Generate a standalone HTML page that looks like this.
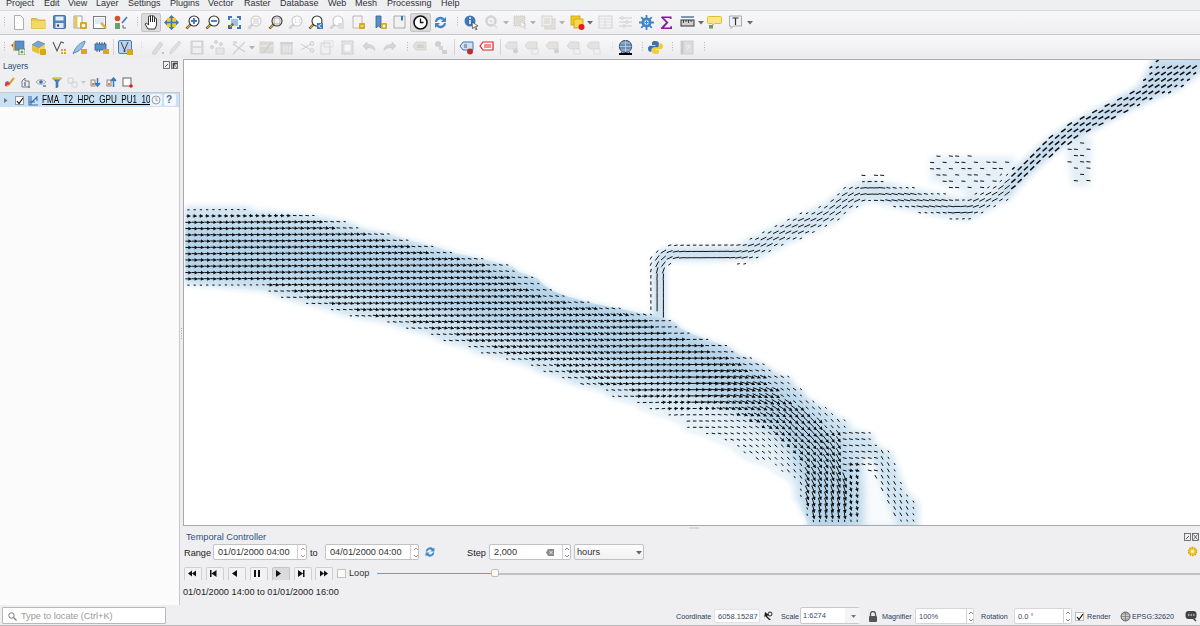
<!DOCTYPE html>
<html><head><meta charset="utf-8">
<style>
*{margin:0;padding:0;box-sizing:border-box}
html,body{width:1200px;height:626px;overflow:hidden;background:#efeff1;font-family:"Liberation Sans",sans-serif;font-size:9px;color:#222;position:relative}
.a{position:absolute}
.t{position:absolute;white-space:nowrap;line-height:1}
#menubar{left:0;top:0;width:1200px;height:11px;background:#eeeff1;border-bottom:1px solid #d9d9db;overflow:hidden}
#menubar span{position:absolute;top:-1.5px;font-size:9px;color:#303036;line-height:1}
#tb1{left:0;top:11px;width:1200px;height:24px;background:linear-gradient(#f8f8fa,#eeeef0);border-bottom:1px solid #c6c6c9}
#tb2{left:0;top:35px;width:1200px;height:23px;background:linear-gradient(#f8f8fa,#ececee)}
#tree{left:0;top:92px;width:180px;height:513px;background:#fbfbfb;border-top:1px solid #c8c8ca;border-right:1px solid #c8c8ca}
#canvas{left:183px;top:59px;width:1017px;height:467px;background:#fff;border-left:1px solid #a9a9ab;border-top:1px solid #a9a9ab;border-bottom:1px solid #a9a9ab;overflow:hidden}
.inp{position:absolute;background:#fff;border:1px solid #c2c2c4;border-radius:2px}
.spin{position:absolute;top:0;bottom:0;border-left:1px solid #d0d0d2}
.btn{position:absolute;top:567px;width:18px;height:13px;border:1px solid #cfcfd1;border-bottom:none;border-radius:2px 2px 0 0;background:#f2f2f4}
</style></head><body>
<div id="menubar" class="a">
<span style="left:6px">Project</span><span style="left:44px">Edit</span><span style="left:68px">View</span><span style="left:96px">Layer</span><span style="left:128px">Settings</span><span style="left:170px">Plugins</span><span style="left:208px">Vector</span><span style="left:244px">Raster</span><span style="left:280px">Database</span><span style="left:328px">Web</span><span style="left:355px">Mesh</span><span style="left:387px">Processing</span><span style="left:441px">Help</span>
</div>
<div id="tb1" class="a"></div>
<div id="tb2" class="a"></div>
<svg class="a" style="left:4px;top:17px" width="2" height="10.0" viewBox="0 0 2 10.0"><rect x="0" y="0.0" width="1" height="1" fill="#b8b8bc"/><rect x="0" y="2.5" width="1" height="1" fill="#b8b8bc"/><rect x="0" y="5.0" width="1" height="1" fill="#b8b8bc"/><rect x="0" y="7.5" width="1" height="1" fill="#b8b8bc"/></svg>
<svg class="a" style="left:13px;top:15px" width="15" height="15" viewBox="0 0 15 15"><path d="M1.5 .5h6l3 3v11h-9z" fill="#fff" stroke="#9a9a9a" stroke-width=".8"/></svg>
<svg class="a" style="left:31px;top:15px" width="15" height="15" viewBox="0 0 15 15"><path d="M.5 3.5h5l1.5 1.5h7v8.5h-13.5z" fill="#e9c74a" stroke="#c9a62a" stroke-width=".8"/><path d="M.5 6h14v7.5h-14z" fill="#f3d866"/></svg>
<svg class="a" style="left:53px;top:15px" width="15" height="15" viewBox="0 0 15 15"><rect x=".5" y=".5" width="12" height="13" rx="1" fill="#4f86c0" stroke="#2f5f95" stroke-width=".8"/><rect x="2.5" y="1.5" width="8" height="4" fill="#e8eef5"/><rect x="2.5" y="8" width="8" height="5" fill="#dfe7f0"/><rect x="4" y="9.5" width="2" height="2" fill="#244"/></svg>
<svg class="a" style="left:73px;top:15px" width="15" height="15" viewBox="0 0 15 15"><path d="M1 1h8v12h-8z" fill="#fff" stroke="#8a8a8a" stroke-width=".8"/><path d="M1.5 1.5h3v11h-3z" fill="#e9c64a"/><rect x="7" y="7" width="7" height="7" rx="1" fill="#d7a81c"/><circle cx="10.5" cy="10.5" r="1.8" fill="#fff"/></svg>
<svg class="a" style="left:93px;top:15px" width="15" height="15" viewBox="0 0 15 15"><rect x=".5" y="1.5" width="12" height="12" fill="#fff" stroke="#707070" stroke-width=".9"/><rect x="2" y="3" width="9" height="6" fill="#dfe9f3"/><path d="M8 8l5 5" stroke="#e0b040" stroke-width="2.5"/></svg>
<svg class="a" style="left:114px;top:15px" width="15" height="15" viewBox="0 0 15 15"><circle cx="3.5" cy="3.5" r="2.8" fill="#d2542c"/><rect x="1" y="8" width="5" height="6" fill="#6c9f6a"/><path d="M8 8l5-6" stroke="#4a7cc0" stroke-width="1.8"/><path d="M9 10v3h3" fill="none" stroke="#555" stroke-width=".9"/></svg>
<svg class="a" style="left:137px;top:17px" width="2" height="10.0" viewBox="0 0 2 10.0"><rect x="0" y="0.0" width="1" height="1" fill="#b8b8bc"/><rect x="0" y="2.5" width="1" height="1" fill="#b8b8bc"/><rect x="0" y="5.0" width="1" height="1" fill="#b8b8bc"/><rect x="0" y="7.5" width="1" height="1" fill="#b8b8bc"/></svg>
<div class="a" style="left:141px;top:13px;width:20px;height:19px;background:#dcdcde;border:1px solid #c4c4c6;border-radius:2px"></div>
<svg class="a" style="left:144px;top:15px" width="15" height="15" viewBox="0 0 15 15"><path d="M4 14l-3-5 1.5-1 2 2v-8a1 1 0 012 0v5-6a1 1 0 012 0v6-5a1 1 0 012 0v5-3a1 1 0 012 0v6l-1.5 4z" fill="#fff" stroke="#222" stroke-width=".9"/></svg>
<svg class="a" style="left:164px;top:15px" width="15" height="15" viewBox="0 0 15 15"><rect x="3" y="3" width="9" height="9" fill="#eec83a"/><path d="M7.5 0l3 3h-6zM7.5 15l3-3h-6zM0 7.5l3-3v6zM15 7.5l-3-3v6z" fill="#3f78b8"/><path d="M7.5 3v9M3 7.5h9" stroke="#3f78b8" stroke-width="1.5"/></svg>
<svg class="a" style="left:185px;top:15px" width="15" height="15" viewBox="0 0 15 15"><circle cx="9" cy="6" r="5" fill="#fff" stroke="#333" stroke-width="1.1"/><path d="M6 6h6M9 3v6" stroke="#3f78b8" stroke-width="1.8"/><path d="M5.5 9.5l-4 4" stroke="#333" stroke-width="2.4"/><path d="M5 10l-3 3" stroke="#e0b020" stroke-width="1.4"/></svg>
<svg class="a" style="left:205px;top:15px" width="15" height="15" viewBox="0 0 15 15"><circle cx="9" cy="6" r="5" fill="#fff" stroke="#333" stroke-width="1.1"/><path d="M6 6h6" stroke="#3f78b8" stroke-width="1.8"/><path d="M5.5 9.5l-4 4" stroke="#333" stroke-width="2.4"/><path d="M5 10l-3 3" stroke="#e0b020" stroke-width="1.4"/></svg>
<svg class="a" style="left:227px;top:15px" width="15" height="15" viewBox="0 0 15 15"><path d="M1 1h4v2h-2v2h-2zM14 1h-4v2h2v2h2zM1 14h4v-2h-2v-2h-2zM14 14h-4v-2h2v-2h2z" fill="#3f78b8"/><rect x="4" y="4" width="7" height="7" fill="#9fc0e0"/><path d="M6 9l-4 4" stroke="#222" stroke-width="2"/><path d="M5.5 9.5l-3 3" stroke="#e0b020" stroke-width="1.2"/></svg>
<svg class="a" style="left:247px;top:15px" width="15" height="15" viewBox="0 0 15 15"><circle cx="9" cy="6" r="5" fill="#fff" stroke="#c8c8c8" stroke-width="1.1"/><rect x="6" y="3" width="6" height="6" fill="#e4e4e4"/><path d="M5.5 9.5l-4 4" stroke="#c8c8c8" stroke-width="2.4"/><path d="M5 10l-3 3" stroke="#d8d8d8" stroke-width="1.4"/></svg>
<svg class="a" style="left:268px;top:15px" width="15" height="15" viewBox="0 0 15 15"><circle cx="9" cy="6" r="5" fill="#fff" stroke="#333" stroke-width="1.1"/><rect x="6" y="3" width="6" height="6" fill="#f0f0f0" stroke="#777" stroke-width=".6"/><path d="M5.5 9.5l-4 4" stroke="#333" stroke-width="2.4"/><path d="M5 10l-3 3" stroke="#e0b020" stroke-width="1.4"/></svg>
<svg class="a" style="left:288px;top:15px" width="15" height="15" viewBox="0 0 15 15"><circle cx="9" cy="6" r="5" fill="#fff" stroke="#c8c8c8" stroke-width="1.1"/><text x="6" y="8" font-size="5" fill="#ccc">1:1</text><path d="M5.5 9.5l-4 4" stroke="#c8c8c8" stroke-width="2.4"/><path d="M5 10l-3 3" stroke="#d8d8d8" stroke-width="1.4"/></svg>
<svg class="a" style="left:308px;top:15px" width="15" height="15" viewBox="0 0 15 15"><circle cx="9" cy="6" r="5" fill="#fff" stroke="#333" stroke-width="1.1"/><rect x="9" y="8" width="6" height="6" fill="#3f78b8"/><path d="M13.5 9l-3 2 3 2" stroke="#fff" fill="none" stroke-width=".9"/><path d="M5.5 9.5l-4 4" stroke="#333" stroke-width="2.4"/><path d="M5 10l-3 3" stroke="#e0b020" stroke-width="1.4"/></svg>
<svg class="a" style="left:329px;top:15px" width="15" height="15" viewBox="0 0 15 15"><circle cx="9" cy="6" r="5" fill="#fff" stroke="#c8c8c8" stroke-width="1.1"/><rect x="9" y="8" width="6" height="6" fill="#ddd"/><path d="M5.5 9.5l-4 4" stroke="#c8c8c8" stroke-width="2.4"/><path d="M5 10l-3 3" stroke="#d8d8d8" stroke-width="1.4"/></svg>
<svg class="a" style="left:352px;top:15px" width="15" height="15" viewBox="0 0 15 15"><path d="M1 1h9v12h-9z" fill="#f4f4f4" stroke="#aaa" stroke-width=".8"/><rect x="7" y="8" width="6" height="6" rx="1" fill="#d7a81c"/><path d="M8.5 11h3" stroke="#fff"/></svg>
<svg class="a" style="left:374px;top:15px" width="15" height="15" viewBox="0 0 15 15"><path d="M2 1h5v12l-2.5-2-2.5 2z" fill="#5b8fc8" stroke="#2f5f95" stroke-width=".8"/><rect x="7" y="8" width="6" height="6" rx="1" fill="#d7a81c"/><circle cx="10" cy="11" r="1.5" fill="#fff"/></svg>
<svg class="a" style="left:393px;top:15px" width="15" height="15" viewBox="0 0 15 15"><path d="M1 1h11v12h-11z" fill="#f1f1f1" stroke="#999" stroke-width=".8"/><path d="M8 1v5l1-1 1 1v-5" fill="#3f78b8"/></svg>
<div class="a" style="left:410px;top:13px;width:21px;height:19px;background:#dcdcde;border:1px solid #c4c4c6;border-radius:2px"></div>
<svg class="a" style="left:413px;top:15px" width="15" height="15" viewBox="0 0 15 15"><circle cx="7.5" cy="7.5" r="6.5" fill="#fff" stroke="#111" stroke-width="1.6"/><path d="M7.5 3.5v4h3" fill="none" stroke="#111" stroke-width="1.3"/></svg>
<svg class="a" style="left:433px;top:15px" width="15" height="15" viewBox="0 0 15 15"><path d="M2 7a5.5 5.5 0 019.5-3.5l1.5-1.5v5h-5l1.8-1.8a3.5 3.5 0 00-5.8 1.8z M13 8a5.5 5.5 0 01-9.5 3.5l-1.5 1.5v-5h5l-1.8 1.8a3.5 3.5 0 005.8-1.8z" fill="#3f86c8"/></svg>
<svg class="a" style="left:457px;top:17px" width="2" height="10.0" viewBox="0 0 2 10.0"><rect x="0" y="0.0" width="1" height="1" fill="#b8b8bc"/><rect x="0" y="2.5" width="1" height="1" fill="#b8b8bc"/><rect x="0" y="5.0" width="1" height="1" fill="#b8b8bc"/><rect x="0" y="7.5" width="1" height="1" fill="#b8b8bc"/></svg>
<svg class="a" style="left:464px;top:15px" width="15" height="15" viewBox="0 0 15 15"><circle cx="6" cy="6" r="5.5" fill="#3f78b8"/><path d="M6 5v4" stroke="#fff" stroke-width="1.5"/><circle cx="6" cy="3" r=".9" fill="#fff"/><path d="M8 7l6 4-2.5.5 1.5 3-1 .5-1.5-3-2 1.5z" fill="#fff" stroke="#333" stroke-width=".7"/></svg>
<svg class="a" style="left:484px;top:15px" width="15" height="15" viewBox="0 0 15 15"><circle cx="7" cy="6" r="4.5" fill="none" stroke="#d3d3d3" stroke-width="2.5"/><circle cx="7" cy="6" r="1.5" fill="#ddd"/><path d="M9 9l4 4" stroke="#ddd" stroke-width="1.5"/></svg>
<svg class="a" style="left:503px;top:21px" width="6" height="4" viewBox="0 0 6 4"><path d="M0 0h6l-3 3.5z" fill="#b4b4b8"/></svg>
<svg class="a" style="left:513px;top:15px" width="15" height="15" viewBox="0 0 15 15"><rect x="1" y="1" width="11" height="10" fill="#e0ddd6" stroke="#c8c8c8" stroke-dasharray="1 1"/><path d="M7 6l6 4-2 .5 1.5 3-1 .5-1.5-3-2 1.5z" fill="#f4f4f4" stroke="#ccc" stroke-width=".7"/></svg>
<svg class="a" style="left:530px;top:21px" width="6" height="4" viewBox="0 0 6 4"><path d="M0 0h6l-3 3.5z" fill="#b4b4b8"/></svg>
<svg class="a" style="left:541px;top:15px" width="15" height="15" viewBox="0 0 15 15"><rect x="4" y="4" width="10" height="10" fill="#e4e1da" stroke="#ccc" stroke-width=".8"/><rect x="1" y="1" width="10" height="10" fill="#f0eee9" stroke="#ccc" stroke-width=".8"/><path d="M3 4h6M3 6h6M3 8h6" stroke="#ccc" stroke-width=".8"/></svg>
<svg class="a" style="left:559px;top:21px" width="6" height="4" viewBox="0 0 6 4"><path d="M0 0h6l-3 3.5z" fill="#b4b4b8"/></svg>
<svg class="a" style="left:570px;top:15px" width="15" height="15" viewBox="0 0 15 15"><rect x="1" y="1" width="9" height="9" fill="#f2cc2c" stroke="#c9a010" stroke-width=".8"/><rect x="4" y="4" width="9" height="9" fill="#f7d84a" stroke="#c9a010" stroke-width=".8"/><circle cx="11.5" cy="12" r="3" fill="#e02020"/></svg>
<svg class="a" style="left:587px;top:21px" width="6" height="4" viewBox="0 0 6 4"><path d="M0 0h6l-3 3.5z" fill="#6a6a6e"/></svg>
<svg class="a" style="left:598px;top:15px" width="15" height="15" viewBox="0 0 15 15"><rect x="1" y="1" width="13" height="12" fill="#f3f3f3" stroke="#d0d0d0" stroke-width=".9"/><path d="M1 4h13M1 7h13M1 10h13M7 4v9" stroke="#d6d6d6" stroke-width=".8"/></svg>
<svg class="a" style="left:618px;top:15px" width="15" height="15" viewBox="0 0 15 15"><path d="M1 3h13M1 7h13M1 11h13" stroke="#cfcfcf" stroke-width="1"/><circle cx="4" cy="3" r="1.3" fill="#fff" stroke="#bbb" stroke-width=".7"/><circle cx="9" cy="7" r="1.3" fill="#fff" stroke="#bbb" stroke-width=".7"/><circle cx="6" cy="11" r="1.3" fill="#fff" stroke="#bbb" stroke-width=".7"/></svg>
<svg class="a" style="left:639px;top:15px" width="15" height="15" viewBox="0 0 15 15"><circle cx="7.5" cy="7.5" r="3.8" fill="#fff" stroke="#3f86c8" stroke-width="2.4"/><path d="M7.5 0v15M0 7.5h15M2.2 2.2l10.6 10.6M12.8 2.2l-10.6 10.6" stroke="#3f86c8" stroke-width="1.8"/><circle cx="7.5" cy="7.5" r="2.2" fill="#fff"/><path d="M5.5 7.5h4M7.5 5.5v4" stroke="#3f86c8" stroke-width="1"/></svg>
<svg class="a" style="left:660px;top:15px" width="15" height="15" viewBox="0 0 15 15"><path d="M1.5 1.5h10v2.5h-1.5l-.5-1h-5.5l4.5 4.5-4.5 5h6l.5-1.2h1.5v2.7h-11v-1.3l5-5.2-5-5z" fill="#8a1a9c"/></svg>
<svg class="a" style="left:680px;top:15px" width="15" height="15" viewBox="0 0 15 15"><path d="M1 2h13" stroke="#2a5a8a" stroke-width="1.2"/><rect x="1" y="5" width="13" height="6" fill="#d0d0d0" stroke="#333" stroke-width="1"/><path d="M3.5 5v3M6 5v2M8.5 5v3M11 5v2" stroke="#333" stroke-width=".9"/></svg>
<svg class="a" style="left:698px;top:21px" width="6" height="4" viewBox="0 0 6 4"><path d="M0 0h6l-3 3.5z" fill="#6a6a6e"/></svg>
<svg class="a" style="left:707px;top:15px" width="15" height="15" viewBox="0 0 15 15"><path d="M1.5 1.5h12a1 1 0 011 1v5a1 1 0 01-1 1h-6l-2 2v-2h-4a1 1 0 01-1-1v-5a1 1 0 011-1z" fill="#f8e78a" stroke="#e0c030" stroke-width="1"/><rect x="2" y="10" width="4" height="3.5" fill="#6c9a6a"/></svg>
<svg class="a" style="left:728px;top:15px" width="15" height="15" viewBox="0 0 15 15"><path d="M1.5 1h12v10h-8l-2.5 2.5v-2.5h-1.5z" fill="#eef2f8" stroke="#999" stroke-width=".8"/><path d="M4.5 3h6M7.5 3v7" stroke="#333" stroke-width="1.2"/></svg>
<svg class="a" style="left:747px;top:21px" width="6" height="4" viewBox="0 0 6 4"><path d="M0 0h6l-3 3.5z" fill="#6a6a6e"/></svg>
<svg class="a" style="left:4px;top:42px" width="2" height="10.0" viewBox="0 0 2 10.0"><rect x="0" y="0.0" width="1" height="1" fill="#b8b8bc"/><rect x="0" y="2.5" width="1" height="1" fill="#b8b8bc"/><rect x="0" y="5.0" width="1" height="1" fill="#b8b8bc"/><rect x="0" y="7.5" width="1" height="1" fill="#b8b8bc"/></svg>
<svg class="a" style="left:10px;top:40px" width="15" height="15" viewBox="0 0 15 15"><path d="M1 5l5-3 4 4-5 4z" fill="#d54a2a"/><rect x="3" y="2" width="8" height="9" fill="#e9c04a"/><rect x="5" y="1" width="9" height="9" fill="#5b8fc8" stroke="#3a6aa0" stroke-width=".6"/><rect x="9" y="9" width="6" height="6" fill="#fff" stroke="#4a8a4a" stroke-width=".9"/><path d="M12 10.5v3M10.5 12h3" stroke="#4a8a4a" stroke-width="1.2"/></svg>
<svg class="a" style="left:31px;top:40px" width="15" height="15" viewBox="0 0 15 15"><path d="M1 5l6-4 7 3-6 4z" fill="#7aa5d8" stroke="#3a6aa0" stroke-width=".6"/><path d="M1 5l7 3v6l-7-3z" fill="#e6c23a"/><path d="M8 8l6-4v6l-6 4z" fill="#f3d65a"/><rect x="9" y="9" width="6" height="6" rx="1" fill="#d7a81c"/></svg>
<svg class="a" style="left:52px;top:40px" width="15" height="15" viewBox="0 0 15 15"><path d="M1 2l4 9 4-9 3 1" fill="none" stroke="#555" stroke-width="1.1"/><rect x="9" y="9" width="2" height="2" fill="#d7a81c"/><rect x="12" y="9" width="2" height="2" fill="#d7a81c"/><rect x="9" y="12" width="2" height="2" fill="#d7a81c"/><rect x="12" y="12" width="2" height="2" fill="#d7a81c"/></svg>
<svg class="a" style="left:72px;top:40px" width="15" height="15" viewBox="0 0 15 15"><path d="M1 14c2-6 6-11 12-13-1 6-5 10-11 12z" fill="#9cc0e0" stroke="#4a7ab0" stroke-width=".8"/><rect x="9" y="9" width="6" height="5" fill="#d7a81c"/></svg>
<svg class="a" style="left:94px;top:40px" width="15" height="15" viewBox="0 0 15 15"><rect x="1" y="4" width="11" height="6" fill="#5b8fc8" stroke="#2f5f95" stroke-width=".8"/><path d="M3 2v2M5.5 2v2M8 2v2M10.5 2v2M3 10v2M5.5 10v2" stroke="#2f5f95" stroke-width=".9"/><rect x="9" y="9" width="6" height="5" fill="#d7a81c"/></svg>
<div class="a" style="left:113px;top:39px;width:1px;height:16px;background:#d4d4d8"></div>
<svg class="a" style="left:118px;top:40px" width="15" height="15" viewBox="0 0 15 15"><rect x=".5" y=".5" width="13" height="13" rx="1.5" fill="#b8d4ec" stroke="#4a7ab0" stroke-width="1"/><path d="M3 2l3.5 8 3.5-8" fill="none" stroke="#333" stroke-width=".9"/><circle cx="6.5" cy="11" r="1" fill="#333"/><rect x="9" y="9" width="6" height="6" fill="#d7a81c"/></svg>
<svg class="a" style="left:141px;top:42px" width="2" height="10.0" viewBox="0 0 2 10.0"><rect x="0" y="0.0" width="1" height="1" fill="#dadade"/><rect x="0" y="2.5" width="1" height="1" fill="#dadade"/><rect x="0" y="5.0" width="1" height="1" fill="#dadade"/><rect x="0" y="7.5" width="1" height="1" fill="#dadade"/></svg>
<svg class="a" style="left:150px;top:40px" width="15" height="15" viewBox="0 0 15 15"><path d="M2 13l8-11 3 2-8 11z" fill="#dcdcdc" stroke="#c8c8c8" stroke-width=".7"/><path d="M12 13h2" stroke="#999" stroke-width="1"/></svg>
<svg class="a" style="left:168px;top:40px" width="15" height="15" viewBox="0 0 15 15"><path d="M2 14l1-4 8-9 2 2-8 9z" fill="#e0e0e0" stroke="#cacaca" stroke-width=".7"/></svg>
<svg class="a" style="left:190px;top:40px" width="15" height="15" viewBox="0 0 15 15"><rect x="1" y="1" width="12" height="13" fill="#dadada" stroke="#c8c8c8" stroke-width=".8"/><rect x="3" y="2" width="8" height="4" fill="#f2f2f2"/><rect x="3" y="8" width="8" height="5" fill="#eee"/></svg>
<svg class="a" style="left:210px;top:40px" width="15" height="15" viewBox="0 0 15 15"><circle cx="2" cy="7" r="1.5" fill="#ddd" stroke="#c0c0c0" stroke-width=".6"/><circle cx="6" cy="2" r="1.5" fill="#ddd" stroke="#c0c0c0" stroke-width=".6"/><circle cx="11" cy="4" r="1.5" fill="#ddd" stroke="#c0c0c0" stroke-width=".6"/><rect x="6" y="8" width="8" height="6" fill="#e6e6e6" stroke="#c8c8c8" stroke-width=".7"/></svg>
<svg class="a" style="left:232px;top:40px" width="15" height="15" viewBox="0 0 15 15"><path d="M1 14l12-12M1 4l12 8" stroke="#cfcfcf" stroke-width="1.2"/><rect x="1" y="1" width="4" height="3" fill="#ddd"/></svg>
<svg class="a" style="left:249px;top:46px" width="6" height="4" viewBox="0 0 6 4"><path d="M0 0h6l-3 3.5z" fill="#b4b4b8"/></svg>
<svg class="a" style="left:259px;top:40px" width="15" height="15" viewBox="0 0 15 15"><rect x="1" y="2" width="13" height="11" fill="#dcdad4" stroke="#cfcfcf" stroke-width=".8"/><path d="M1 6h13" stroke="#eee" stroke-width="1"/><path d="M4 13l8-10" stroke="#cfcfcf" stroke-width="1.5"/></svg>
<svg class="a" style="left:279px;top:40px" width="15" height="15" viewBox="0 0 15 15"><rect x="2" y="3" width="11" height="11" fill="#dcdcdc" stroke="#cacaca" stroke-width=".8"/><path d="M1 3h13" stroke="#ccc" stroke-width="1.5"/><path d="M5 6v6M8 6v6M11 6v6" stroke="#eee"/></svg>
<svg class="a" style="left:300px;top:40px" width="15" height="15" viewBox="0 0 15 15"><path d="M1 4l10 6M1 10l10-6" stroke="#cfcfcf" stroke-width="1"/><circle cx="12" cy="3.5" r="1.8" fill="none" stroke="#c8c8c8"/><circle cx="12" cy="10.5" r="1.8" fill="none" stroke="#c8c8c8"/></svg>
<svg class="a" style="left:320px;top:40px" width="15" height="15" viewBox="0 0 15 15"><rect x="1" y="3" width="9" height="11" fill="#f0f0f0" stroke="#cacaca" stroke-width=".8"/><rect x="4" y="1" width="9" height="6" fill="none" stroke="#d6d6d6" stroke-width=".8"/></svg>
<svg class="a" style="left:341px;top:40px" width="15" height="15" viewBox="0 0 15 15"><rect x="1" y="1" width="11" height="13" fill="#e6e6e6" stroke="#c6c6c6" stroke-width=".8"/><rect x="3" y="4" width="7" height="8" fill="#f6f6f6" stroke="#ccc" stroke-width=".6"/></svg>
<svg class="a" style="left:362px;top:40px" width="15" height="15" viewBox="0 0 15 15"><path d="M1 6l4-4v2.5c5 0 8 2 8 6-1.5-2-4-3-8-3v2.5z" fill="#d6d6d6" stroke="#c6c6c6" stroke-width=".6"/></svg>
<svg class="a" style="left:382px;top:40px" width="15" height="15" viewBox="0 0 15 15"><path d="M14 6l-4-4v2.5c-5 0-8 2-8 6 1.5-2 4-3 8-3v2.5z" fill="#d6d6d6" stroke="#c6c6c6" stroke-width=".6"/></svg>
<svg class="a" style="left:407px;top:42px" width="2" height="10.0" viewBox="0 0 2 10.0"><rect x="0" y="0.0" width="1" height="1" fill="#b8b8bc"/><rect x="0" y="2.5" width="1" height="1" fill="#b8b8bc"/><rect x="0" y="5.0" width="1" height="1" fill="#b8b8bc"/><rect x="0" y="7.5" width="1" height="1" fill="#b8b8bc"/></svg>
<svg class="a" style="left:412px;top:40px" width="15" height="15" viewBox="0 0 15 15"><path d="M1 6l3-4h10v8h-10z" fill="#e2e0da" stroke="#cfcfcf" stroke-width=".7"/><text x="5" y="8" font-size="4.5" fill="#bbb" font-family="Liberation Sans">abc</text></svg>
<svg class="a" style="left:434px;top:40px" width="15" height="15" viewBox="0 0 15 15"><circle cx="4" cy="4" r="3" fill="#cfcfcf"/><rect x="5" y="6" width="4" height="4" fill="#d5d5d5"/><rect x="8" y="10" width="5" height="4" fill="#d0d0d0"/></svg>
<div class="a" style="left:454px;top:39px;width:1px;height:16px;background:#d4d4d8"></div>
<svg class="a" style="left:459px;top:40px" width="15" height="15" viewBox="0 0 15 15"><path d="M1 6l3-4h10v8h-10z" fill="#cfe0f2" stroke="#3f78b8" stroke-width="1"/><path d="M5 5h3M5 7h3" stroke="#345" stroke-width=".8"/><circle cx="11" cy="11.5" r="3" fill="#b83030"/></svg>
<svg class="a" style="left:479px;top:40px" width="15" height="15" viewBox="0 0 15 15"><path d="M1 6l3-4h10v8h-10z" fill="#fff" stroke="#e02020" stroke-width="1.2"/><path d="M5 5h7M5 7h7" stroke="#e02020" stroke-width="1"/></svg>
<div class="a" style="left:500px;top:39px;width:1px;height:16px;background:#d4d4d8"></div>
<svg class="a" style="left:504px;top:40px" width="15" height="15" viewBox="0 0 15 15"><path d="M1 6l3-4h9v7h-9z" fill="#e4e2dc" stroke="#d0d0d0" stroke-width=".7"/><circle cx="11.5" cy="11" r="2.5" fill="#d0d0d0"/></svg>
<svg class="a" style="left:524px;top:40px" width="15" height="15" viewBox="0 0 15 15"><path d="M1 6l3-4h9v7h-9z" fill="#e4e2dc" stroke="#d0d0d0" stroke-width=".7"/><rect x="8" y="9" width="6" height="5" fill="#f0f0f0" stroke="#d0d0d0" stroke-width=".6"/></svg>
<svg class="a" style="left:545px;top:40px" width="15" height="15" viewBox="0 0 15 15"><path d="M1 6l3-4h9v7h-9z" fill="#e4e2dc" stroke="#d0d0d0" stroke-width=".7"/><circle cx="11.5" cy="11" r="2.5" fill="#d0d0d0"/></svg>
<svg class="a" style="left:566px;top:40px" width="15" height="15" viewBox="0 0 15 15"><path d="M1 6l3-4h9v7h-9z" fill="#e4e2dc" stroke="#d0d0d0" stroke-width=".7"/><rect x="8" y="9" width="6" height="5" fill="#f0f0f0" stroke="#d0d0d0" stroke-width=".6"/></svg>
<svg class="a" style="left:586px;top:40px" width="15" height="15" viewBox="0 0 15 15"><path d="M1 6l3-4h9v7h-9z" fill="#e4e2dc" stroke="#d0d0d0" stroke-width=".7"/><rect x="8" y="9" width="6" height="5" fill="#f0f0f0" stroke="#d0d0d0" stroke-width=".6"/></svg>
<svg class="a" style="left:612px;top:42px" width="2" height="10.0" viewBox="0 0 2 10.0"><rect x="0" y="0.0" width="1" height="1" fill="#dadade"/><rect x="0" y="2.5" width="1" height="1" fill="#dadade"/><rect x="0" y="5.0" width="1" height="1" fill="#dadade"/><rect x="0" y="7.5" width="1" height="1" fill="#dadade"/></svg>
<svg class="a" style="left:618px;top:40px" width="15" height="15" viewBox="0 0 15 15"><circle cx="7.5" cy="6.5" r="6.2" fill="#6b8fb8" stroke="#2a3a55" stroke-width=".8"/><path d="M1.5 6.5h12M7.5 0.5v12M3 3h9M3 10h9" stroke="#dde6f0" stroke-width=".6"/><path d="M1 15l2.5-3 2.5 3zM5.5 15l2-3 2 3zM9 15l2.5-3 2.5 3z" fill="#000"/><rect x="1" y="13" width="13" height="2" fill="#000"/></svg>
<svg class="a" style="left:642px;top:42px" width="2" height="10.0" viewBox="0 0 2 10.0"><rect x="0" y="0.0" width="1" height="1" fill="#b8b8bc"/><rect x="0" y="2.5" width="1" height="1" fill="#b8b8bc"/><rect x="0" y="5.0" width="1" height="1" fill="#b8b8bc"/><rect x="0" y="7.5" width="1" height="1" fill="#b8b8bc"/></svg>
<svg class="a" style="left:648px;top:40px" width="15" height="15" viewBox="0 0 15 15"><path d="M7 1c-3 0-3 1.5-3 2.5v1.5h3.5v.8h-5c-1.5 0-2.5 1-2.5 3s1 3 2.5 3h1v-1.8c0-1.2 1-2.2 2.2-2.2h3.3c1 0 1.8-.8 1.8-1.8v-3c0-1.2-1.3-2-3.8-2z" fill="#3a72b0"/><path d="M8 14c3 0 3-1.5 3-2.5v-1.5h-3.5v-.8h5c1.5 0 2.5-1 2.5-3s-1-3-2.5-3h-1v1.8c0 1.2-1 2.2-2.2 2.2h-3.3c-1 0-1.8.8-1.8 1.8v3c0 1.2 1.3 2 3.8 2z" fill="#f2cc30"/></svg>
<svg class="a" style="left:672px;top:42px" width="2" height="10.0" viewBox="0 0 2 10.0"><rect x="0" y="0.0" width="1" height="1" fill="#b8b8bc"/><rect x="0" y="2.5" width="1" height="1" fill="#b8b8bc"/><rect x="0" y="5.0" width="1" height="1" fill="#b8b8bc"/><rect x="0" y="7.5" width="1" height="1" fill="#b8b8bc"/></svg>
<svg class="a" style="left:680px;top:40px" width="15" height="15" viewBox="0 0 15 15"><rect x="1" y="1" width="12" height="13" fill="#dcdcdc" stroke="#c8c8c8" stroke-width=".8"/><rect x="1" y="1" width="2.5" height="13" fill="#c8c8c8"/><text x="5.5" y="10" font-size="8" fill="#fff" font-family="Liberation Sans">?</text></svg>
<svg class="a" style="left:704px;top:42px" width="2" height="10.0" viewBox="0 0 2 10.0"><rect x="0" y="0.0" width="1" height="1" fill="#b8b8bc"/><rect x="0" y="2.5" width="1" height="1" fill="#b8b8bc"/><rect x="0" y="5.0" width="1" height="1" fill="#b8b8bc"/><rect x="0" y="7.5" width="1" height="1" fill="#b8b8bc"/></svg>
<!-- left dock -->
<div class="t" style="left:3px;top:62px;font-size:8.4px;color:#2c4a78">Layers</div>
<svg class="a" style="left:163px;top:61px" width="16" height="9" viewBox="0 0 16 9"><rect x=".5" y=".5" width="6" height="7" fill="none" stroke="#555" stroke-width=".8"/><path d="M2 6l3-3" stroke="#555"/><rect x="8.5" y=".5" width="6" height="7" fill="none" stroke="#555" stroke-width=".8"/><path d="M10 2h4v1h-3v4h-1zM11 3l3 4" stroke="#444" stroke-width=".7" fill="#444"/></svg>
<svg class="a" style="left:4px;top:77px" width="11" height="11" viewBox="0 0 11 11"><path d="M5 7l5-6" stroke="#e0a030" stroke-width="2"/><path d="M1 6c1-2 3-2 4-1l1 2c-1 2-3 3-5 2z" fill="#e04040"/><path d="M2 6l3 1" stroke="#3a70c0" stroke-width="1.2"/><path d="M3 9l2-1" stroke="#f0c030" stroke-width="1.2"/></svg>
<svg class="a" style="left:20px;top:77px" width="11" height="11" viewBox="0 0 11 11"><path d="M2 10V4l3-3v3h4v6z" fill="none" stroke="#777" stroke-width="1"/><path d="M5 5v4" stroke="#2a6ab0" stroke-width="1.2"/><circle cx="9" cy="10" r="1" fill="#4a9a4a"/></svg>
<svg class="a" style="left:35px;top:77px" width="12" height="11" viewBox="0 0 12 11"><path d="M1 5c2-3 8-3 10 0-2 3-8 3-10 0z" fill="#e8ecf0" stroke="#999" stroke-width=".8"/><circle cx="6" cy="5" r="1.8" fill="#3a70b0"/><path d="M8 9h3" stroke="#333" stroke-width="1"/></svg>
<svg class="a" style="left:52px;top:77px" width="10" height="11" viewBox="0 0 10 11"><path d="M.5 1h9l-3.5 4v5l-2 1v-6z" fill="#4a80bc" stroke="#3a6aa0" stroke-width=".6"/><rect x=".5" y="1" width="9" height="1.5" fill="#e0c050"/></svg>
<svg class="a" style="left:67px;top:77px" width="11" height="11" viewBox="0 0 11 11"><rect x="1" y="1" width="5" height="5" rx="1" fill="none" stroke="#d0d0d0"/><rect x="5" y="5" width="5" height="5" rx="1" fill="none" stroke="#d0d0d0"/></svg>
<svg class="a" style="left:81px;top:81px" width="6" height="4" viewBox="0 0 6 4"><path d="M0 0h5l-2.5 3z" fill="#c6c6c6"/></svg>
<svg class="a" style="left:90px;top:77px" width="11" height="11" viewBox="0 0 11 11"><rect x="1" y="3" width="4" height="6" fill="none" stroke="#777" stroke-width=".8"/><rect x="2" y="6" width="2" height="2" fill="#f08020"/><path d="M7.5 1v7M5 6l2.5 3 2.5-3" fill="#3a78c0" stroke="#3a78c0" stroke-width="1.5"/></svg>
<svg class="a" style="left:106px;top:77px" width="11" height="11" viewBox="0 0 11 11"><rect x="1" y="3" width="4" height="6" fill="none" stroke="#777" stroke-width=".8"/><rect x="2" y="6" width="2" height="2" fill="#f08020"/><path d="M7.5 10V3M5 4l2.5-3 2.5 3" fill="#3a78c0" stroke="#3a78c0" stroke-width="1.5"/></svg>
<svg class="a" style="left:122px;top:77px" width="11" height="11" viewBox="0 0 11 11"><rect x="1" y="1" width="8" height="8" fill="#fff" stroke="#666" stroke-width="1"/><circle cx="9" cy="9" r="1.8" fill="#e02020"/></svg>
<div id="tree" class="a">
<div class="a" style="left:0;top:0;width:179px;height:14px;background:#c9e1f5"></div>
<svg class="a" style="left:4px;top:5px" width="4" height="5"><path d="M0 0l3.5 2.5-3.5 2.5z" fill="#777"/></svg>
<div class="a" style="left:15px;top:3px;width:9px;height:9px;background:#fff;border:1px solid #9a9a9c"></div>
<svg class="a" style="left:16px;top:4px" width="8" height="8"><path d="M1 4l2 2.5 4-5.5" fill="none" stroke="#111" stroke-width="1.2"/></svg>
<svg class="a" style="left:28px;top:2px" width="11" height="11"><path d="M1 1v9h9M3 1v9M1 7h6M3 8l6-6M9 1v5" fill="none" stroke="#3f6fa8" stroke-width="1.1"/></svg>
<div class="a" style="left:42px;top:0;width:108px;height:14px;overflow:hidden"><div class="t" style="left:0;top:2px;font-size:10.4px;transform:scaleX(.78);transform-origin:0 0;color:#000;text-decoration:underline">FMA_T2_HPC_GPU_PU1_10</div></div>
<div class="a" style="left:150px;top:1px;width:12px;height:12px;background:#eef4fa;border-radius:2px"></div>
<svg class="a" style="left:151px;top:2px" width="10" height="10"><circle cx="5" cy="5" r="4" fill="none" stroke="#888" stroke-width=".8"/><path d="M5 2.5v3h1.5" fill="none" stroke="#888" stroke-width=".7"/></svg>
<div class="a" style="left:164px;top:1px;width:12px;height:12px;background:#f4f7fb;border-radius:2px"></div>
<div class="t" style="left:166px;top:2px;font-size:10px;font-weight:bold;color:#4a6e94">?</div>
</div>
<div class="a" style="left:180px;top:60px;width:3px;height:546px;background:#efeff1"></div>
<svg class="a" style="left:180px;top:327px" width="3" height="13"><path d="M1.5 1v1M1.5 3.5v1M1.5 6v1M1.5 8.5v1M1.5 11v1" stroke="#a8a8aa" stroke-width="1"/></svg>
<div id="canvas" class="a"><svg width="1016" height="465" viewBox="0 0 1016 465" style="position:absolute;left:0;top:0">
<defs><filter id="bl" x="-10%" y="-10%" width="120%" height="120%"><feGaussianBlur stdDeviation="3"/></filter>
<filter id="bl2" x="-10%" y="-10%" width="120%" height="120%"><feGaussianBlur stdDeviation="8"/></filter></defs>
<g filter="url(#bl)">
<polygon points="-0.6,146.6 66,146.6 66,149.6 133,155.8 165,162.1 178,168.3 208,174.6 227,180.8 253,187.1 272,193.3 301,199.6 328,205.9 335,212.1 354,218.4 359,224.6 369,230.9 385,237.1 409,243.4 440,249.6 469,255.9 491,262.1 497,268.4 510,274.6 527,280.9 546,287.1 554,293.4 569,299.6 584,305.9 591,312.1 609,318.4 610,324.6 620,330.9 623,337.1 633,343.4 646,349.6 653,355.9 666,362.1 666,368.4 690,374.6 690,380.9 696,387.1 709,393.4 710,399.6 713,405.9 716,412.1 716,418.4 721,424.6 722,430.9 728,437.1 735,443.4 735,449.6 735,455.9 735,462.1 735,470 623,470 623,462.1 621,455.9 617,449.6 615,443.4 610,437.1 610,430.9 609,424.6 604,418.4 592,412.1 586,405.9 566,399.6 555,393.4 549,387.1 535,380.9 521,374.6 500,368.4 497,362.1 481,355.9 460,349.6 450,343.4 426,337.1 419,330.9 390,324.6 376,318.4 355,312.1 344,305.9 320,299.6 295,293.4 281,287.1 257,280.9 244,274.6 218,268.4 201,262.1 162,255.9 145,249.6 119,243.4 95,237.1 81,230.9 1.4,224.6 1.4,218.4 1.4,212.1 1.4,205.9 1.4,199.6 1.4,193.3 1.4,187.1 1.4,180.8 1.4,174.6 1.4,168.3 1.4,162.1 1.4,155.8 1.4,149.6" fill="#d2e5f2"/>
<path d="M475 274 L475 202 L480 196 L488 194 L561 193 L601 173 L646 153 L666 137 L686 130 L716 137 L756 145 L781 150 L801 140 L825 127 L839 113 L856 97 L875 81 L894 67 L926 50 L966 28 L1001 6 L1026 -10" fill="none" stroke="#cfe2f1" stroke-width="14" stroke-linejoin="round"/>
<path d="M561 193 L601 173 L646 153 L666 137 L686 130 L716 137 L756 145 L781 150 L801 140 L825 127" fill="none" stroke="#d6e7f3" stroke-width="22" stroke-linejoin="round"/>
<polygon points="816,113 836,104 857,84 884,64 911,50 936,36 954,27 966,5 970,-3 1021,-3 1021,10 997,28 975,37 943,52 914,68 884,84 861,100 839,120 821,140" fill="#c6dcee"/>
<polygon points="746,96 831,96 831,116 801,140 746,120" fill="#e6f0f8"/><polygon points="881,78 908,78 906,126 888,126" fill="#e3eef7"/>
</g>
<polygon points="680,398 688,398 712,466 680,466" fill="#fff" opacity=".85" filter="url(#bl)"/>
<clipPath id="cp"><polygon points="-0.6,146.6 66,146.6 66,149.6 133,155.8 165,162.1 178,168.3 208,174.6 227,180.8 253,187.1 272,193.3 301,199.6 328,205.9 335,212.1 354,218.4 359,224.6 369,230.9 385,237.1 409,243.4 440,249.6 469,255.9 491,262.1 497,268.4 510,274.6 527,280.9 546,287.1 554,293.4 569,299.6 584,305.9 591,312.1 609,318.4 610,324.6 620,330.9 623,337.1 633,343.4 646,349.6 653,355.9 666,362.1 666,368.4 690,374.6 690,380.9 696,387.1 709,393.4 710,399.6 713,405.9 716,412.1 716,418.4 721,424.6 722,430.9 728,437.1 735,443.4 735,449.6 735,455.9 735,462.1 735,470 623,470 623,462.1 621,455.9 617,449.6 615,443.4 610,437.1 610,430.9 609,424.6 604,418.4 592,412.1 586,405.9 566,399.6 555,393.4 549,387.1 535,380.9 521,374.6 500,368.4 497,362.1 481,355.9 460,349.6 450,343.4 426,337.1 419,330.9 390,324.6 376,318.4 355,312.1 344,305.9 320,299.6 295,293.4 281,287.1 257,280.9 244,274.6 218,268.4 201,262.1 162,255.9 145,249.6 119,243.4 95,237.1 81,230.9 1.4,224.6 1.4,218.4 1.4,212.1 1.4,205.9 1.4,199.6 1.4,193.3 1.4,187.1 1.4,180.8 1.4,174.6 1.4,168.3 1.4,162.1 1.4,155.8 1.4,149.6"/></clipPath>
<g clip-path="url(#cp)"><polygon points="-34,162 116,166 266,192 376,222 466,252 536,285 606,330 656,380 674,430 674,470 626,470 621,430 596,385 536,340 456,312 336,275 216,240 116,220 -34,215" fill="#abcde6" filter="url(#bl2)" opacity=".75"/>
<polygon points="436,338 516,345 576,360 608,390 616,430 611,445 586,420 556,400 516,382 466,360 416,340" fill="#fff" filter="url(#bl2)" opacity=".45"/></g>
<path d="M3.3 149.8l2.2 0.1M9.6 149.7l2.2 0.1M15.8 149.7l2.2 0.1M22.1 149.7l2.2 0.1M28.3 149.6l2.2 0.1M34.6 149.6l2.2 0.1M40.8 149.6l2.2 0.1M47.1 149.5l2.2 0.2M53.3 149.5l2.2 0.2M59.6 149.5l2.2 0.2M2.4 156l4 0.1M8.7 156l4 0.2M14.9 155.9l4 0.2M21.2 155.9l4 0.2M27.4 155.9l4 0.2M33.7 155.8l4 0.2M39.9 155.8l4 0.3M46.2 155.7l4 0.3M52.4 155.7l4 0.3M58.7 155.7l4 0.3M64.9 155.7l4 0.3M71.2 155.6l4 0.3M77.4 155.6l4 0.3M83.7 155.6l4 0.3M89.9 155.5l4 0.3M96.2 155.5l4 0.3M102.4 155.5l4 0.3M108.9 155.4l3.6 0.3M115.1 155.4l3.6 0.4M121.4 155.4l3.6 0.4M128.3 155.4l2.2 0.2M1.4 162.3l6 0.2M7.7 162.2l6 0.2M13.9 162.2l6 0.3M20.2 162.1l6 0.3M26.4 162.1l6 0.3M32.7 162l6 0.4M38.9 162l6 0.4M45.2 162l6 0.4M51.4 161.9l6 0.4M57.7 161.9l6 0.4M63.9 161.9l6 0.4M70.2 161.8l6 0.4M76.4 161.8l6 0.4M82.7 161.8l6 0.5M88.9 161.7l6 0.5M95.2 161.7l6 0.5M101.4 161.6l6 0.5M107.7 161.6l6 0.6M113.9 161.6l6 0.6M120.2 161.5l6 0.6M126.4 161.5l6 0.7M132.7 161.4l6 0.7M140.1 161.5l3.6 0.4M146.4 161.5l3.6 0.5M152.6 161.4l3.6 0.5M159.6 161.5l2.2 0.3M1.4 168.5l6 0.2M7.7 168.5l6 0.2M13.9 168.4l6 0.3M20.2 168.4l6 0.3M26.4 168.4l6 0.3M32.7 168.3l6 0.4M38.9 168.3l6 0.4M45.2 168.2l6 0.4M51.4 168.2l6 0.4M57.7 168.2l6 0.4M63.9 168.1l6 0.4M70.2 168.1l6 0.4M76.4 168.1l6 0.4M82.7 168l6 0.5M88.9 168l6 0.5M95.2 168l6 0.5M101.4 167.9l6 0.5M107.7 167.9l6 0.6M113.9 167.8l6 0.6M120.2 167.8l6 0.6M126.4 167.7l6 0.7M132.7 167.7l6 0.7M138.9 167.7l6 0.7M145.2 167.6l5.9 0.8M152.6 167.7l3.6 0.5M158.9 167.7l3.6 0.5M165.1 167.7l3.6 0.5M172.1 167.7l2.2 0.3M1.4 174.8l6 0.2M7.7 174.8l6 0.2M13.9 174.7l6 0.3M20.2 174.7l6 0.3M26.4 174.6l6 0.3M32.7 174.6l6 0.4M38.9 174.6l6 0.4M45.2 174.5l6 0.4M51.4 174.5l6 0.4M57.7 174.5l6 0.4M63.9 174.4l6 0.4M70.2 174.4l6 0.4M76.4 174.4l6 0.4M82.7 174.3l6 0.5M88.9 174.3l6 0.5M95.2 174.2l6 0.5M101.4 174.2l6 0.5M107.7 174.2l6 0.6M113.9 174.1l6 0.6M120.2 174.1l6 0.6M126.4 174l6 0.7M132.7 174l6 0.7M138.9 173.9l6 0.7M145.2 173.9l5.9 0.8M151.4 173.8l5.9 0.8M157.7 173.8l5.9 0.8M163.9 173.8l5.9 0.9M170.2 173.7l5.9 0.9M176.4 173.7l5.9 0.9M183.9 173.8l3.6 0.5M190.1 173.8l3.6 0.6M196.4 173.8l3.6 0.6M203.3 173.8l2.2 0.3M1.4 181.1l6 0.2M7.7 181.1l6 0.2M13.9 181l6 0.3M20.2 181l6 0.3M26.4 180.9l6 0.3M32.7 180.9l6 0.4M38.9 180.8l6 0.4M45.2 180.8l6 0.4M51.4 180.8l6 0.4M57.7 180.7l6 0.4M63.9 180.7l6 0.4M70.2 180.7l6 0.4M76.4 180.6l6 0.4M82.7 180.6l6 0.5M88.9 180.6l6 0.5M95.2 180.5l6 0.5M101.4 180.5l6 0.5M107.7 180.4l6 0.6M113.9 180.4l6 0.6M120.2 180.3l6 0.6M126.4 180.3l6 0.7M132.7 180.3l6 0.7M138.9 180.2l6 0.8M145.2 180.2l5.9 0.8M151.4 180.1l5.9 0.8M157.7 180.1l5.9 0.8M163.9 180l5.9 0.9M170.2 180l5.9 0.9M176.4 180l5.9 0.9M182.7 179.9l5.9 0.9M188.9 179.9l5.9 0.9M195.2 179.9l5.9 0.9M202.6 180l3.6 0.6M208.9 180l3.6 0.6M215.1 180l3.6 0.6M222.1 180l2.2 0.3M1.4 187.4l6 0.2M7.7 187.3l6 0.2M13.9 187.3l6 0.3M20.2 187.2l6 0.3M26.4 187.2l6 0.3M32.7 187.2l6 0.4M38.9 187.1l6 0.4M45.2 187.1l6 0.4M51.4 187l6 0.4M57.7 187l6 0.4M63.9 187l6 0.4M70.2 187l6 0.4M76.4 186.9l6 0.4M82.7 186.9l6 0.5M88.9 186.8l6 0.5M95.2 186.8l6 0.5M101.4 186.8l6 0.5M107.7 186.7l6 0.6M113.9 186.7l6 0.6M120.2 186.6l6 0.6M126.4 186.6l6 0.7M132.7 186.5l6 0.7M138.9 186.5l6 0.8M145.2 186.4l5.9 0.8M151.4 186.4l5.9 0.8M157.7 186.4l5.9 0.8M163.9 186.3l5.9 0.9M170.2 186.3l5.9 0.9M176.4 186.2l5.9 0.9M182.7 186.2l5.9 0.9M188.9 186.2l5.9 0.9M195.2 186.1l5.9 0.9M201.4 186.1l5.9 0.9M207.7 186.1l5.9 0.9M213.9 186l5.9 0.9M220.2 186l5.9 0.9M227.6 186.2l3.6 0.6M233.9 186.2l3.6 0.6M240.1 186.1l3.6 0.6M247.1 186.2l2.2 0.4M1.4 193.7l6 0.2M7.7 193.6l6 0.2M13.9 193.6l6 0.3M20.2 193.5l6 0.3M26.4 193.5l6 0.3M32.7 193.4l6 0.4M38.9 193.4l6 0.4M45.2 193.4l6 0.4M51.4 193.3l6 0.4M57.7 193.3l6 0.4M63.9 193.3l6 0.4M70.2 193.2l6 0.4M76.4 193.2l6 0.5M82.7 193.2l6 0.5M88.9 193.1l6 0.5M95.2 193.1l6 0.5M101.4 193l6 0.5M107.7 193l6 0.6M113.9 192.9l6 0.6M120.2 192.9l6 0.7M126.4 192.9l6 0.7M132.7 192.8l6 0.7M138.9 192.8l6 0.8M145.2 192.7l5.9 0.8M151.4 192.7l5.9 0.8M157.7 192.6l5.9 0.8M163.9 192.6l5.9 0.9M170.2 192.6l5.9 0.9M176.4 192.5l5.9 0.9M182.7 192.5l5.9 0.9M188.9 192.5l5.9 0.9M195.2 192.4l5.9 0.9M201.4 192.4l5.9 0.9M207.7 192.4l5.9 0.9M213.9 192.3l5.9 0.9M220.2 192.3l5.9 1M226.4 192.3l5.9 1M232.7 192.2l5.9 1M238.9 192.2l5.9 1M246.4 192.4l3.6 0.6M252.6 192.3l3.6 0.6M258.9 192.3l3.5 0.6M265.8 192.4l2.2 0.4M1.4 199.9l6 0.2M7.7 199.9l6 0.2M13.9 199.8l6 0.3M20.2 199.8l6 0.3M26.4 199.8l6 0.3M32.7 199.7l6 0.4M38.9 199.7l6 0.4M45.2 199.6l6 0.4M51.4 199.6l6 0.4M57.7 199.6l6 0.4M63.9 199.5l6 0.4M70.2 199.5l6 0.4M76.4 199.5l6 0.5M82.7 199.4l6 0.5M88.9 199.4l6 0.5M95.2 199.4l6 0.5M101.4 199.3l6 0.5M107.7 199.3l6 0.6M113.9 199.2l6 0.6M120.2 199.2l6 0.7M126.4 199.1l6 0.7M132.7 199.1l6 0.7M138.9 199l6 0.8M145.2 199l5.9 0.8M151.4 199l5.9 0.8M157.7 198.9l5.9 0.8M163.9 198.9l5.9 0.9M170.2 198.8l5.9 0.9M176.4 198.8l5.9 0.9M182.7 198.8l5.9 0.9M188.9 198.7l5.9 0.9M195.2 198.7l5.9 0.9M201.4 198.7l5.9 0.9M207.7 198.6l5.9 0.9M213.9 198.6l5.9 0.9M220.2 198.6l5.9 1M226.4 198.6l5.9 1M232.7 198.5l5.9 1M238.9 198.5l5.9 1M245.2 198.5l5.9 1M251.4 198.4l5.9 1M257.7 198.4l5.9 1M263.9 198.3l5.9 1M270.2 198.3l5.9 1M277.6 198.5l3.5 0.6M283.9 198.5l3.5 0.6M290.1 198.4l3.5 0.7M297.1 198.5l2.2 0.4M1.4 206.2l6 0.2M7.7 206.2l6 0.2M13.9 206.1l6 0.3M20.2 206.1l6 0.3M26.4 206l6 0.3M32.7 206l6 0.4M38.9 206l6 0.4M45.2 205.9l6 0.4M51.4 205.9l6 0.4M57.7 205.8l6 0.4M63.9 205.8l6 0.4M70.2 205.8l6 0.4M76.4 205.8l6 0.5M82.7 205.7l6 0.5M88.9 205.7l6 0.5M95.2 205.6l6 0.5M101.4 205.6l6 0.6M107.7 205.5l6 0.6M113.9 205.5l6 0.6M120.2 205.5l6 0.7M126.4 205.4l6 0.7M132.7 205.4l6 0.7M138.9 205.3l6 0.8M145.2 205.3l5.9 0.8M151.4 205.2l5.9 0.8M157.7 205.2l5.9 0.8M163.9 205.2l5.9 0.9M170.2 205.1l5.9 0.9M176.4 205.1l5.9 0.9M182.7 205l5.9 0.9M188.9 205l5.9 0.9M195.2 205l5.9 0.9M201.4 204.9l5.9 0.9M207.7 204.9l5.9 0.9M213.9 204.9l5.9 0.9M220.2 204.9l5.9 1M226.4 204.8l5.9 1M232.7 204.8l5.9 1M238.9 204.8l5.9 1M245.2 204.7l5.9 1M251.4 204.7l5.9 1M257.7 204.7l5.9 1M263.9 204.6l5.9 1M270.2 204.6l5.9 1M276.4 204.6l5.9 1.1M282.7 204.5l5.9 1.1M289 204.5l5.9 1.1M295.2 204.4l5.9 1.1M302.6 204.6l3.5 0.7M308.9 204.6l3.5 0.7M315.1 204.6l3.5 0.7M322.1 204.7l2.2 0.4M1.4 212.5l6 0.2M7.7 212.5l6 0.2M13.9 212.4l6 0.3M20.2 212.4l6 0.3M26.4 212.3l6 0.3M32.7 212.3l6 0.4M38.9 212.2l6 0.4M45.2 212.2l6 0.4M51.4 212.2l6 0.4M57.7 212.1l6 0.4M63.9 212.1l6 0.4M70.2 212.1l6 0.4M76.4 212l6 0.5M82.7 212l6 0.5M88.9 212l6 0.5M95.2 211.9l6 0.5M101.4 211.9l6 0.6M107.7 211.8l6 0.6M113.9 211.8l6 0.6M120.2 211.7l6 0.7M126.4 211.7l6 0.7M132.7 211.6l6 0.7M138.9 211.6l6 0.8M145.2 211.6l5.9 0.8M151.4 211.5l5.9 0.8M157.7 211.5l5.9 0.9M163.9 211.4l5.9 0.9M170.2 211.4l5.9 0.9M176.4 211.4l5.9 0.9M182.7 211.3l5.9 0.9M188.9 211.3l5.9 0.9M195.2 211.3l5.9 0.9M201.4 211.2l5.9 0.9M207.7 211.2l5.9 0.9M213.9 211.2l5.9 0.9M220.2 211.1l5.9 1M226.4 211.1l5.9 1M232.7 211.1l5.9 1M238.9 211l5.9 1M245.2 211l5.9 1M251.4 211l5.9 1M257.7 210.9l5.9 1M263.9 210.9l5.9 1M270.2 210.9l5.9 1M276.4 210.8l5.9 1.1M282.7 210.8l5.9 1.1M289 210.8l5.9 1.1M295.2 210.7l5.9 1.1M301.5 210.7l5.9 1.1M308.9 210.9l3.5 0.7M315.1 210.8l3.5 0.7M321.4 210.8l3.5 0.7M328.3 210.9l2.2 0.5M1.4 218.8l6 0.2M7.7 218.7l6 0.2M13.9 218.7l6 0.3M20.2 218.6l6 0.3M26.4 218.6l6 0.3M32.7 218.6l6 0.4M38.9 218.5l6 0.4M45.2 218.5l6 0.4M51.4 218.4l6 0.4M57.7 218.4l6 0.4M63.9 218.4l6 0.4M70.2 218.3l6 0.4M76.4 218.3l6 0.5M82.7 218.3l6 0.5M88.9 218.2l6 0.5M95.2 218.2l6 0.5M101.4 218.2l6 0.6M107.7 218.1l6 0.6M113.9 218.1l6 0.6M120.2 218l6 0.7M126.4 218l6 0.7M132.7 217.9l6 0.7M138.9 217.9l5.9 0.8M145.2 217.8l5.9 0.8M151.4 217.8l5.9 0.8M157.7 217.8l5.9 0.9M163.9 217.7l5.9 0.9M170.2 217.7l5.9 0.9M176.4 217.6l5.9 0.9M182.7 217.6l5.9 0.9M188.9 217.6l5.9 0.9M195.2 217.5l5.9 0.9M201.4 217.5l5.9 0.9M207.7 217.5l5.9 0.9M213.9 217.4l5.9 0.9M220.2 217.4l5.9 1M226.4 217.4l5.9 1M232.7 217.4l5.9 1M238.9 217.3l5.9 1M245.2 217.3l5.9 1M251.4 217.3l5.9 1M257.7 217.2l5.9 1M263.9 217.2l5.9 1M270.2 217.1l5.9 1M276.4 217.1l5.9 1.1M282.7 217.1l5.9 1.1M289 217l5.9 1.1M295.2 217l5.9 1.1M301.5 217l5.9 1.1M307.7 216.9l5.9 1.2M314 216.9l5.9 1.2M320.2 216.8l5.9 1.2M327.6 217l3.5 0.8M333.9 217l3.5 0.8M340.1 217l3.5 0.8M347.1 217.1l2.1 0.5M3.3 225.1l2.2 0.1M9.6 225.1l2.2 0.1M15.8 225.1l2.2 0.1M22.1 225l2.2 0.1M28.3 225l2.2 0.1M34.6 225l2.2 0.1M40.8 224.9l2.2 0.1M47.1 224.9l2.2 0.2M53.3 224.9l2.2 0.2M59.6 224.8l2.2 0.2M65.8 224.8l2.2 0.2M72.1 224.8l2.2 0.2M78.3 224.7l2.2 0.2M82.7 224.6l6 0.5M88.9 224.5l6 0.5M95.2 224.5l6 0.5M101.4 224.4l6 0.6M107.7 224.4l6 0.6M113.9 224.3l6 0.6M120.2 224.3l6 0.7M126.4 224.2l6 0.7M132.7 224.2l6 0.7M138.9 224.2l5.9 0.8M145.2 224.1l5.9 0.8M151.4 224.1l5.9 0.8M157.7 224l5.9 0.9M163.9 224l5.9 0.9M170.2 224l5.9 0.9M176.4 223.9l5.9 0.9M182.7 223.9l5.9 0.9M188.9 223.9l5.9 0.9M195.2 223.8l5.9 0.9M201.4 223.8l5.9 0.9M207.7 223.8l5.9 0.9M213.9 223.7l5.9 0.9M220.2 223.7l5.9 1M226.4 223.7l5.9 1M232.7 223.6l5.9 1M238.9 223.6l5.9 1M245.2 223.6l5.9 1M251.4 223.5l5.9 1M257.7 223.5l5.9 1M263.9 223.5l5.9 1M270.2 223.4l5.9 1.1M276.4 223.4l5.9 1.1M282.7 223.4l5.9 1.1M289 223.3l5.9 1.1M295.2 223.3l5.9 1.1M301.5 223.2l5.9 1.2M307.7 223.2l5.9 1.2M314 223.1l5.9 1.2M320.2 223.1l5.9 1.2M326.5 223.1l5.9 1.3M333.9 223.3l3.5 0.8M340.1 223.2l3.5 0.8M346.4 223.2l3.5 0.8M353.3 223.3l2.1 0.5M84.6 231l2.2 0.2M90.1 230.9l3.6 0.3M96.4 230.9l3.6 0.3M102.6 230.8l3.6 0.3M107.7 230.7l6 0.6M113.9 230.6l6 0.6M120.2 230.6l6 0.7M126.4 230.5l6 0.7M132.7 230.5l6 0.8M138.9 230.4l5.9 0.8M145.2 230.4l5.9 0.8M151.4 230.3l5.9 0.8M157.7 230.3l5.9 0.9M163.9 230.3l5.9 0.9M170.2 230.2l5.9 0.9M176.4 230.2l5.9 0.9M182.7 230.2l5.9 0.9M188.9 230.1l5.9 0.9M195.2 230.1l5.9 0.9M201.4 230.1l5.9 0.9M207.7 230l5.9 0.9M213.9 230l5.9 1M220.2 230l5.9 1M226.4 229.9l5.9 1M232.7 229.9l5.9 1M238.9 229.9l5.9 1M245.2 229.8l5.9 1M251.4 229.8l5.9 1M257.7 229.8l5.9 1M263.9 229.7l5.9 1M270.2 229.7l5.9 1.1M276.4 229.7l5.9 1.1M282.7 229.6l5.9 1.1M289 229.6l5.9 1.1M295.2 229.6l5.9 1.1M301.5 229.5l5.9 1.2M307.7 229.5l5.9 1.2M314 229.4l5.9 1.2M320.2 229.4l5.9 1.2M326.5 229.3l5.9 1.3M332.7 229.3l5.9 1.3M339 229.3l5.8 1.3M346.4 229.5l3.5 0.8M352.6 229.5l3.5 0.8M358.9 229.4l3.5 0.8M365.8 229.6l2.1 0.5M97.1 237.2l2.2 0.2M102.6 237.1l3.6 0.3M108.9 237.1l3.6 0.4M115.1 237l3.6 0.4M120.2 236.8l6 0.7M126.4 236.8l6 0.7M132.7 236.8l6 0.8M138.9 236.7l5.9 0.8M145.2 236.7l5.9 0.8M151.4 236.6l5.9 0.8M157.7 236.6l5.9 0.9M163.9 236.5l5.9 0.9M170.2 236.5l5.9 0.9M176.4 236.5l5.9 0.9M182.7 236.4l5.9 0.9M188.9 236.4l5.9 0.9M195.2 236.4l5.9 0.9M201.4 236.3l5.9 0.9M207.7 236.3l5.9 0.9M213.9 236.3l5.9 1M220.2 236.3l5.9 1M226.4 236.2l5.9 1M232.7 236.2l5.9 1M238.9 236.2l5.9 1M245.2 236.1l5.9 1M251.4 236.1l5.9 1M257.7 236.1l5.9 1M263.9 236l5.9 1M270.2 236l5.9 1.1M276.4 235.9l5.9 1.1M282.7 235.9l5.9 1.1M289 235.9l5.9 1.1M295.2 235.8l5.9 1.1M301.5 235.8l5.9 1.2M307.7 235.7l5.9 1.2M314 235.7l5.9 1.2M320.2 235.7l5.9 1.3M326.5 235.6l5.9 1.3M332.7 235.6l5.9 1.3M339 235.5l5.8 1.3M345.2 235.5l5.8 1.4M351.5 235.5l5.8 1.4M358.9 235.7l3.5 0.8M365.2 235.7l3.5 0.8M371.4 235.6l3.5 0.9M378.3 235.8l2.1 0.5M122.1 243.3l2.2 0.3M127.6 243.2l3.6 0.4M133.9 243.2l3.6 0.5M140.1 243.1l3.6 0.5M145.2 242.9l5.9 0.8M151.4 242.9l5.9 0.8M157.7 242.9l5.9 0.9M163.9 242.8l5.9 0.9M170.2 242.8l5.9 0.9M176.4 242.8l5.9 0.9M182.7 242.7l5.9 0.9M188.9 242.7l5.9 0.9M195.2 242.7l5.9 0.9M201.4 242.6l5.9 0.9M207.7 242.6l5.9 0.9M213.9 242.6l5.9 1M220.2 242.5l5.9 1M226.4 242.5l5.9 1M232.7 242.5l5.9 1M238.9 242.4l5.9 1M245.2 242.4l5.9 1M251.4 242.4l5.9 1M257.7 242.3l5.9 1M263.9 242.3l5.9 1M270.2 242.3l5.9 1.1M276.4 242.2l5.9 1.1M282.7 242.2l5.9 1.1M289 242.1l5.9 1.1M295.2 242.1l5.9 1.1M301.5 242.1l5.9 1.2M307.7 242l5.9 1.2M314 242l5.9 1.2M320.2 241.9l5.9 1.3M326.5 241.9l5.9 1.3M332.7 241.8l5.9 1.3M339 241.8l5.8 1.3M345.2 241.8l5.8 1.4M351.5 241.7l5.8 1.4M357.7 241.7l5.8 1.4M364 241.7l5.8 1.4M370.2 241.6l5.8 1.4M376.5 241.6l5.8 1.4M383.9 241.9l3.5 0.9M390.2 241.8l3.5 0.9M396.4 241.8l3.5 0.9M403.3 241.9l2.1 0.5M147.1 249.5l2.2 0.3M152.6 249.4l3.6 0.5M158.9 249.3l3.6 0.5M165.1 249.3l3.6 0.5M170.2 249.1l5.9 0.9M176.4 249l5.9 0.9M182.7 249l5.9 0.9M188.9 249l5.9 0.9M195.2 248.9l5.9 0.9M201.4 248.9l5.9 0.9M207.7 248.9l5.9 0.9M213.9 248.8l5.9 1M220.2 248.8l5.9 1M226.4 248.8l5.9 1M232.7 248.8l5.9 1M238.9 248.7l5.9 1M245.2 248.7l5.9 1M251.4 248.6l5.9 1M257.7 248.6l5.9 1M263.9 248.6l5.9 1M270.2 248.5l5.9 1.1M276.4 248.5l5.9 1.1M282.7 248.5l5.9 1.1M289 248.4l5.9 1.1M295.2 248.4l5.9 1.1M301.5 248.3l5.9 1.2M307.7 248.3l5.9 1.2M314 248.3l5.9 1.2M320.2 248.2l5.9 1.3M326.5 248.2l5.9 1.3M332.7 248.1l5.9 1.3M339 248.1l5.8 1.4M345.2 248l5.8 1.4M351.5 248l5.8 1.4M357.7 248l5.8 1.4M364 247.9l5.8 1.4M370.2 247.9l5.8 1.4M376.5 247.9l5.8 1.4M382.7 247.9l5.8 1.4M389 247.8l5.8 1.4M395.2 247.8l5.8 1.5M401.5 247.7l5.8 1.5M407.7 247.7l5.8 1.5M415.2 248l3.5 0.9M421.4 247.9l3.5 1M427.7 247.9l3.5 1M434.6 248l2.1 0.7M165.8 255.7l2.2 0.3M171.4 255.5l3.6 0.5M177.6 255.5l3.6 0.6M183.9 255.5l3.6 0.6M188.9 255.2l5.9 0.9M195.2 255.2l5.9 0.9M201.4 255.2l5.9 0.9M207.7 255.2l5.9 0.9M213.9 255.1l5.9 1M220.2 255.1l5.9 1M226.4 255.1l5.9 1M232.7 255l5.9 1M238.9 255l5.9 1M245.2 255l5.9 1M251.4 254.9l5.9 1M257.7 254.9l5.9 1M263.9 254.9l5.9 1M270.2 254.8l5.9 1.1M276.4 254.8l5.9 1.1M282.7 254.7l5.9 1.1M289 254.7l5.9 1.1M295.2 254.7l5.9 1.2M301.5 254.6l5.9 1.2M307.7 254.6l5.9 1.2M314 254.5l5.9 1.2M320.2 254.5l5.9 1.3M326.5 254.4l5.9 1.3M332.7 254.4l5.9 1.3M339 254.4l5.8 1.4M345.2 254.3l5.8 1.4M351.5 254.3l5.8 1.4M357.7 254.3l5.8 1.4M364 254.2l5.8 1.4M370.2 254.2l5.8 1.4M376.5 254.2l5.8 1.4M382.7 254.1l5.8 1.4M389 254.1l5.8 1.4M395.2 254.1l5.8 1.5M401.5 254l5.8 1.5M407.8 254l5.8 1.5M414 253.9l5.8 1.6M420.3 253.9l5.8 1.7M426.5 253.8l5.7 1.7M432.8 253.7l5.7 1.8M439.1 253.6l5.7 1.9M446.5 254l3.4 1.2M452.7 253.9l3.4 1.2M459 253.9l3.4 1.3M465.9 254.1l2 0.8M203.3 261.8l2.2 0.3M208.9 261.6l3.6 0.6M215.1 261.6l3.6 0.6M221.4 261.6l3.6 0.6M226.4 261.3l5.9 1M232.7 261.3l5.9 1M238.9 261.3l5.9 1M245.2 261.2l5.9 1M251.4 261.2l5.9 1M257.7 261.2l5.9 1M263.9 261.1l5.9 1.1M270.2 261.1l5.9 1.1M276.4 261.1l5.9 1.1M282.7 261l5.9 1.1M289 261l5.9 1.1M295.2 260.9l5.9 1.2M301.5 260.9l5.9 1.2M307.7 260.9l5.9 1.2M314 260.8l5.9 1.2M320.2 260.8l5.9 1.3M326.5 260.7l5.9 1.3M332.7 260.7l5.8 1.3M339 260.6l5.8 1.4M345.2 260.6l5.8 1.4M351.5 260.6l5.8 1.4M357.7 260.5l5.8 1.4M364 260.5l5.8 1.4M370.2 260.5l5.8 1.4M376.5 260.4l5.8 1.4M382.7 260.4l5.8 1.4M389 260.4l5.8 1.5M395.2 260.3l5.8 1.5M401.5 260.3l5.8 1.5M407.8 260.2l5.8 1.6M414 260.2l5.8 1.6M420.2 260.3l5.8 1.3M426.5 260.4l5.9 1.1M432.7 260.4l5.9 0.9M438.9 260.5l6 0.7M445.2 260.6l6 0.6M451.4 260.6l6 0.4M457.7 260.7l6 0.2M465.1 260.7l3.6 0M471.4 260.8l3.6 -0M477.6 260.8l3.6 -0.1M484.6 260.7l2.2 -0.1M222.1 268l2.2 0.4M227.6 267.8l3.6 0.6M233.9 267.8l3.6 0.6M240.1 267.8l3.6 0.6M245.2 267.5l5.9 1M251.4 267.5l5.9 1M257.7 267.4l5.9 1M263.9 267.4l5.9 1.1M270.2 267.4l5.9 1.1M276.5 267.3l5.9 1.1M282.7 267.3l5.9 1.1M289 267.3l5.9 1.1M295.2 267.2l5.9 1.2M301.5 267.2l5.9 1.2M307.7 267.1l5.9 1.2M314 267.1l5.9 1.3M320.2 267l5.9 1.3M326.5 267l5.9 1.3M332.7 267l5.8 1.3M339 266.9l5.8 1.4M345.2 266.9l5.8 1.4M351.5 266.8l5.8 1.4M357.7 266.8l5.8 1.4M364 266.8l5.8 1.4M370.2 266.8l5.8 1.4M376.5 266.7l5.8 1.4M382.7 266.7l5.8 1.4M389 266.6l5.8 1.5M395.2 266.6l5.8 1.5M401.5 266.6l5.8 1.5M407.8 266.5l5.8 1.6M414 266.5l5.8 1.6M420.2 266.6l5.8 1.4M426.5 266.6l5.9 1.2M432.7 266.7l5.9 0.9M438.9 266.8l6 0.8M445.2 266.8l6 0.6M451.4 266.9l6 0.4M457.7 267l6 0.2M463.9 267l6 0M471.4 267l3.6 -0.1M477.6 267l3.6 -0.1M483.9 267l3.6 -0.2M490.8 267l2.2 -0.1M247.1 274.1l2.2 0.4M252.6 274l3.5 0.6M258.9 273.9l3.5 0.6M265.1 273.9l3.5 0.6M270.2 273.7l5.9 1.1M276.5 273.6l5.9 1.1M282.7 273.6l5.9 1.1M289 273.5l5.9 1.1M295.2 273.5l5.9 1.2M301.5 273.5l5.9 1.2M307.7 273.4l5.9 1.2M314 273.4l5.9 1.3M320.2 273.3l5.9 1.3M326.5 273.3l5.9 1.3M332.7 273.2l5.8 1.3M339 273.2l5.8 1.4M345.2 273.2l5.8 1.4M351.5 273.1l5.8 1.4M357.7 273.1l5.8 1.4M364 273.1l5.8 1.4M370.2 273l5.8 1.4M376.5 273l5.8 1.4M382.7 273l5.8 1.4M389 272.9l5.8 1.5M395.2 272.9l5.8 1.5M401.5 272.8l5.8 1.5M407.8 272.8l5.8 1.6M414 272.7l5.8 1.6M420.2 272.8l5.8 1.4M426.5 272.9l5.9 1.2M432.7 273l5.9 1M438.9 273.1l6 0.8M445.2 273.1l6 0.6M451.4 273.2l6 0.4M457.7 273.3l6 0.2M463.9 273.3l6 0M470.2 273.3l6 -0.1M476.4 273.4l6 -0.2M483.9 273.3l3.6 -0.2M490.1 273.3l3.6 -0.2M496.4 273.3l3.6 -0.2M503.3 273.2l2.2 -0.1M259.6 280.3l2.2 0.4M265.1 280.2l3.5 0.6M271.4 280.1l3.5 0.6M277.6 280.1l3.5 0.7M282.7 279.9l5.9 1.1M289 279.8l5.9 1.1M295.2 279.8l5.9 1.2M301.5 279.7l5.9 1.2M307.7 279.7l5.9 1.2M314 279.6l5.9 1.3M320.2 279.6l5.9 1.3M326.5 279.6l5.9 1.3M332.7 279.5l5.8 1.4M339 279.5l5.8 1.4M345.2 279.4l5.8 1.4M351.5 279.4l5.8 1.4M357.7 279.4l5.8 1.4M364 279.3l5.8 1.4M370.2 279.3l5.8 1.4M376.5 279.3l5.8 1.4M382.7 279.2l5.8 1.5M389 279.2l5.8 1.5M395.2 279.2l5.8 1.5M401.5 279.1l5.8 1.6M407.8 279.1l5.8 1.6M414 279l5.8 1.6M420.2 279.1l5.8 1.4M426.5 279.2l5.9 1.2M432.7 279.3l5.9 1M438.9 279.3l6 0.8M445.2 279.4l6 0.6M451.4 279.5l6 0.4M457.7 279.5l6 0.2M463.9 279.6l6 0M470.2 279.6l6 -0.1M476.4 279.7l6 -0.3M482.7 279.7l6 -0.4M488.9 279.7l6 -0.4M495.2 279.7l6 -0.4M502.6 279.5l3.6 -0.1M508.9 279.4l3.6 -0M515.1 279.3l3.6 0.1M522.1 279.3l2.2 0.1M284.6 286.5l2.2 0.4M290.1 286.3l3.5 0.7M296.4 286.3l3.5 0.7M302.6 286.2l3.5 0.7M307.7 286l5.9 1.2M314 285.9l5.9 1.3M320.2 285.9l5.9 1.3M326.5 285.8l5.9 1.3M332.7 285.8l5.8 1.4M339 285.8l5.8 1.4M345.2 285.7l5.8 1.4M351.5 285.7l5.8 1.4M357.7 285.7l5.8 1.4M364 285.6l5.8 1.4M370.2 285.6l5.8 1.4M376.5 285.6l5.8 1.4M382.7 285.5l5.8 1.5M389 285.5l5.8 1.5M395.2 285.4l5.8 1.5M401.5 285.4l5.8 1.6M407.8 285.3l5.8 1.6M414 285.3l5.8 1.6M420.2 285.4l5.8 1.4M426.5 285.5l5.9 1.2M432.7 285.5l5.9 1M438.9 285.6l6 0.8M445.2 285.7l6 0.5M451.4 285.8l6 0.3M457.7 285.8l6 0.2M463.9 285.9l6 -0M470.2 285.9l6 -0.2M476.4 286l6 -0.3M482.7 286l6 -0.4M488.9 286l6 -0.4M495.2 285.9l6 -0.4M501.4 285.8l6 -0.2M507.7 285.7l6 -0M513.9 285.6l6 0.2M521.4 285.5l3.6 0.2M527.6 285.4l3.6 0.3M533.9 285.3l3.6 0.5M540.8 285.4l2.2 0.3M297.1 292.7l2.2 0.4M302.6 292.5l3.5 0.7M308.9 292.5l3.5 0.7M315.1 292.5l3.5 0.8M320.2 292.2l5.9 1.3M326.5 292.1l5.8 1.3M332.7 292.1l5.8 1.4M339 292l5.8 1.4M345.2 292l5.8 1.4M351.5 292l5.8 1.4M357.7 291.9l5.8 1.4M364 291.9l5.8 1.4M370.2 291.9l5.8 1.4M376.5 291.8l5.8 1.4M382.7 291.8l5.8 1.5M389 291.7l5.8 1.5M395.2 291.7l5.8 1.5M401.5 291.7l5.8 1.6M407.8 291.6l5.8 1.6M414 291.6l5.8 1.7M420.2 291.6l5.8 1.4M426.5 291.7l5.9 1.2M432.7 291.8l5.9 1M438.9 291.9l6 0.8M445.2 292l6 0.5M451.4 292l6 0.3M457.7 292.1l6 0.1M463.9 292.2l6 -0M470.2 292.2l6 -0.2M476.4 292.3l6 -0.3M482.7 292.3l6 -0.4M488.9 292.3l6 -0.5M495.2 292.2l6 -0.4M501.4 292.1l6 -0.2M507.7 292l6 -0M513.9 291.8l6 0.2M520.2 291.7l6 0.4M527.6 291.7l3.6 0.4M533.9 291.6l3.6 0.5M540.1 291.5l3.6 0.6M547.1 291.6l2.2 0.4M322.1 298.8l2.1 0.5M327.6 298.7l3.5 0.8M333.9 298.6l3.5 0.8M340.1 298.6l3.5 0.8M345.2 298.3l5.8 1.4M351.5 298.2l5.8 1.4M357.7 298.2l5.8 1.4M364 298.2l5.8 1.4M370.2 298.1l5.8 1.4M376.5 298.1l5.8 1.5M382.7 298.1l5.8 1.5M389 298l5.8 1.5M395.3 298l5.8 1.5M401.5 297.9l5.8 1.6M407.8 297.9l5.8 1.7M414 297.8l5.8 1.7M420.2 297.9l5.8 1.5M426.5 298l5.9 1.2M432.7 298.1l5.9 1M438.9 298.2l6 0.8M445.2 298.3l6 0.5M451.4 298.3l6 0.3M457.7 298.4l6 0.1M463.9 298.5l6 -0.1M470.2 298.5l6 -0.2M476.4 298.5l6 -0.3M482.7 298.6l6 -0.4M488.9 298.6l6 -0.5M495.2 298.5l6 -0.4M501.4 298.4l6 -0.2M507.6 298.2l6.2 -0M513.8 298.1l6.2 0.2M520.1 298l6.1 0.4M526.4 297.9l6 0.6M532.7 297.7l5.9 0.8M538.9 297.6l5.9 1M546.4 297.7l3.5 0.7M552.6 297.6l3.5 0.8M558.9 297.5l3.5 0.9M565.8 297.7l2.1 0.6M347.1 305l2.1 0.5M352.7 304.8l3.5 0.8M358.9 304.8l3.5 0.9M365.2 304.7l3.5 0.9M370.2 304.4l5.8 1.4M376.5 304.4l5.8 1.5M382.7 304.3l5.8 1.5M389 304.3l5.8 1.5M395.3 304.2l5.8 1.6M401.5 304.2l5.8 1.6M407.8 304.1l5.8 1.7M414 304.1l5.8 1.7M420.2 304.2l5.8 1.5M426.5 304.3l5.9 1.2M432.7 304.4l5.9 1M438.9 304.5l6 0.8M445.2 304.5l6 0.5M451.4 304.6l6 0.3M457.7 304.7l6 0.1M463.9 304.8l6 -0.1M470.2 304.8l6 -0.2M476.4 304.8l6 -0.4M482.7 304.9l6 -0.4M488.9 304.9l6 -0.5M495.2 304.8l6 -0.4M501.4 304.7l6 -0.2M507 304.5l7.2 -0M513.3 304.4l7.2 0.2M519.6 304.2l7.1 0.5M525.9 304.1l7 0.7M532.2 303.9l6.8 1M538.6 303.8l6.6 1.2M544.9 303.7l6.4 1.4M551.3 303.6l6.1 1.5M558.9 303.8l3.5 1M565.2 303.7l3.4 1.1M571.5 303.6l3.4 1.2M578.4 303.8l2.1 0.8M359.6 311.2l2.1 0.5M365.2 311l3.5 0.9M371.4 311l3.5 0.9M377.7 311l3.5 0.9M382.7 310.6l5.8 1.5M389 310.6l5.8 1.5M395.3 310.5l5.8 1.6M401.5 310.5l5.8 1.6M407.8 310.4l5.8 1.7M414 310.4l5.7 1.7M420.2 310.5l5.8 1.5M426.5 310.5l5.9 1.2M432.7 310.6l5.9 1M438.9 310.7l6 0.7M445.2 310.8l6 0.5M451.4 310.9l6 0.3M457.7 311l6 0.1M463.9 311.1l6 -0.1M470.2 311.1l6 -0.3M476.4 311.1l6 -0.4M482.7 311.1l6 -0.5M488.9 311.1l6 -0.5M495.2 311.1l6 -0.5M501.4 310.9l6 -0.2M506.5 310.8l8.2 -0M512.8 310.6l8.2 0.3M519.1 310.5l8.1 0.6M525.4 310.3l8 0.9M531.7 310.1l7.8 1.1M538.1 310l7.6 1.4M544.5 309.8l7.4 1.6M550.9 309.7l7.1 1.8M557.3 309.6l6.7 2M565.2 310l3.4 1.1M571.5 309.9l3.4 1.2M577.7 309.8l3.3 1.3M584.6 310l2 0.9M378.3 317.4l2.1 0.5M383.9 317.2l3.5 0.9M390.2 317.2l3.5 0.9M396.4 317.1l3.5 1M401.5 316.7l5.8 1.7M407.8 316.7l5.7 1.7M414 316.6l5.7 1.8M420.2 316.7l5.8 1.5M426.5 316.8l5.9 1.3M432.7 316.9l5.9 1M438.9 317l6 0.7M445.2 317.1l6 0.5M451.4 317.2l6 0.3M457.7 317.3l6 0M463.9 317.4l6 -0.1M470.2 317.4l6 -0.3M476.4 317.4l6 -0.4M482.7 317.4l6 -0.5M488.9 317.4l6 -0.5M495.2 317.4l6 -0.5M501.4 317.2l6 -0.2M506 317.1l9.2 -0M512.3 316.9l9.2 0.3M518.6 316.7l9.1 0.7M524.9 316.5l9 1M531.3 316.3l8.8 1.3M537.6 316.1l8.6 1.6M544 316l8.3 1.9M550.4 315.8l8 2.1M556.8 315.7l7.6 2.3M563.3 315.6l7.3 2.5M569.7 315.5l6.9 2.6M576.2 315.4l6.4 2.7M584 316l3.3 1.5M590.3 315.9l3.2 1.6M596.6 315.8l3.2 1.7M603.4 316.1l1.9 1.1M396.4 323.4l3.5 1M402.7 323.3l3.5 1M408.9 323.3l3.4 1M414 322.9l5.7 1.8M420.2 323l5.8 1.5M426.5 323.1l5.9 1.3M432.7 323.2l5.9 1M438.9 323.3l6 0.7M445.2 323.4l6 0.5M451.4 323.5l6 0.2M457.7 323.6l6 0M463.9 323.6l6 -0.2M470.2 323.7l6 -0.3M476.4 323.7l6 -0.4M482.7 323.7l6 -0.5M488.9 323.7l6 -0.6M495.2 323.7l5.9 -0.5M501.5 323.5l5.9 -0.2M505.8 323.4l9.8 -0M512 323.1l9.8 0.4M518.2 322.9l9.8 0.8M524.5 322.7l9.9 1.2M530.8 322.5l9.8 1.5M537.1 322.3l9.5 1.9M543.5 322.1l9.2 2.2M549.9 321.9l8.9 2.5M556.4 321.8l8.5 2.7M562.8 321.7l8.1 2.9M569.3 321.6l7.7 3M575.8 321.5l7.2 3.2M584 322.3l3.3 1.5M590.3 322.2l3.2 1.6M596.6 322.1l3.1 1.7M603.5 322.4l1.9 1.1M422.1 329.8l2.1 0.6M427.6 329.6l3.5 0.8M433.9 329.7l3.5 0.6M440.1 329.7l3.6 0.4M445.2 329.7l6 0.5M451.4 329.8l6 0.2M457.7 329.9l6 -0M464 329.9l5.9 -0.2M470.3 330l5.8 -0.4M476.6 330l5.6 -0.5M482.9 330l5.5 -0.5M489.2 330l5.5 -0.5M495.4 329.9l5.4 -0.5M501.7 329.8l5.4 -0.2M506.3 329.7l8.8 -0M512.5 329.4l8.8 0.3M518.7 329.2l8.8 0.7M524.9 329l8.9 1.1M531.2 328.8l9 1.5M537.3 328.6l9.1 1.9M543.5 328.3l9.2 2.3M549.7 328.1l9.4 2.7M555.9 327.9l9.4 3.1M562.4 327.7l9 3.3M568.9 327.6l8.5 3.5M575.4 327.5l8 3.6M581.9 327.4l7.5 3.7M588.4 327.4l7 3.7M596.6 328.3l3.1 1.8M602.9 328.3l3.1 1.9M609.1 328.2l3 2M616 328.5l1.8 1.3M428.3 336.1l2.1 0.5M433.9 336l3.5 0.6M440.1 336l3.6 0.4M446.4 336.1l3.6 0.3M451.5 336.1l5.7 0.2M457.9 336.2l5.6 -0.1M464.2 336.2l5.4 -0.2M470.5 336.3l5.3 -0.4M476.8 336.3l5.2 -0.4M483.1 336.3l5.1 -0.5M489.4 336.3l5 -0.5M495.7 336.2l5 -0.4M501.9 336.1l4.9 -0.2M506.8 335.9l7.8 -0M513 335.7l7.8 0.3M519.2 335.5l7.8 0.7M525.4 335.3l7.9 1M531.6 335.1l8 1.4M537.8 334.9l8.1 1.7M544 334.7l8.3 2.1M550.2 334.5l8.5 2.5M556.3 334.2l8.6 3M562.5 334l8.8 3.4M568.6 333.7l9.1 3.9M575 333.5l8.8 4.2M581.5 333.5l8.2 4.3M588.1 333.4l7.7 4.3M596.6 334.6l3.1 1.9M602.9 334.5l3 2M609.2 334.5l3 2M616 334.8l1.8 1.3M453.3 342.4l2.2 0.1M458.9 342.5l3.6 -0.1M465.1 342.5l3.6 -0.2M471.4 342.5l3.6 -0.3M477 342.6l4.7 -0.4M483.3 342.6l4.6 -0.5M489.6 342.5l4.5 -0.5M495.9 342.5l4.5 -0.4M502.2 342.3l4.5 -0.2M507.3 342.2l6.8 -0M513.5 342l6.8 0.3M519.7 341.8l6.8 0.6M525.9 341.7l6.9 0.9M532.1 341.5l7 1.3M538.3 341.3l7.2 1.6M544.5 341l7.3 2M550.6 340.8l7.5 2.4M556.8 340.6l7.7 2.8M562.9 340.3l7.9 3.2M569.1 340.1l8.2 3.7M575.2 339.8l8.4 4.2M581.3 339.5l8.7 4.7M587.7 339.4l8.3 4.9M594.3 339.4l7.7 4.9M600.8 339.4l7.1 4.8M609.2 340.7l2.9 2.1M615.5 340.6l2.9 2.2M621.8 340.6l2.8 2.3M628.6 341l1.7 1.4M465.8 348.7l2.2 -0.1M471.4 348.8l3.6 -0.3M477.6 348.8l3.6 -0.4M483.6 348.8l4.1 -0.5M489.9 348.8l4.1 -0.5M496.1 348.7l4 -0.4M502.4 348.6l4 -0.2M508.7 348.5l4 -0M514.9 348.4l4 0.2M521.1 348.2l4 0.4M527.4 348.1l4.1 0.6M532.6 347.8l6 1.1M538.8 347.6l6.2 1.5M545 347.4l6.4 1.8M551.1 347.2l6.6 2.2M557.3 347l6.8 2.6M563.4 346.7l7 3M569.5 346.5l7.3 3.4M575.6 346.2l7.5 3.9M581.8 345.9l7.8 4.4M587.9 345.6l8.1 5M594 345.3l8.3 5.5M600.6 345.3l7.7 5.4M607.1 345.4l7 5.3M613.7 345.4l6.4 5.1M621.8 346.8l2.7 2.3M628.1 346.7l2.7 2.4M634.3 346.7l2.6 2.5M641.1 347.1l1.6 1.5M484.6 355l2.2 -0.3M490.1 355.1l3.6 -0.4M496.4 355l3.5 -0.4M502.6 354.9l3.5 -0.2M508.9 354.8l3.5 -0M515.1 354.7l3.5 0.2M521.4 354.5l3.6 0.3M527.6 354.4l3.6 0.5M533.8 354.3l3.6 0.7M540 354.2l3.7 0.9M546.3 354l3.8 1.1M552.5 353.9l3.9 1.3M557.7 353.4l5.9 2.3M563.8 353.1l6.1 2.7M570 352.9l6.4 3.2M576.1 352.6l6.7 3.6M582.2 352.4l7 4.1M588.3 352.1l7.3 4.7M594.4 351.8l7.5 5.2M600.5 351.4l7.8 5.8M606.9 351.3l7.5 6M613.5 351.4l6.9 5.8M620 351.5l6.2 5.5M628.1 353l2.6 2.5M634.4 352.9l2.6 2.5M640.7 352.9l2.5 2.6M647.4 353.3l1.5 1.6M502.7 361.2l3.5 -0.2M508.9 361l3.5 -0M515.2 360.9l3.5 0.2M521.4 360.8l3.5 0.4M527.7 360.7l3.5 0.5M533.9 360.6l3.4 0.7M540.2 360.5l3.4 0.9M546.5 360.4l3.3 1M552.7 360.2l3.4 1.2M558.9 360.1l3.5 1.5M565.1 359.9l3.6 1.7M570.4 359.3l5.5 2.9M576.5 359.1l5.8 3.3M582.6 358.8l6.1 3.8M588.7 358.5l6.4 4.4M594.8 358.2l6.8 4.9M600.9 357.9l7.1 5.5M607 357.5l7.4 6.2M613.3 357.3l7.3 6.5M619.8 357.4l6.6 6.2M626.4 357.6l5.9 5.9M633 357.7l5.3 5.5M640.7 359.1l2.4 2.7M647 359.1l2.4 2.7M653.2 359l2.3 2.8M660 359.5l1.4 1.7M503.3 367.4l2.2 -0.1M508.9 367.3l3.5 -0M515.2 367.2l3.5 0.2M521.4 367.1l3.5 0.4M527.7 367l3.5 0.6M533.9 366.8l3.4 0.7M540.2 366.7l3.4 0.9M546.5 366.6l3.3 1.1M552.8 366.5l3.3 1.3M559 366.4l3.2 1.4M565.3 366.3l3.2 1.6M571.5 366.1l3.3 1.8M577.7 366l3.5 2.1M583 365.2l5.3 3.5M589.1 364.9l5.7 4.1M595.2 364.6l6 4.6M601.2 364.3l6.3 5.2M607.3 364l6.6 5.8M613.4 363.6l6.9 6.5M619.7 363.4l7 6.9M626.3 363.5l6.3 6.6M632.8 363.7l5.6 6.2M640.7 365.4l2.4 2.7M647 365.3l2.3 2.8M653.3 365.3l2.2 2.8M660 365.8l1.3 1.8M522.1 373.4l2.2 0.2M527.7 373.2l3.4 0.6M533.9 373.1l3.4 0.8M540.2 373l3.4 1M546.5 372.9l3.3 1.2M552.8 372.7l3.2 1.3M559.1 372.6l3.2 1.5M565.4 372.5l3.1 1.6M571.6 372.4l3 1.8M577.9 372.3l3.1 2M584.1 372.1l3.2 2.2M589.4 371.4l4.9 3.7M595.5 371.1l5.2 4.3M601.6 370.7l5.6 4.9M607.7 370.4l5.9 5.5M613.8 370l6.2 6.2M619.9 369.7l6.6 6.9M626.1 369.4l6.5 7.2M632.7 369.6l5.9 6.8M639.3 369.8l5.2 6.4M645.9 370l4.6 5.9M652.4 370.3l4 5.3M658.8 372.5l3.8 0.9M665 372.4l3.8 0.9M671.3 372.4l3.8 0.9M677.5 372.4l3.8 0.9M684.6 372.6l2.1 0.5M540.8 379.4l2.1 0.6M546.5 379.1l3.3 1.2M552.8 379l3.2 1.4M559.1 378.9l3.1 1.6M565.4 378.8l3.1 1.7M571.7 378.7l3 1.8M578 378.6l2.9 2M584.2 378.5l2.8 2.1M590.4 378.3l3 2.4M595.9 377.5l4.5 3.9M602 377.2l4.9 4.5M608 376.8l5.2 5.2M614.1 376.5l5.6 5.9M620.2 376.1l5.9 6.6M626.3 375.7l6.2 7.3M632.6 375.6l6.1 7.5M639.2 375.8l5.4 7M645.8 376l4.8 6.5M652.3 376.3l4.2 5.9M658.8 378.7l3.8 0.9M665 378.7l3.8 0.9M671.3 378.7l3.8 0.9M677.5 378.7l3.8 0.9M684.6 378.8l2.1 0.5M553.4 385.5l2 0.9M559.1 385.1l3.1 1.6M565.4 385l3 1.8M571.7 384.9l2.9 1.9M578 384.8l2.8 2.1M584.3 384.7l2.7 2.2M590.6 384.7l2.7 2.3M596.8 384.5l2.8 2.5M602.9 384.3l2.9 2.9M608.4 383.3l4.6 4.8M614.4 382.9l4.9 5.5M620.5 382.5l5.3 6.3M626.6 382.1l5.6 7M632.7 381.7l5.9 7.8M639.1 381.7l5.5 7.7M645.7 382l4.9 7.1M652.3 382.3l4.3 6.5M658.8 385l3.8 0.9M665 385l3.8 0.9M671.3 385l3.8 0.9M677.5 384.9l3.8 0.9M683.8 384.9l3.8 0.9M690.8 385.1l2.1 0.5M559.7 391.7l1.9 1.1M565.4 391.2l3 1.9M571.7 391.2l2.9 2M578 391.1l2.8 2.1M584.3 391l2.7 2.3M590.6 390.9l2.6 2.4M596.9 390.8l2.5 2.5M603.1 390.7l2.6 2.7M609.3 390.5l2.7 3.1M614.7 389.4l4.3 5.2M620.5 388.6l5.2 6.7M626.9 388.5l5.1 6.8M633 388.1l5.3 7.5M639.1 387.7l5.6 8.3M645.7 388l5 7.7M652.2 388.2l4.5 7.2M658.8 391.3l3.8 0.9M665 391.3l3.8 0.9M671.3 391.2l3.8 0.9M677.5 391.2l3.8 0.9M683.8 391.2l3.8 0.9M690 391.2l3.8 0.9M697.2 389.9l1.9 3.4M703.9 390.6l1.1 1.9M571.8 397.4l2.8 2.1M578.1 397.3l2.7 2.2M584.4 397.2l2.6 2.4M590.7 397.1l2.5 2.5M597 397.1l2.4 2.6M603.2 397l2.3 2.6M609.4 396.8l2.4 2.9M615 395.8l3.7 4.8M620.6 394.8l5 6.9M627 394.7l4.8 7M633.3 394.6l4.7 7.2M639.4 394.1l5 8M645.7 393.9l5 8.3M652.2 394.2l4.4 7.7M658.8 397.6l3.8 0.9M665 397.6l3.8 0.9M671.3 397.5l3.8 0.9M677.5 397.5l3.8 0.9M683.8 397.5l3.8 0.9M690 397.4l3.8 0.9M697.2 396.2l1.9 3.4M703.9 396.9l1.1 1.9M591.2 403.8l1.5 1.6M597 403.3l2.3 2.6M603.3 403.2l2.2 2.7M609.6 403.2l2.1 2.8M615.9 403.1l2 2.9M620.8 401l4.7 7.1M627.1 400.9l4.6 7.2M633.4 400.8l4.4 7.3M639.7 400.6l4.5 7.7M645.8 400.1l4.7 8.6M652.2 400.2l4.4 8.3M658.8 403.9l3.8 0.9M664.7 403.8l4.4 1.1M671 403.7l4.4 1.1M677.5 403.8l3.8 0.9M683.8 403.7l3.8 0.9M690 403.7l3.8 0.9M697.2 402.5l1.9 3.4M703.4 402.4l1.9 3.4M710.1 403.1l1.1 1.9M597.5 410l1.4 1.7M603.4 409.5l2.1 2.8M609.7 409.4l2 2.9M615.9 409.3l1.9 2.9M620.9 407.2l4.5 7.2M627.3 407.1l4.3 7.3M633.6 407l4.1 7.4M639.9 406.9l4 7.5M646.1 406.5l4.2 8.3M652.3 406.2l4.3 8.8M658.8 410.1l3.8 0.9M664.7 410l4.4 1.1M671 410l4.4 1.1M683.8 410l3.8 0.9M690 410l3.8 0.9M697.2 408.8l1.9 3.4M703.4 408.7l1.9 3.4M710.1 409.4l1.1 1.9M610.1 416.2l1.2 1.9M616 415.6l1.8 3M621.1 413.4l4.2 7.4M627.4 413.3l4 7.5M633.7 413.2l3.8 7.6M640.1 413.1l3.7 7.7M646.3 412.9l3.7 8.1M652.4 412.4l3.9 9M658.8 412.6l3.6 8.6M666.1 414.8l1.7 4.2M672.3 414.7l1.6 4.2M690.9 415.1l1.9 3.4M697.2 415l1.9 3.4M703.4 415l1.9 3.4M710.1 415.7l1.1 1.9M616.1 421.8l1.7 3.1M621.2 419.5l3.8 7.6M627.6 419.5l3.7 7.7M633.9 419.4l3.5 7.7M640.2 419.4l3.4 7.8M646.5 419.3l3.3 7.9M652.7 418.8l3.5 8.7M658.9 418.6l3.4 9M666.1 421l1.5 4.2M672.4 421l1.5 4.2M697.2 421.3l1.9 3.4M703.4 421.3l1.9 3.4M709.7 421.3l1.9 3.4M716.4 422l1.1 1.9M616.4 428.7l0.9 2M621.4 425.7l3.5 7.8M627.7 425.7l3.3 7.8M634.1 425.6l3.2 7.9M640.4 425.6l3.1 7.9M646.7 425.5l2.9 8M652.9 425.2l3 8.5M659.1 424.7l3.2 9.5M666.2 427.3l1.4 4.3M672.5 427.2l1.3 4.3M697.2 427.6l1.9 3.4M703.4 427.6l1.9 3.4M709.7 427.5l1.9 3.4M716.4 428.2l1.1 1.9M616.5 434.9l0.8 2M621.6 431.9l3.1 7.9M627.9 431.9l3 8M634.2 431.8l2.8 8M640.5 431.8l2.7 8.1M646.8 431.7l2.6 8.1M653.1 431.6l2.6 8.3M659.3 431.1l2.7 9.3M666.3 433.5l1.2 4.3M672.6 433.5l1.2 4.3M703.4 433.8l1.9 3.4M709.7 433.8l1.9 3.4M715.9 433.8l1.9 3.4M722.6 434.5l1.1 1.9M621.8 438.1l2.7 8.1M628.1 438.1l2.6 8.1M634.4 438.1l2.5 8.1M640.7 438l2.4 8.2M647 438l2.3 8.2M653.3 437.9l2.2 8.2M659.5 437.4l2.3 9.1M666.4 439.8l1.1 4.4M672.6 439.8l1 4.4M703.4 440.1l1.9 3.4M709.7 440.1l1.9 3.4M715.9 440.1l1.9 3.4M722.2 440l1.9 3.4M728.9 440.7l1.1 1.9M622.9 447.4l0.6 2.1M628.3 444.3l2.2 8.2M634.6 444.3l2.1 8.2M640.9 444.2l2 8.3M647.2 444.2l1.9 8.3M653.5 444.2l1.8 8.3M659.7 443.8l1.9 9M666.5 446.1l0.9 4.4M672.7 446l0.9 4.4M709.7 446.4l1.9 3.4M715.9 446.3l1.9 3.4M722.2 446.3l1.9 3.4M728.9 447l1.1 1.9M622.9 453.7l0.5 2.1M628.5 450.6l1.8 8.3M634.8 450.5l1.7 8.3M641.1 450.5l1.6 8.3M647.4 450.4l1.5 8.4M653.7 450.4l1.5 8.4M659.9 450.1l1.5 8.9M666.5 452.3l0.7 4.4M672.8 452.3l0.7 4.4M709.7 452.7l1.9 3.4M715.9 452.6l1.9 3.4M722.2 452.6l1.9 3.4M728.9 453.3l1.1 1.9M629.2 459.9l0.3 2.2M635.5 459.9l0.3 2.2M641.7 459.8l0.3 2.2M648 459.8l0.3 2.2M654.3 459.8l0.3 2.2M660.5 459.8l0.3 2.2M666.8 459.7l0.3 2.2M673 459.7l0.3 2.2M716.4 459.6l1.1 1.9M722.6 459.6l1.1 1.9M728.9 459.6l1.1 1.9" stroke="#0e0e0e" stroke-width="1.0" fill="none"/>
<path d="M6.4 156.1L3.3 157.9L3.5 154.1zM12.6 156.1L9.6 157.9L9.7 154.1zM18.9 156.1L15.8 157.9L16 154.1zM25.1 156.1L22.1 157.8L22.2 154zM31.4 156.1L28.3 157.8L28.5 154zM37.6 156.1L34.5 157.8L34.8 154zM43.9 156L40.8 157.7L41 154zM50.1 156L47 157.7L47.3 153.9zM56.4 156L53.3 157.7L53.5 153.9zM62.6 156L59.5 157.7L59.8 153.9zM68.9 155.9L65.8 157.6L66 153.8zM75.1 155.9L72 157.6L72.3 153.8zM81.4 155.9L78.3 157.6L78.5 153.8zM87.6 155.9L84.5 157.5L84.8 153.7zM93.9 155.8L90.8 157.5L91.1 153.7zM100.1 155.8L97 157.5L97.3 153.7zM106.4 155.8L103.2 157.4L103.6 153.7zM7.4 162.5L4.3 164.3L4.5 160.5zM13.6 162.5L10.6 164.2L10.7 160.4zM19.9 162.4L16.8 164.2L17 160.4zM26.1 162.4L23.1 164.2L23.2 160.4zM32.4 162.4L29.3 164.1L29.5 160.4zM38.6 162.4L35.5 164.1L35.8 160.3zM44.9 162.4L41.8 164.1L42 160.3zM51.1 162.4L48 164.1L48.3 160.3zM57.4 162.3L54.3 164L54.5 160.2zM63.6 162.3L60.5 164L60.8 160.2zM69.9 162.3L66.8 164L67 160.2zM76.1 162.3L73 163.9L73.3 160.2zM82.4 162.2L79.3 163.9L79.5 160.1zM88.6 162.2L85.5 163.9L85.8 160.1zM94.9 162.2L91.8 163.9L92 160.1zM101.1 162.2L98 163.8L98.3 160zM107.4 162.2L104.2 163.8L104.6 160zM113.6 162.2L110.5 163.8L110.8 160zM119.9 162.1L116.7 163.7L117.1 160zM126.1 162.1L123 163.7L123.3 159.9zM132.4 162.1L129.2 163.7L129.6 159.9zM138.6 162.1L135.4 163.7L135.9 159.9zM7.4 168.7L4.3 170.5L4.5 166.7zM13.6 168.7L10.6 170.5L10.7 166.7zM19.9 168.7L16.8 170.5L17 166.7zM26.1 168.7L23.1 170.5L23.2 166.7zM32.4 168.7L29.3 170.4L29.5 166.6zM38.6 168.7L35.5 170.4L35.8 166.6zM44.9 168.7L41.8 170.4L42 166.6zM51.1 168.7L48 170.3L48.3 166.5zM57.4 168.6L54.3 170.3L54.5 166.5zM63.6 168.6L60.5 170.3L60.8 166.5zM69.9 168.6L66.8 170.3L67 166.5zM76.1 168.6L73 170.2L73.3 166.4zM82.4 168.5L79.3 170.2L79.5 166.4zM88.6 168.5L85.5 170.2L85.8 166.4zM94.9 168.5L91.7 170.1L92.1 166.4zM101.1 168.5L98 170.1L98.3 166.3zM107.4 168.5L104.2 170.1L104.6 166.3zM113.6 168.4L110.5 170.1L110.8 166.3zM119.9 168.4L116.7 170L117.1 166.2zM126.1 168.4L122.9 170L123.4 166.2zM132.4 168.4L129.2 170L129.6 166.2zM138.6 168.4L135.4 169.9L135.9 166.2zM144.9 168.4L141.7 169.9L142.1 166.1zM151.1 168.4L147.9 169.9L148.4 166.1zM7.4 175L4.3 176.8L4.5 173zM13.6 175L10.6 176.8L10.7 173zM19.9 175L16.8 176.8L17 173zM26.1 175L23.1 176.7L23.2 172.9zM32.4 175L29.3 176.7L29.5 172.9zM38.6 175L35.5 176.7L35.8 172.9zM44.9 174.9L41.8 176.6L42 172.9zM51.1 174.9L48 176.6L48.3 172.8zM57.4 174.9L54.3 176.6L54.5 172.8zM63.6 174.9L60.5 176.6L60.8 172.8zM69.9 174.9L66.8 176.5L67 172.7zM76.1 174.8L73 176.5L73.3 172.7zM82.4 174.8L79.3 176.5L79.5 172.7zM88.6 174.8L85.5 176.4L85.8 172.7zM94.9 174.8L91.7 176.4L92.1 172.6zM101.1 174.7L98 176.4L98.3 172.6zM107.4 174.7L104.2 176.4L104.6 172.6zM113.6 174.7L110.5 176.3L110.8 172.6zM119.9 174.7L116.7 176.3L117.1 172.5zM126.1 174.7L122.9 176.3L123.4 172.5zM132.4 174.7L129.2 176.2L129.6 172.5zM138.6 174.7L135.4 176.2L135.9 172.4zM144.9 174.7L141.7 176.2L142.1 172.4zM151.1 174.7L147.9 176.2L148.4 172.4zM157.4 174.6L154.1 176.1L154.7 172.4zM163.6 174.6L160.4 176.1L160.9 172.3zM169.9 174.6L166.6 176.1L167.2 172.3zM176.1 174.6L172.9 176L173.4 172.3zM182.4 174.6L179.1 176L179.7 172.3zM7.4 181.3L4.3 183.1L4.5 179.3zM13.6 181.3L10.6 183.1L10.7 179.3zM19.9 181.3L16.8 183L17 179.2zM26.1 181.3L23.1 183L23.2 179.2zM32.4 181.3L29.3 183L29.5 179.2zM38.6 181.2L35.5 183L35.8 179.2zM44.9 181.2L41.8 182.9L42 179.1zM51.1 181.2L48 182.9L48.3 179.1zM57.4 181.2L54.3 182.9L54.5 179.1zM63.6 181.2L60.5 182.8L60.8 179.1zM69.9 181.1L66.8 182.8L67 179zM76.1 181.1L73 182.8L73.3 179zM82.4 181.1L79.3 182.8L79.5 179zM88.6 181.1L85.5 182.7L85.8 178.9zM94.9 181L91.7 182.7L92.1 178.9zM101.1 181L98 182.7L98.3 178.9zM107.4 181L104.2 182.6L104.6 178.9zM113.6 181L110.5 182.6L110.8 178.8zM119.9 181L116.7 182.6L117.1 178.8zM126.1 181L122.9 182.6L123.4 178.8zM132.4 181L129.2 182.5L129.6 178.8zM138.6 181L135.4 182.5L135.9 178.7zM144.9 181L141.7 182.5L142.1 178.7zM151.1 180.9L147.9 182.4L148.4 178.7zM157.4 180.9L154.1 182.4L154.7 178.6zM163.6 180.9L160.4 182.4L160.9 178.6zM169.9 180.9L166.6 182.3L167.2 178.6zM176.1 180.9L172.9 182.3L173.4 178.6zM182.4 180.9L179.1 182.3L179.7 178.5zM188.6 180.8L185.4 182.3L185.9 178.5zM194.9 180.8L191.6 182.2L192.2 178.5zM201.1 180.8L197.9 182.2L198.4 178.5zM7.4 187.6L4.3 189.4L4.5 185.6zM13.6 187.6L10.6 189.4L10.7 185.6zM19.9 187.6L16.8 189.3L17 185.5zM26.1 187.6L23.1 189.3L23.2 185.5zM32.4 187.5L29.3 189.3L29.5 185.5zM38.6 187.5L35.5 189.2L35.8 185.4zM44.9 187.5L41.8 189.2L42 185.4zM51.1 187.5L48 189.2L48.3 185.4zM57.4 187.5L54.3 189.2L54.5 185.4zM63.6 187.4L60.5 189.1L60.8 185.3zM69.9 187.4L66.8 189.1L67 185.3zM76.1 187.4L73 189.1L73.3 185.3zM82.4 187.4L79.3 189L79.5 185.2zM88.6 187.3L85.5 189L85.8 185.2zM94.9 187.3L91.7 189L92.1 185.2zM101.1 187.3L98 189L98.3 185.2zM107.4 187.3L104.2 188.9L104.6 185.1zM113.6 187.3L110.5 188.9L110.8 185.1zM119.9 187.3L116.7 188.9L117.1 185.1zM126.1 187.3L122.9 188.8L123.4 185.1zM132.4 187.3L129.2 188.8L129.6 185zM138.6 187.3L135.4 188.8L135.9 185zM144.9 187.2L141.7 188.7L142.1 185zM151.1 187.2L147.9 188.7L148.4 185zM157.4 187.2L154.1 188.7L154.7 184.9zM163.6 187.2L160.4 188.7L160.9 184.9zM169.9 187.2L166.6 188.6L167.2 184.9zM176.1 187.2L172.9 188.6L173.4 184.8zM182.4 187.1L179.1 188.6L179.7 184.8zM188.6 187.1L185.4 188.5L185.9 184.8zM194.9 187.1L191.6 188.5L192.2 184.8zM201.1 187.1L197.9 188.5L198.4 184.7zM207.4 187.1L204.1 188.5L204.7 184.7zM213.6 187L210.4 188.4L210.9 184.7zM219.9 187L216.6 188.4L217.2 184.6zM226.1 187L222.8 188.4L223.5 184.6zM7.4 193.9L4.3 195.7L4.5 191.9zM13.6 193.9L10.6 195.6L10.7 191.8zM19.9 193.8L16.8 195.6L17 191.8zM26.1 193.8L23.1 195.6L23.2 191.8zM32.4 193.8L29.3 195.5L29.5 191.8zM38.6 193.8L35.5 195.5L35.8 191.7zM44.9 193.8L41.8 195.5L42 191.7zM51.1 193.8L48 195.5L48.3 191.7zM57.4 193.7L54.3 195.4L54.5 191.6zM63.6 193.7L60.5 195.4L60.8 191.6zM69.9 193.7L66.8 195.4L67 191.6zM76.1 193.7L73 195.3L73.3 191.6zM82.4 193.6L79.3 195.3L79.5 191.5zM88.6 193.6L85.5 195.3L85.8 191.5zM94.9 193.6L91.7 195.3L92.1 191.5zM101.1 193.6L98 195.2L98.3 191.4zM107.4 193.6L104.2 195.2L104.6 191.4zM113.6 193.6L110.5 195.2L110.8 191.4zM119.9 193.6L116.7 195.1L117.1 191.4zM126.1 193.6L122.9 195.1L123.4 191.3zM132.4 193.5L129.2 195.1L129.6 191.3zM138.6 193.5L135.4 195.1L135.9 191.3zM144.9 193.5L141.7 195L142.1 191.3zM151.1 193.5L147.9 195L148.4 191.2zM157.4 193.5L154.1 195L154.7 191.2zM163.6 193.5L160.4 194.9L160.9 191.2zM169.9 193.5L166.6 194.9L167.2 191.1zM176.1 193.4L172.9 194.9L173.4 191.1zM182.4 193.4L179.1 194.9L179.7 191.1zM188.6 193.4L185.4 194.8L185.9 191.1zM194.9 193.4L191.6 194.8L192.2 191zM201.1 193.4L197.9 194.8L198.4 191zM207.4 193.3L204.1 194.7L204.7 191zM213.6 193.3L210.3 194.7L211 191zM219.9 193.3L216.6 194.7L217.2 190.9zM226.1 193.3L222.8 194.7L223.5 190.9zM232.4 193.2L229.1 194.6L229.7 190.9zM238.6 193.2L235.3 194.6L236 190.8zM244.9 193.2L241.6 194.6L242.2 190.8zM7.4 200.1L4.3 201.9L4.5 198.1zM13.6 200.1L10.6 201.9L10.7 198.1zM19.9 200.1L16.8 201.9L17 198.1zM26.1 200.1L23.1 201.9L23.2 198.1zM32.4 200.1L29.3 201.8L29.5 198zM38.6 200.1L35.5 201.8L35.8 198zM44.9 200.1L41.8 201.8L42 198zM51.1 200.1L48 201.7L48.3 197.9zM57.4 200L54.3 201.7L54.5 197.9zM63.6 200L60.5 201.7L60.8 197.9zM69.9 200L66.8 201.7L67 197.9zM76.1 200L73 201.6L73.3 197.8zM82.4 199.9L79.3 201.6L79.5 197.8zM88.6 199.9L85.5 201.6L85.8 197.8zM94.9 199.9L91.7 201.5L92.1 197.8zM101.1 199.9L98 201.5L98.3 197.7zM107.4 199.9L104.2 201.5L104.6 197.7zM113.6 199.9L110.5 201.5L110.8 197.7zM119.9 199.8L116.7 201.4L117.1 197.6zM126.1 199.8L122.9 201.4L123.4 197.6zM132.4 199.8L129.2 201.4L129.6 197.6zM138.6 199.8L135.4 201.3L135.9 197.6zM144.9 199.8L141.7 201.3L142.1 197.5zM151.1 199.8L147.9 201.3L148.4 197.5zM157.4 199.8L154.1 201.2L154.7 197.5zM163.6 199.8L160.4 201.2L160.9 197.5zM169.9 199.7L166.6 201.2L167.2 197.4zM176.1 199.7L172.9 201.2L173.4 197.4zM182.4 199.7L179.1 201.1L179.7 197.4zM188.6 199.7L185.4 201.1L185.9 197.3zM194.9 199.7L191.6 201.1L192.2 197.3zM201.1 199.6L197.9 201L198.4 197.3zM207.4 199.6L204.1 201L204.7 197.3zM213.6 199.6L210.3 201L211 197.2zM219.9 199.6L216.6 201L217.2 197.2zM226.1 199.5L222.8 200.9L223.5 197.2zM232.4 199.5L229.1 200.9L229.7 197.2zM238.6 199.5L235.3 200.9L236 197.1zM244.9 199.5L241.6 200.8L242.2 197.1zM251.1 199.4L247.8 200.8L248.5 197.1zM257.4 199.4L254.1 200.8L254.7 197zM263.6 199.4L260.3 200.8L261 197zM269.9 199.4L266.6 200.7L267.2 197zM276.1 199.3L272.8 200.7L273.5 197zM7.4 206.4L4.3 208.2L4.5 204.4zM13.6 206.4L10.6 208.2L10.7 204.4zM19.9 206.4L16.8 208.2L17 204.4zM26.1 206.4L23.1 208.1L23.2 204.3zM32.4 206.4L29.3 208.1L29.5 204.3zM38.6 206.4L35.5 208.1L35.8 204.3zM44.9 206.3L41.8 208L42 204.3zM51.1 206.3L48 208L48.3 204.2zM57.4 206.3L54.3 208L54.5 204.2zM63.6 206.3L60.5 208L60.8 204.2zM69.9 206.3L66.8 207.9L67 204.1zM76.1 206.2L73 207.9L73.3 204.1zM82.4 206.2L79.3 207.9L79.5 204.1zM88.6 206.2L85.5 207.8L85.8 204.1zM94.9 206.2L91.7 207.8L92.1 204zM101.1 206.2L98 207.8L98.3 204zM107.4 206.1L104.2 207.8L104.6 204zM113.6 206.1L110.5 207.7L110.8 204zM119.9 206.1L116.7 207.7L117.1 203.9zM126.1 206.1L122.9 207.7L123.4 203.9zM132.4 206.1L129.2 207.6L129.6 203.9zM138.6 206.1L135.4 207.6L135.9 203.8zM144.9 206.1L141.7 207.6L142.1 203.8zM151.1 206.1L147.9 207.6L148.4 203.8zM157.4 206.1L154.1 207.5L154.7 203.8zM163.6 206L160.4 207.5L160.9 203.7zM169.9 206L166.6 207.5L167.2 203.7zM176.1 206L172.9 207.4L173.4 203.7zM182.4 206L179.1 207.4L179.7 203.7zM188.6 206L185.4 207.4L185.9 203.6zM194.9 205.9L191.6 207.4L192.2 203.6zM201.1 205.9L197.9 207.3L198.4 203.6zM207.4 205.9L204.1 207.3L204.7 203.5zM213.6 205.9L210.3 207.3L211 203.5zM219.9 205.8L216.6 207.2L217.2 203.5zM226.1 205.8L222.8 207.2L223.5 203.5zM232.4 205.8L229.1 207.2L229.7 203.4zM238.6 205.8L235.3 207.2L236 203.4zM244.9 205.7L241.6 207.1L242.2 203.4zM251.1 205.7L247.8 207.1L248.5 203.3zM257.4 205.7L254.1 207.1L254.7 203.3zM263.6 205.7L260.3 207L261 203.3zM269.9 205.7L266.6 207L267.2 203.3zM276.1 205.6L272.8 207L273.5 203.2zM282.4 205.6L279.1 207L279.7 203.2zM288.6 205.6L285.3 206.9L286 203.2zM294.8 205.6L291.6 206.9L292.2 203.2zM301.1 205.6L297.8 206.9L298.5 203.1zM7.4 212.7L4.3 214.5L4.5 210.7zM13.6 212.7L10.6 214.5L10.7 210.7zM19.9 212.7L16.8 214.4L17 210.6zM26.1 212.7L23.1 214.4L23.2 210.6zM32.4 212.7L29.3 214.4L29.5 210.6zM38.6 212.6L35.5 214.4L35.8 210.6zM44.9 212.6L41.8 214.3L42 210.5zM51.1 212.6L48 214.3L48.3 210.5zM57.4 212.6L54.3 214.3L54.5 210.5zM63.6 212.6L60.5 214.2L60.8 210.5zM69.9 212.5L66.8 214.2L67 210.4zM76.1 212.5L73 214.2L73.3 210.4zM82.4 212.5L79.3 214.2L79.5 210.4zM88.6 212.5L85.5 214.1L85.8 210.3zM94.9 212.5L91.7 214.1L92.1 210.3zM101.1 212.4L98 214.1L98.3 210.3zM107.4 212.4L104.2 214L104.6 210.3zM113.6 212.4L110.5 214L110.8 210.2zM119.9 212.4L116.7 214L117.1 210.2zM126.1 212.4L122.9 214L123.4 210.2zM132.4 212.4L129.2 213.9L129.6 210.2zM138.6 212.4L135.4 213.9L135.9 210.1zM144.9 212.4L141.7 213.9L142.1 210.1zM151.1 212.4L147.9 213.8L148.4 210.1zM157.4 212.3L154.1 213.8L154.7 210zM163.6 212.3L160.4 213.8L160.9 210zM169.9 212.3L166.6 213.7L167.2 210zM176.1 212.3L172.9 213.7L173.4 210zM182.4 212.3L179.1 213.7L179.7 209.9zM188.6 212.2L185.4 213.7L185.9 209.9zM194.9 212.2L191.6 213.6L192.2 209.9zM201.1 212.2L197.9 213.6L198.4 209.9zM207.4 212.2L204.1 213.6L204.7 209.8zM213.6 212.1L210.3 213.5L211 209.8zM219.9 212.1L216.6 213.5L217.2 209.8zM226.1 212.1L222.8 213.5L223.5 209.7zM232.4 212.1L229.1 213.5L229.7 209.7zM238.6 212L235.3 213.4L236 209.7zM244.9 212L241.6 213.4L242.2 209.7zM251.1 212L247.8 213.4L248.5 209.6zM257.4 212L254.1 213.3L254.7 209.6zM263.6 212L260.3 213.3L261 209.6zM269.9 211.9L266.6 213.3L267.2 209.5zM276.1 211.9L272.8 213.3L273.5 209.5zM282.4 211.9L279.1 213.2L279.7 209.5zM288.6 211.9L285.3 213.2L286 209.5zM294.8 211.9L291.6 213.2L292.2 209.4zM301.1 211.8L297.8 213.1L298.5 209.4zM307.3 211.8L304 213.1L304.8 209.4zM7.4 219L4.3 220.8L4.5 217zM13.6 219L10.6 220.8L10.7 217zM19.9 219L16.8 220.7L17 216.9zM26.1 219L23.1 220.7L23.2 216.9zM32.4 218.9L29.3 220.7L29.5 216.9zM38.6 218.9L35.5 220.6L35.8 216.8zM44.9 218.9L41.8 220.6L42 216.8zM51.1 218.9L48 220.6L48.3 216.8zM57.4 218.9L54.3 220.6L54.5 216.8zM63.6 218.8L60.5 220.5L60.8 216.7zM69.9 218.8L66.8 220.5L67 216.7zM76.1 218.8L73 220.5L73.3 216.7zM82.4 218.8L79.3 220.4L79.5 216.6zM88.6 218.8L85.5 220.4L85.8 216.6zM94.9 218.7L91.7 220.4L92.1 216.6zM101.1 218.7L98 220.4L98.3 216.6zM107.4 218.7L104.2 220.3L104.6 216.5zM113.6 218.7L110.5 220.3L110.8 216.5zM119.9 218.7L116.7 220.3L117.1 216.5zM126.1 218.7L122.9 220.2L123.4 216.5zM132.4 218.7L129.2 220.2L129.6 216.4zM138.6 218.7L135.4 220.2L135.9 216.4zM144.9 218.7L141.7 220.1L142.1 216.4zM151.1 218.6L147.9 220.1L148.4 216.4zM157.4 218.6L154.1 220.1L154.7 216.3zM163.6 218.6L160.4 220.1L160.9 216.3zM169.9 218.6L166.6 220L167.2 216.3zM176.1 218.6L172.9 220L173.4 216.2zM182.4 218.5L179.1 220L179.7 216.2zM188.6 218.5L185.4 219.9L185.9 216.2zM194.9 218.5L191.6 219.9L192.2 216.2zM201.1 218.5L197.9 219.9L198.4 216.1zM207.4 218.5L204.1 219.9L204.7 216.1zM213.6 218.4L210.3 219.8L211 216.1zM219.9 218.4L216.6 219.8L217.2 216zM226.1 218.4L222.8 219.8L223.5 216zM232.4 218.3L229.1 219.7L229.7 216zM238.6 218.3L235.3 219.7L236 216zM244.9 218.3L241.6 219.7L242.2 215.9zM251.1 218.3L247.8 219.7L248.5 215.9zM257.4 218.3L254.1 219.6L254.7 215.9zM263.6 218.2L260.3 219.6L261 215.9zM269.9 218.2L266.6 219.6L267.2 215.8zM276.1 218.2L272.8 219.5L273.5 215.8zM282.4 218.2L279.1 219.5L279.7 215.8zM288.6 218.2L285.3 219.5L286 215.7zM294.8 218.1L291.6 219.5L292.2 215.7zM301.1 218.1L297.8 219.4L298.5 215.7zM307.3 218.1L304 219.4L304.8 215.7zM313.6 218.1L310.3 219.4L311 215.6zM319.8 218.1L316.5 219.3L317.3 215.6zM326.1 218.1L322.8 219.3L323.5 215.6zM88.6 225L85.5 226.7L85.8 222.9zM94.9 225L91.7 226.7L92.1 222.9zM101.1 225L98 226.6L98.3 222.8zM107.4 225L104.2 226.6L104.6 222.8zM113.6 225L110.5 226.6L110.8 222.8zM119.9 225L116.7 226.5L117.1 222.8zM126.1 225L122.9 226.5L123.4 222.7zM132.4 225L129.2 226.5L129.6 222.7zM138.6 224.9L135.4 226.5L135.9 222.7zM144.9 224.9L141.7 226.4L142.1 222.7zM151.1 224.9L147.9 226.4L148.4 222.6zM157.4 224.9L154.1 226.4L154.7 222.6zM163.6 224.9L160.4 226.3L160.9 222.6zM169.9 224.9L166.6 226.3L167.2 222.5zM176.1 224.8L172.9 226.3L173.4 222.5zM182.4 224.8L179.1 226.3L179.7 222.5zM188.6 224.8L185.4 226.2L185.9 222.5zM194.9 224.8L191.6 226.2L192.2 222.4zM201.1 224.8L197.9 226.2L198.4 222.4zM207.4 224.7L204.1 226.1L204.7 222.4zM213.6 224.7L210.3 226.1L211 222.4zM219.9 224.7L216.6 226.1L217.2 222.3zM226.1 224.7L222.8 226.1L223.5 222.3zM232.4 224.6L229.1 226L229.7 222.3zM238.6 224.6L235.3 226L236 222.2zM244.9 224.6L241.6 226L242.2 222.2zM251.1 224.6L247.8 225.9L248.5 222.2zM257.4 224.5L254.1 225.9L254.7 222.2zM263.6 224.5L260.3 225.9L261 222.1zM269.9 224.5L266.6 225.9L267.2 222.1zM276.1 224.5L272.8 225.8L273.5 222.1zM282.4 224.5L279.1 225.8L279.7 222.1zM288.6 224.4L285.3 225.8L286 222zM294.8 224.4L291.5 225.7L292.3 222zM301.1 224.4L297.8 225.7L298.5 222zM307.3 224.4L304 225.7L304.8 221.9zM313.6 224.4L310.3 225.6L311 221.9zM319.8 224.4L316.5 225.6L317.3 221.9zM326.1 224.3L322.8 225.6L323.5 221.9zM332.3 224.3L329 225.6L329.8 221.8zM113.6 231.3L110.5 232.9L110.8 229.1zM119.9 231.3L116.7 232.8L117.1 229zM126.1 231.2L122.9 232.8L123.4 229zM132.4 231.2L129.2 232.8L129.6 229zM138.6 231.2L135.4 232.7L135.9 229zM144.9 231.2L141.7 232.7L142.1 228.9zM151.1 231.2L147.9 232.7L148.4 228.9zM157.4 231.2L154.1 232.6L154.7 228.9zM163.6 231.2L160.4 232.6L160.9 228.9zM169.9 231.1L166.6 232.6L167.2 228.8zM176.1 231.1L172.9 232.6L173.4 228.8zM182.4 231.1L179.1 232.5L179.7 228.8zM188.6 231.1L185.4 232.5L185.9 228.7zM194.9 231.1L191.6 232.5L192.2 228.7zM201.1 231L197.9 232.4L198.4 228.7zM207.4 231L204.1 232.4L204.7 228.7zM213.6 231L210.3 232.4L211 228.6zM219.9 231L216.6 232.4L217.2 228.6zM226.1 230.9L222.8 232.3L223.5 228.6zM232.4 230.9L229.1 232.3L229.7 228.6zM238.6 230.9L235.3 232.3L236 228.5zM244.9 230.9L241.6 232.2L242.2 228.5zM251.1 230.8L247.8 232.2L248.5 228.5zM257.4 230.8L254.1 232.2L254.7 228.4zM263.6 230.8L260.3 232.2L261 228.4zM269.9 230.8L266.6 232.1L267.2 228.4zM276.1 230.8L272.8 232.1L273.5 228.4zM282.4 230.7L279.1 232.1L279.7 228.3zM288.6 230.7L285.3 232L286 228.3zM294.8 230.7L291.5 232L292.3 228.3zM301.1 230.7L297.8 232L298.5 228.3zM307.3 230.7L304 232L304.8 228.2zM313.6 230.7L310.3 231.9L311 228.2zM319.8 230.6L316.5 231.9L317.3 228.2zM326.1 230.6L322.8 231.9L323.5 228.1zM332.3 230.6L329 231.8L329.8 228.1zM338.6 230.6L335.2 231.8L336.1 228.1zM344.8 230.6L341.5 231.8L342.3 228.1zM126.1 237.5L122.9 239.1L123.4 235.3zM132.4 237.5L129.2 239L129.6 235.3zM138.6 237.5L135.4 239L135.9 235.2zM144.9 237.5L141.7 239L142.1 235.2zM151.1 237.5L147.9 239L148.4 235.2zM157.4 237.5L154.1 238.9L154.7 235.2zM163.6 237.4L160.4 238.9L160.9 235.1zM169.9 237.4L166.6 238.9L167.2 235.1zM176.1 237.4L172.9 238.8L173.4 235.1zM182.4 237.4L179.1 238.8L179.7 235.1zM188.6 237.4L185.4 238.8L185.9 235zM194.9 237.3L191.6 238.8L192.2 235zM201.1 237.3L197.9 238.7L198.4 235zM207.4 237.3L204.1 238.7L204.7 234.9zM213.6 237.3L210.3 238.7L211 234.9zM219.9 237.2L216.6 238.6L217.2 234.9zM226.1 237.2L222.8 238.6L223.5 234.9zM232.4 237.2L229.1 238.6L229.7 234.8zM238.6 237.2L235.3 238.6L236 234.8zM244.9 237.1L241.6 238.5L242.2 234.8zM251.1 237.1L247.8 238.5L248.5 234.7zM257.4 237.1L254.1 238.5L254.7 234.7zM263.6 237.1L260.3 238.4L261 234.7zM269.9 237.1L266.6 238.4L267.2 234.7zM276.1 237L272.8 238.4L273.5 234.6zM282.4 237L279.1 238.4L279.7 234.6zM288.6 237L285.3 238.3L286 234.6zM294.8 237L291.5 238.3L292.3 234.6zM301.1 237L297.8 238.3L298.5 234.5zM307.3 237L304 238.2L304.8 234.5zM313.6 236.9L310.3 238.2L311 234.5zM319.8 236.9L316.5 238.2L317.3 234.5zM326.1 236.9L322.8 238.1L323.5 234.4zM332.3 236.9L329 238.1L329.8 234.4zM338.6 236.9L335.2 238.1L336.1 234.4zM344.8 236.9L341.5 238.1L342.3 234.4zM351.1 236.9L347.7 238L348.6 234.3zM357.3 236.8L354 238L354.8 234.3zM151.1 243.8L147.9 245.2L148.4 241.5zM157.4 243.7L154.1 245.2L154.7 241.4zM163.6 243.7L160.4 245.2L160.9 241.4zM169.9 243.7L166.6 245.1L167.2 241.4zM176.1 243.7L172.9 245.1L173.4 241.4zM182.4 243.7L179.1 245.1L179.7 241.3zM188.6 243.6L185.4 245.1L185.9 241.3zM194.9 243.6L191.6 245L192.2 241.3zM201.1 243.6L197.9 245L198.4 241.3zM207.4 243.6L204.1 245L204.7 241.2zM213.6 243.5L210.3 244.9L211 241.2zM219.9 243.5L216.6 244.9L217.2 241.2zM226.1 243.5L222.8 244.9L223.5 241.1zM232.4 243.5L229.1 244.9L229.7 241.1zM238.6 243.4L235.3 244.8L236 241.1zM244.9 243.4L241.6 244.8L242.2 241.1zM251.1 243.4L247.8 244.8L248.5 241zM257.4 243.4L254.1 244.7L254.7 241zM263.6 243.4L260.3 244.7L261 241zM269.9 243.3L266.6 244.7L267.2 240.9zM276.1 243.3L272.8 244.7L273.5 240.9zM282.4 243.3L279.1 244.6L279.7 240.9zM288.6 243.3L285.3 244.6L286 240.9zM294.8 243.3L291.5 244.6L292.3 240.8zM301.1 243.3L297.8 244.5L298.5 240.8zM307.3 243.2L304 244.5L304.8 240.8zM313.6 243.2L310.3 244.5L311 240.8zM319.8 243.2L316.5 244.5L317.3 240.7zM326.1 243.2L322.8 244.4L323.5 240.7zM332.3 243.2L329 244.4L329.8 240.7zM338.6 243.2L335.2 244.4L336.1 240.7zM344.8 243.2L341.5 244.3L342.3 240.6zM351.1 243.1L347.7 244.3L348.6 240.6zM357.3 243.1L354 244.3L354.8 240.6zM363.6 243.1L360.2 244.2L361.1 240.6zM369.8 243.1L366.5 244.2L367.3 240.5zM376.1 243.1L372.7 244.2L373.6 240.5zM382.3 243L379 244.2L379.8 240.5zM176.1 250L172.9 251.4L173.4 247.6zM182.4 250L179.1 251.4L179.7 247.6zM188.6 249.9L185.4 251.3L185.9 247.6zM194.9 249.9L191.6 251.3L192.2 247.6zM201.1 249.9L197.9 251.3L198.4 247.5zM207.4 249.9L204.1 251.3L204.7 247.5zM213.6 249.8L210.3 251.2L211 247.5zM219.9 249.8L216.6 251.2L217.2 247.4zM226.1 249.8L222.8 251.2L223.5 247.4zM232.4 249.7L229.1 251.1L229.7 247.4zM238.6 249.7L235.3 251.1L236 247.4zM244.9 249.7L241.6 251.1L242.2 247.3zM251.1 249.7L247.8 251.1L248.5 247.3zM257.4 249.7L254.1 251L254.7 247.3zM263.6 249.6L260.3 251L261 247.3zM269.9 249.6L266.6 251L267.2 247.2zM276.1 249.6L272.8 250.9L273.5 247.2zM282.4 249.6L279.1 250.9L279.7 247.2zM288.6 249.6L285.3 250.9L286 247.1zM294.8 249.5L291.5 250.9L292.3 247.1zM301.1 249.5L297.8 250.8L298.5 247.1zM307.3 249.5L304 250.8L304.8 247.1zM313.6 249.5L310.3 250.8L311 247zM319.8 249.5L316.5 250.7L317.3 247zM326.1 249.5L322.7 250.7L323.6 247zM332.3 249.5L329 250.7L329.8 247zM338.6 249.5L335.2 250.6L336.1 246.9zM344.8 249.4L341.5 250.6L342.3 246.9zM351.1 249.4L347.7 250.6L348.6 246.9zM357.3 249.4L354 250.6L354.8 246.9zM363.6 249.4L360.2 250.5L361.1 246.8zM369.8 249.4L366.5 250.5L367.3 246.8zM376.1 249.3L372.7 250.5L373.6 246.8zM382.3 249.3L379 250.4L379.8 246.7zM388.6 249.3L385.2 250.4L386.1 246.7zM394.8 249.3L391.4 250.4L392.4 246.7zM401.1 249.2L397.7 250.4L398.6 246.7zM407.3 249.2L403.9 250.3L404.9 246.6zM413.6 249.2L410.2 250.3L411.1 246.6zM194.9 256.2L191.6 257.6L192.2 253.8zM201.1 256.2L197.9 257.6L198.4 253.8zM207.4 256.1L204.1 257.5L204.7 253.8zM213.6 256.1L210.3 257.5L211 253.8zM219.9 256.1L216.6 257.5L217.2 253.7zM226.1 256.1L222.8 257.5L223.5 253.7zM232.4 256L229.1 257.4L229.7 253.7zM238.6 256L235.3 257.4L236 253.6zM244.9 256L241.6 257.4L242.2 253.6zM251.1 256L247.8 257.3L248.5 253.6zM257.4 255.9L254.1 257.3L254.7 253.6zM263.6 255.9L260.3 257.3L261 253.5zM269.9 255.9L266.6 257.3L267.2 253.5zM276.1 255.9L272.8 257.2L273.5 253.5zM282.4 255.9L279.1 257.2L279.7 253.5zM288.6 255.8L285.3 257.2L286 253.4zM294.8 255.8L291.5 257.1L292.3 253.4zM301.1 255.8L297.8 257.1L298.5 253.4zM307.3 255.8L304 257.1L304.8 253.3zM313.6 255.8L310.3 257L311 253.3zM319.8 255.8L316.5 257L317.3 253.3zM326.1 255.8L322.7 257L323.6 253.3zM332.3 255.7L329 257L329.8 253.2zM338.6 255.7L335.2 256.9L336.1 253.2zM344.8 255.7L341.5 256.9L342.3 253.2zM351.1 255.7L347.7 256.9L348.6 253.2zM357.3 255.7L354 256.8L354.8 253.1zM363.6 255.7L360.2 256.8L361.1 253.1zM369.8 255.6L366.5 256.8L367.3 253.1zM376.1 255.6L372.7 256.7L373.6 253.1zM382.3 255.6L378.9 256.7L379.9 253zM388.6 255.6L385.2 256.7L386.1 253zM394.8 255.5L391.4 256.7L392.4 253zM401.1 255.5L397.7 256.6L398.6 252.9zM407.3 255.5L403.9 256.6L404.9 252.9zM413.5 255.5L410.2 256.6L411.1 252.9zM419.8 255.5L416.4 256.5L417.4 252.9zM426 255.5L422.6 256.5L423.7 252.8zM432.3 255.5L428.9 256.5L429.9 252.8zM438.5 255.5L435.1 256.4L436.2 252.8zM444.7 255.5L441.3 256.4L442.5 252.8zM232.4 262.3L229.1 263.7L229.7 260zM238.6 262.3L235.3 263.7L236 259.9zM244.9 262.3L241.6 263.6L242.2 259.9zM251.1 262.2L247.8 263.6L248.5 259.9zM257.4 262.2L254.1 263.6L254.7 259.8zM263.6 262.2L260.3 263.6L261 259.8zM269.9 262.2L266.6 263.5L267.2 259.8zM276.1 262.2L272.8 263.5L273.5 259.8zM282.4 262.1L279.1 263.5L279.7 259.7zM288.6 262.1L285.3 263.4L286 259.7zM294.8 262.1L291.5 263.4L292.3 259.7zM301.1 262.1L297.8 263.4L298.5 259.7zM307.3 262.1L304 263.4L304.8 259.6zM313.6 262.1L310.3 263.3L311 259.6zM319.8 262.1L316.5 263.3L317.3 259.6zM326.1 262L322.7 263.3L323.6 259.5zM332.3 262L329 263.2L329.8 259.5zM338.6 262L335.2 263.2L336.1 259.5zM344.8 262L341.5 263.2L342.3 259.5zM351.1 262L347.7 263.1L348.6 259.4zM357.3 262L354 263.1L354.8 259.4zM363.6 261.9L360.2 263.1L361.1 259.4zM369.8 261.9L366.5 263.1L367.3 259.4zM376.1 261.9L372.7 263L373.6 259.3zM382.3 261.9L378.9 263L379.9 259.3zM388.6 261.8L385.2 263L386.1 259.3zM394.8 261.8L391.4 262.9L392.4 259.3zM401.1 261.8L397.7 262.9L398.6 259.2zM407.3 261.8L403.9 262.9L404.9 259.2zM413.5 261.8L410.2 262.8L411.1 259.2zM419.8 261.8L416.4 262.8L417.4 259.2zM426.1 261.6L422.7 262.8L423.6 259.1zM432.3 261.5L429 262.8L429.8 259.1zM438.6 261.4L435.4 262.8L435.9 259zM444.9 261.2L441.7 262.8L442.1 259zM451.1 261.1L448 262.7L448.3 259zM457.4 261L454.3 262.7L454.5 258.9zM463.6 260.9L460.6 262.7L460.7 258.9zM251.1 268.5L247.8 269.9L248.5 266.2zM257.4 268.5L254.1 269.9L254.7 266.1zM263.6 268.5L260.3 269.8L261 266.1zM269.9 268.5L266.6 269.8L267.2 266.1zM276.1 268.4L272.8 269.8L273.5 266zM282.3 268.4L279.1 269.8L279.7 266zM288.6 268.4L285.3 269.7L286 266zM294.8 268.4L291.5 269.7L292.3 266zM301.1 268.4L297.8 269.7L298.5 265.9zM307.3 268.4L304 269.6L304.8 265.9zM313.6 268.4L310.3 269.6L311 265.9zM319.8 268.3L316.5 269.6L317.3 265.9zM326.1 268.3L322.7 269.5L323.6 265.8zM332.3 268.3L329 269.5L329.8 265.8zM338.6 268.3L335.2 269.5L336.1 265.8zM344.8 268.3L341.5 269.5L342.3 265.8zM351.1 268.3L347.7 269.4L348.6 265.7zM357.3 268.2L354 269.4L354.8 265.7zM363.6 268.2L360.2 269.4L361.1 265.7zM369.8 268.2L366.5 269.3L367.3 265.6zM376.1 268.2L372.7 269.3L373.6 265.6zM382.3 268.1L378.9 269.3L379.9 265.6zM388.6 268.1L385.2 269.2L386.1 265.6zM394.8 268.1L391.4 269.2L392.4 265.5zM401.1 268.1L397.7 269.2L398.6 265.5zM407.3 268.1L403.9 269.2L404.9 265.5zM413.5 268.1L410.2 269.1L411.1 265.5zM419.8 268.1L416.4 269.1L417.4 265.4zM426.1 267.9L422.7 269.1L423.6 265.4zM432.3 267.8L429 269.1L429.8 265.3zM438.6 267.7L435.4 269.1L435.9 265.3zM444.9 267.5L441.7 269L442.1 265.3zM451.1 267.4L448 269L448.3 265.2zM457.4 267.3L454.3 269L454.5 265.2zM463.6 267.2L460.6 269L460.7 265.2zM469.9 267.1L466.9 268.9L466.9 265.1zM276.1 274.7L272.8 276.1L273.5 272.3zM282.3 274.7L279.1 276L279.7 272.3zM288.6 274.7L285.3 276L286 272.3zM294.8 274.7L291.5 276L292.3 272.2zM301.1 274.7L297.8 275.9L298.5 272.2zM307.3 274.6L304 275.9L304.8 272.2zM313.6 274.6L310.3 275.9L311 272.2zM319.8 274.6L316.5 275.9L317.3 272.1zM326.1 274.6L322.7 275.8L323.6 272.1zM332.3 274.6L329 275.8L329.8 272.1zM338.6 274.6L335.2 275.8L336.1 272.1zM344.8 274.6L341.5 275.7L342.3 272zM351.1 274.5L347.7 275.7L348.6 272zM357.3 274.5L354 275.7L354.8 272zM363.6 274.5L360.2 275.6L361.1 272zM369.8 274.5L366.5 275.6L367.3 271.9zM376.1 274.5L372.7 275.6L373.6 271.9zM382.3 274.4L378.9 275.6L379.9 271.9zM388.6 274.4L385.2 275.5L386.1 271.8zM394.8 274.4L391.4 275.5L392.4 271.8zM401.1 274.4L397.7 275.5L398.6 271.8zM407.3 274.4L403.9 275.4L404.9 271.8zM413.5 274.4L410.1 275.4L411.2 271.7zM419.8 274.3L416.4 275.4L417.4 271.7zM426.1 274.2L422.7 275.4L423.6 271.7zM432.3 274.1L429 275.4L429.8 271.6zM438.6 273.9L435.3 275.3L436 271.6zM444.9 273.8L441.7 275.3L442.1 271.5zM451.1 273.7L448 275.3L448.3 271.5zM457.4 273.6L454.3 275.3L454.5 271.5zM463.6 273.4L460.6 275.2L460.7 271.4zM469.9 273.3L466.9 275.2L466.9 271.4zM476.1 273.2L473.2 275.2L473.1 271.4zM482.4 273.1L479.5 275.2L479.3 271.4zM288.6 281L285.3 282.3L286 278.5zM294.8 281L291.5 282.3L292.3 278.5zM301.1 280.9L297.8 282.2L298.5 278.5zM307.3 280.9L304 282.2L304.8 278.5zM313.6 280.9L310.3 282.2L311 278.4zM319.8 280.9L316.5 282.1L317.3 278.4zM326.1 280.9L322.7 282.1L323.6 278.4zM332.3 280.9L329 282.1L329.8 278.4zM338.6 280.9L335.2 282L336.1 278.3zM344.8 280.8L341.5 282L342.3 278.3zM351.1 280.8L347.7 282L348.6 278.3zM357.3 280.8L354 282L354.8 278.3zM363.6 280.8L360.2 281.9L361.1 278.2zM369.8 280.8L366.5 281.9L367.3 278.2zM376.1 280.7L372.7 281.9L373.6 278.2zM382.3 280.7L378.9 281.8L379.9 278.1zM388.6 280.7L385.2 281.8L386.1 278.1zM394.8 280.7L391.4 281.8L392.4 278.1zM401.1 280.7L397.7 281.7L398.6 278.1zM407.3 280.7L403.9 281.7L404.9 278zM413.5 280.7L410.1 281.7L411.2 278zM419.8 280.6L416.4 281.7L417.4 278zM426.1 280.5L422.7 281.6L423.6 277.9zM432.3 280.4L429 281.6L429.8 277.9zM438.6 280.2L435.3 281.6L436 277.9zM444.9 280.1L441.7 281.6L442.1 277.8zM451.1 280L448 281.6L448.3 277.8zM457.4 279.8L454.3 281.6L454.5 277.8zM463.6 279.7L460.6 281.5L460.7 277.7zM469.9 279.6L466.9 281.5L466.9 277.7zM476.1 279.5L473.2 281.5L473.1 277.7zM482.4 279.4L479.5 281.4L479.3 277.6zM488.6 279.3L485.8 281.4L485.5 277.6zM494.9 279.3L492 281.4L491.8 277.6zM501.1 279.3L498.3 281.4L498 277.6zM313.6 287.2L310.3 288.4L311 284.7zM319.8 287.2L316.5 288.4L317.3 284.7zM326.1 287.2L322.7 288.4L323.6 284.7zM332.3 287.2L329 288.4L329.8 284.6zM338.6 287.1L335.2 288.3L336.1 284.6zM344.8 287.1L341.5 288.3L342.3 284.6zM351.1 287.1L347.7 288.3L348.6 284.6zM357.3 287.1L354 288.2L354.8 284.5zM363.6 287.1L360.2 288.2L361.1 284.5zM369.8 287L366.5 288.2L367.3 284.5zM376.1 287L372.7 288.1L373.6 284.5zM382.3 287L378.9 288.1L379.9 284.4zM388.6 287L385.2 288.1L386.1 284.4zM394.8 287L391.4 288.1L392.4 284.4zM401.1 286.9L397.7 288L398.6 284.4zM407.3 286.9L403.9 288L404.9 284.3zM413.5 286.9L410.1 288L411.2 284.3zM419.8 286.9L416.4 287.9L417.4 284.3zM426.1 286.8L422.7 287.9L423.6 284.2zM432.3 286.6L429 287.9L429.8 284.2zM438.6 286.5L435.3 287.9L436 284.1zM444.9 286.4L441.7 287.9L442.1 284.1zM451.1 286.2L448 287.9L448.3 284.1zM457.4 286.1L454.3 287.8L454.5 284zM463.6 286L460.6 287.8L460.7 284zM469.9 285.9L466.9 287.8L466.9 284zM476.1 285.8L473.2 287.8L473.1 284zM482.4 285.7L479.5 287.7L479.3 283.9zM488.6 285.6L485.8 287.7L485.5 283.9zM494.9 285.5L492 287.7L491.8 283.9zM501.1 285.5L498.3 287.6L498 283.8zM507.4 285.6L504.5 287.6L504.3 283.8zM513.6 285.7L510.7 287.6L510.6 283.8zM519.9 285.7L516.8 287.6L517 283.8zM326.1 293.5L322.7 294.7L323.6 291zM332.3 293.4L329 294.6L329.8 290.9zM338.6 293.4L335.2 294.6L336.1 290.9zM344.8 293.4L341.5 294.6L342.3 290.9zM351.1 293.4L347.7 294.5L348.6 290.8zM357.3 293.4L354 294.5L354.8 290.8zM363.6 293.3L360.2 294.5L361.1 290.8zM369.8 293.3L366.4 294.5L367.4 290.8zM376.1 293.3L372.7 294.4L373.6 290.7zM382.3 293.3L378.9 294.4L379.9 290.7zM388.6 293.3L385.2 294.4L386.1 290.7zM394.8 293.2L391.4 294.3L392.4 290.7zM401.1 293.2L397.7 294.3L398.6 290.6zM407.3 293.2L403.9 294.3L404.9 290.6zM413.5 293.2L410.1 294.2L411.2 290.6zM419.8 293.2L416.4 294.2L417.4 290.6zM426.1 293.1L422.7 294.2L423.6 290.5zM432.3 292.9L429 294.2L429.8 290.5zM438.6 292.8L435.3 294.2L436 290.4zM444.9 292.7L441.7 294.2L442.1 290.4zM451.1 292.5L448 294.1L448.3 290.4zM457.4 292.4L454.3 294.1L454.5 290.3zM463.6 292.3L460.6 294.1L460.7 290.3zM469.9 292.1L466.9 294.1L466.9 290.3zM476.1 292L473.2 294L473.1 290.2zM482.4 292L479.5 294L479.3 290.2zM488.6 291.9L485.8 294L485.5 290.2zM494.9 291.8L492 293.9L491.8 290.2zM501.1 291.8L498.3 293.9L498 290.1zM507.4 291.9L504.5 293.9L504.3 290.1zM513.6 292L510.7 293.9L510.6 290.1zM519.9 292L516.8 293.8L517 290zM526.1 292.1L523 293.8L523.3 290zM351.1 299.7L347.7 300.8L348.6 297.1zM357.3 299.7L354 300.8L354.8 297.1zM363.6 299.6L360.2 300.8L361.1 297.1zM369.8 299.6L366.4 300.7L367.4 297zM376.1 299.6L372.7 300.7L373.6 297zM382.3 299.6L378.9 300.7L379.9 297zM388.6 299.5L385.2 300.6L386.1 297zM394.8 299.5L391.4 300.6L392.4 296.9zM401 299.5L397.7 300.6L398.6 296.9zM407.3 299.5L403.9 300.6L404.9 296.9zM413.5 299.5L410.1 300.5L411.2 296.9zM419.8 299.5L416.4 300.5L417.4 296.8zM426.1 299.4L422.7 300.5L423.6 296.8zM432.3 299.2L429 300.5L429.8 296.7zM438.6 299.1L435.3 300.5L436 296.7zM444.9 298.9L441.7 300.4L442.1 296.7zM451.1 298.8L448 300.4L448.3 296.6zM457.4 298.7L454.3 300.4L454.5 296.6zM463.6 298.5L460.6 300.4L460.7 296.6zM469.9 298.4L466.9 300.3L466.9 296.5zM476.1 298.3L473.2 300.3L473.1 296.5zM482.4 298.2L479.5 300.3L479.3 296.5zM488.6 298.1L485.8 300.3L485.5 296.5zM494.9 298.1L492 300.2L491.8 296.4zM501.1 298.1L498.3 300.2L498 296.4zM507.4 298.2L504.5 300.2L504.3 296.4zM513.7 298.2L510.8 300.1L510.7 296.3zM520 298.3L516.9 300.1L517.1 296.3zM526.2 298.4L523.1 300.1L523.3 296.3zM532.4 298.5L529.2 300.1L529.6 296.3zM538.6 298.5L535.4 300L535.9 296.2zM544.9 298.6L541.6 300L542.2 296.2zM376.1 305.9L372.7 307L373.6 303.3zM382.3 305.8L378.9 307L379.9 303.3zM388.6 305.8L385.2 306.9L386.1 303.2zM394.8 305.8L391.4 306.9L392.4 303.2zM401 305.8L397.7 306.9L398.6 303.2zM407.3 305.8L403.9 306.8L404.9 303.2zM413.5 305.8L410.1 306.8L411.2 303.1zM419.8 305.8L416.4 306.8L417.4 303.1zM426.1 305.7L422.7 306.8L423.6 303.1zM432.3 305.5L429 306.7L429.8 303zM438.6 305.4L435.3 306.7L436 303zM444.9 305.2L441.7 306.7L442.1 302.9zM451.1 305.1L448 306.7L448.3 302.9zM457.4 304.9L454.3 306.7L454.5 302.9zM463.6 304.8L460.6 306.6L460.7 302.8zM469.9 304.7L466.9 306.6L466.9 302.8zM476.1 304.6L473.2 306.6L473.1 302.8zM482.4 304.5L479.5 306.6L479.3 302.8zM488.6 304.4L485.8 306.5L485.5 302.7zM494.9 304.4L492.1 306.5L491.7 302.7zM501.1 304.4L498.3 306.5L498 302.7zM507.4 304.4L504.5 306.4L504.3 302.7zM514.3 304.5L511.3 306.4L511.2 302.6zM520.5 304.6L517.4 306.4L517.6 302.6zM526.7 304.7L523.6 306.4L523.8 302.6zM532.9 304.8L529.7 306.4L530.1 302.6zM539.1 304.9L535.8 306.4L536.4 302.6zM545.2 305L541.9 306.3L542.6 302.6zM551.4 305L548 306.3L548.8 302.6zM557.5 305.1L554.1 306.2L555 302.5zM388.6 312.1L385.2 313.2L386.1 309.5zM394.8 312.1L391.4 313.2L392.4 309.5zM401 312.1L397.7 313.1L398.6 309.5zM407.3 312.1L403.9 313.1L404.9 309.5zM413.5 312.1L410.1 313.1L411.2 309.4zM419.8 312.1L416.4 313L417.4 309.4zM426.1 311.9L422.7 313L423.6 309.4zM432.3 311.8L429 313L429.8 309.3zM438.6 311.6L435.3 313L436 309.3zM444.9 311.5L441.7 313L442.1 309.2zM451.1 311.3L448 313L448.3 309.2zM457.4 311.2L454.3 313L454.5 309.2zM463.6 311.1L460.6 312.9L460.7 309.1zM469.9 310.9L466.9 312.9L466.9 309.1zM476.1 310.8L473.2 312.9L473.1 309.1zM482.4 310.8L479.5 312.8L479.3 309zM488.6 310.7L485.8 312.8L485.5 309zM494.9 310.6L492.1 312.8L491.7 309zM501.1 310.6L498.3 312.8L498 309zM507.4 310.7L504.5 312.7L504.3 308.9zM514.8 310.8L511.8 312.7L511.8 308.9zM521 310.9L517.9 312.7L518.1 308.9zM527.2 311L524.1 312.7L524.3 308.9zM533.4 311.2L530.2 312.7L530.6 308.9zM539.6 311.3L536.3 312.7L536.9 308.9zM545.7 311.4L542.4 312.7L543.1 308.9zM551.8 311.4L548.5 312.7L549.3 308.9zM557.9 311.5L554.6 312.6L555.5 308.9zM564 311.6L560.6 312.5L561.7 308.9zM407.3 318.4L403.9 319.4L404.9 315.7zM413.5 318.4L410.1 319.4L411.2 315.7zM419.8 318.4L416.3 319.3L417.5 315.7zM426.1 318.2L422.7 319.3L423.6 315.6zM432.3 318.1L429 319.3L429.8 315.6zM438.6 317.9L435.3 319.3L436 315.5zM444.9 317.8L441.7 319.3L442.1 315.5zM451.1 317.6L448 319.3L448.3 315.5zM457.4 317.5L454.3 319.2L454.5 315.4zM463.6 317.3L460.6 319.2L460.7 315.4zM469.9 317.2L466.9 319.2L466.9 315.4zM476.1 317.1L473.2 319.1L473.1 315.4zM482.4 317L479.5 319.1L479.3 315.3zM488.6 316.9L485.8 319.1L485.5 315.3zM494.9 316.9L492.1 319.1L491.7 315.3zM501.1 316.9L498.3 319L498 315.2zM507.4 317L504.5 319L504.3 315.2zM515.3 317.1L512.3 319L512.3 315.2zM521.5 317.2L518.4 319L518.6 315.2zM527.7 317.4L524.6 319L524.9 315.2zM533.9 317.5L530.7 319.1L531.1 315.3zM540 317.6L536.8 319.1L537.4 315.3zM546.2 317.8L542.9 319.1L543.6 315.3zM552.3 317.9L549 319L549.8 315.3zM558.4 317.9L555 319L556 315.3zM564.5 318L561.1 319L562.2 315.3zM570.5 318.1L567.1 318.9L568.3 315.3zM576.6 318.1L573.1 318.8L574.5 315.3zM582.6 318.1L579.1 318.7L580.6 315.2zM419.8 324.7L416.3 325.6L417.5 322zM426.1 324.5L422.7 325.6L423.6 321.9zM432.3 324.4L429 325.6L429.8 321.9zM438.6 324.2L435.3 325.6L436 321.8zM444.9 324L441.7 325.6L442.1 321.8zM451.1 323.9L448 325.5L448.3 321.7zM457.4 323.7L454.3 325.5L454.5 321.7zM463.6 323.6L460.6 325.5L460.7 321.7zM469.9 323.5L467 325.5L466.8 321.7zM476.1 323.4L473.3 325.4L473 321.6zM482.4 323.3L479.5 325.4L479.3 321.6zM488.6 323.2L485.8 325.4L485.5 321.6zM494.9 323.2L492.1 325.3L491.7 321.6zM501.1 323.2L498.3 325.3L498 321.5zM507.3 323.3L504.4 325.3L504.3 321.5zM515.5 323.4L512.5 325.3L512.5 321.5zM521.8 323.5L518.7 325.3L518.9 321.5zM528.1 323.7L524.9 325.4L525.2 321.6zM534.3 323.9L531.1 325.4L531.6 321.6zM540.5 324L537.3 325.4L537.9 321.7zM546.7 324.2L543.4 325.4L544.1 321.7zM552.8 324.3L549.4 325.4L550.3 321.7zM558.9 324.4L555.5 325.4L556.5 321.8zM564.9 324.5L561.5 325.4L562.6 321.8zM571 324.6L567.5 325.3L568.8 321.8zM577 324.6L573.5 325.3L574.9 321.7zM583 324.6L579.5 325.2L581 321.7zM451.1 330.2L448 331.8L448.3 328zM457.4 330L454.3 331.8L454.5 328zM463.6 329.9L460.7 331.8L460.6 328zM469.8 329.7L466.9 331.7L466.8 327.9zM476 329.6L473.1 331.7L472.9 327.9zM482.2 329.6L479.4 331.7L479.1 327.9zM488.4 329.5L485.6 331.7L485.3 327.9zM494.6 329.5L491.8 331.6L491.5 327.9zM500.9 329.5L498 331.6L497.7 327.8zM507.1 329.6L504.2 331.6L504 327.8zM515 329.6L512 331.5L512 327.7zM521.3 329.8L518.2 331.6L518.4 327.8zM527.6 329.9L524.4 331.6L524.7 327.8zM533.9 330.1L530.6 331.6L531.1 327.9zM540.1 330.3L536.9 331.7L537.5 327.9zM546.5 330.4L543.1 331.7L543.9 328zM552.8 330.6L549.4 331.7L550.3 328.1zM559.1 330.8L555.7 331.8L556.7 328.1zM565.4 331L561.9 331.8L563.1 328.2zM571.4 331.1L567.9 331.8L569.2 328.2zM577.4 331.1L573.9 331.7L575.4 328.2zM583.4 331.2L579.9 331.6L581.5 328.2zM589.4 331.2L585.9 331.5L587.6 328.1zM595.4 331.1L591.8 331.4L593.6 328.1zM457.3 336.3L454.2 338.1L454.3 334.3zM463.4 336.1L460.5 338L460.4 334.2zM469.6 336L466.7 338L466.5 334.2zM475.8 335.9L472.9 338L472.7 334.2zM482 335.8L479.2 338L478.8 334.2zM488.2 335.8L485.4 338L485 334.2zM494.4 335.7L491.6 337.9L491.2 334.2zM500.6 335.8L497.8 337.9L497.5 334.1zM506.9 335.8L504 337.9L503.8 334.1zM514.5 335.9L511.5 337.8L511.5 334zM520.8 336.1L517.7 337.8L517.9 334zM527.1 336.2L523.9 337.8L524.2 334.1zM533.4 336.3L530.1 337.8L530.6 334.1zM539.7 336.5L536.4 337.9L537 334.1zM546 336.7L542.6 337.9L543.4 334.2zM552.3 336.8L548.9 337.9L549.9 334.2zM558.6 337L555.2 338L556.3 334.3zM565 337.2L561.5 338L562.8 334.4zM571.3 337.4L567.8 338.1L569.2 334.5zM577.7 337.6L574.2 338.2L575.7 334.7zM583.8 337.7L580.3 338.1L581.9 334.7zM589.8 337.7L586.2 338L588 334.6zM595.7 337.7L592.2 337.9L594 334.6zM481.8 342.1L478.9 344.3L478.6 340.5zM488 342.1L485.2 344.3L484.8 340.5zM494.2 342L491.4 344.3L491 340.5zM500.4 342L497.6 344.2L497.2 340.4zM506.6 342.1L503.7 344.2L503.5 340.4zM514 342.2L511 344.1L511 340.3zM520.3 342.3L517.2 344.1L517.4 340.3zM526.6 342.4L523.4 344.1L523.7 340.3zM532.9 342.6L529.6 344.1L530.1 340.3zM539.2 342.7L535.9 344.1L536.5 340.3zM545.5 342.9L542.1 344.1L543 340.4zM551.8 343L548.4 344.1L549.4 340.4zM558.2 343.2L554.7 344.1L555.9 340.5zM564.5 343.4L561 344.1L562.3 340.6zM570.9 343.6L567.4 344.2L568.8 340.7zM577.2 343.8L573.7 344.3L575.3 340.8zM583.6 344L580.1 344.3L581.8 340.9zM590 344.2L586.4 344.5L588.2 341.1zM596.1 344.3L592.5 344.4L594.4 341.1zM602 344.2L598.5 344.3L600.5 341zM608 344.2L604.4 344.1L606.5 340.9zM487.7 348.4L484.9 350.6L484.5 346.8zM493.9 348.3L491.2 350.6L490.7 346.8zM500.2 348.3L497.4 350.5L497 346.7zM506.4 348.4L503.5 350.5L503.3 346.7zM518.9 348.5L515.8 350.3L516 346.5zM525.2 348.6L522 350.2L522.3 346.4zM531.4 348.7L528.2 350.1L528.7 346.4zM538.7 348.9L535.4 350.3L536.1 346.5zM545 349.1L541.6 350.2L542.5 346.5zM551.3 349.2L547.9 350.2L549 346.6zM557.7 349.4L554.2 350.2L555.4 346.6zM564 349.5L560.6 350.3L561.9 346.7zM570.4 349.7L566.9 350.3L568.4 346.8zM576.8 349.9L573.3 350.4L574.9 346.9zM583.2 350.1L579.6 350.4L581.4 347.1zM589.5 350.4L586 350.5L587.9 347.2zM595.9 350.6L592.4 350.6L594.4 347.4zM602.3 350.8L598.8 350.8L600.9 347.6zM608.2 350.8L604.7 350.6L606.9 347.5zM614.2 350.7L610.6 350.4L612.9 347.4zM620.1 350.6L616.6 350.2L618.9 347.2zM556.3 355.2L552.9 356L554.1 352.5zM563.6 355.7L560.1 356.4L561.5 352.8zM570 355.9L566.4 356.4L568 352.9zM576.3 356.1L572.8 356.4L574.5 353zM582.7 356.3L579.2 356.5L581 353.2zM589.1 356.5L585.6 356.6L587.5 353.3zM595.5 356.7L592 356.7L594 353.5zM601.9 357L598.4 356.8L600.5 353.7zM608.3 357.3L604.8 357L607 353.9zM614.4 357.3L610.9 356.9L613.2 353.9zM620.3 357.2L616.8 356.7L619.3 353.8zM626.3 357L622.8 356.4L625.3 353.6zM568.7 361.6L565.2 362.1L566.8 358.6zM575.9 362.2L572.4 362.5L574.1 359.1zM582.3 362.4L578.8 362.6L580.7 359.3zM588.7 362.6L585.2 362.6L587.2 359.4zM595.1 362.9L591.6 362.8L593.7 359.6zM601.5 363.1L598 362.9L600.2 359.8zM607.9 363.4L604.4 363L606.7 360zM614.3 363.7L610.8 363.2L613.3 360.3zM620.5 363.8L617 363.2L619.6 360.4zM626.5 363.6L623 363L625.6 360.2zM632.4 363.5L628.9 362.7L631.6 360zM638.3 363.2L634.8 362.4L637.6 359.8zM581.1 368.1L577.6 368.1L579.5 364.9zM588.3 368.7L584.8 368.7L586.9 365.5zM594.7 369L591.2 368.8L593.4 365.7zM601.1 369.2L597.6 368.9L599.9 365.9zM607.6 369.5L604 369.1L606.5 366.1zM614 369.8L610.5 369.2L613 366.4zM620.4 370.1L616.9 369.4L619.5 366.7zM626.6 370.3L623.2 369.5L625.8 366.8zM632.5 370.1L629.1 369.2L631.8 366.6zM638.5 369.8L635 368.9L637.8 366.3zM594.4 375.1L590.8 374.8L593.1 371.8zM600.8 375.4L597.2 374.9L599.7 372zM607.2 375.6L603.7 375.1L606.2 372.2zM613.6 375.9L610.1 375.3L612.7 372.5zM620 376.2L616.6 375.5L619.2 372.8zM626.4 376.5L623 375.7L625.7 373.1zM632.7 376.7L629.2 375.7L632.1 373.2zM638.6 376.5L635.2 375.4L638.1 372.9zM644.5 376.2L641.1 375.1L644.1 372.7zM650.4 375.9L647.1 374.7L650.1 372.4zM656.4 375.6L653.1 374.4L656.1 372.1zM600.4 381.5L596.9 380.9L599.4 378.1zM606.8 381.7L603.4 381.1L605.9 378.3zM613.3 382L609.8 381.3L612.5 378.6zM619.7 382.3L616.2 381.5L619 378.9zM626.1 382.7L622.7 381.7L625.5 379.2zM632.5 383L629.1 381.9L632 379.5zM638.7 383.1L635.3 381.9L638.3 379.5zM644.6 382.8L641.3 381.6L644.3 379.3zM650.5 382.5L647.2 381.2L650.3 379zM656.5 382.2L653.2 380.8L656.3 378.6zM605.9 387.2L602.4 386.4L605.1 383.7zM612.9 388.1L609.5 387.3L612.3 384.7zM619.4 388.5L615.9 387.5L618.8 384.9zM625.8 388.8L622.4 387.7L625.3 385.3zM632.2 389.1L628.8 388L631.8 385.6zM638.6 389.5L635.3 388.2L638.3 385.9zM644.7 389.4L641.4 388.1L644.5 385.9zM650.6 389.1L647.3 387.7L650.5 385.6zM656.5 388.8L653.3 387.3L656.5 385.2zM612 393.5L608.6 392.5L611.4 390zM619.1 394.6L615.7 393.5L618.6 391zM625.8 395.3L622.4 394.1L625.4 391.7zM631.9 395.3L628.6 394L631.7 391.8zM638.3 395.6L635 394.3L638.1 392.1zM644.7 396L641.4 394.6L644.6 392.4zM650.6 395.7L647.4 394.2L650.6 392.1zM656.6 395.4L653.4 393.9L656.7 391.9zM618.8 400.7L615.4 399.5L618.4 397.1zM625.7 401.7L622.4 400.3L625.4 398.1zM631.8 401.7L628.5 400.3L631.7 398.1zM638 401.7L634.8 400.3L637.9 398.2zM644.4 402.1L641.2 400.6L644.4 398.6zM650.6 402.3L647.5 400.7L650.7 398.7zM656.6 401.9L653.5 400.3L656.8 398.4zM625.5 408L622.3 406.6L625.4 404.5zM631.7 408.1L628.5 406.5L631.7 404.5zM637.9 408.1L634.7 406.5L637.9 404.5zM644.1 408.3L641 406.6L644.3 404.7zM650.5 408.7L647.4 407L650.7 405.1zM656.6 408.5L653.5 406.7L656.9 404.9zM669.1 404.8L665.7 406L666.6 402.3zM675.3 404.8L672 405.9L672.9 402.2zM625.4 414.4L622.2 412.8L625.4 410.8zM631.5 414.4L628.4 412.8L631.7 410.9zM637.7 414.4L634.6 412.7L637.9 410.9zM643.9 414.4L640.8 412.7L644.2 410.9zM650.2 414.8L647.2 413L650.6 411.3zM656.5 415L653.5 413.2L656.9 411.5zM669.1 411.1L665.7 412.2L666.6 408.6zM675.3 411.1L672 412.2L672.9 408.5zM625.2 420.8L622.1 419.1L625.4 417.2zM631.4 420.8L628.3 419L631.7 417.2zM637.6 420.8L634.5 419L637.9 417.3zM643.7 420.8L640.7 418.9L644.2 417.3zM650 421L647 419L650.5 417.5zM656.4 421.4L653.4 419.4L656.9 417.9zM662.5 421.2L659.5 419.1L663 417.7zM667.7 418.9L664.9 416.9L668.4 415.5zM674 418.9L671.1 416.8L674.6 415.4zM625.1 427.1L622 425.3L625.4 423.6zM631.2 427.1L628.2 425.3L631.7 423.6zM637.4 427.1L634.4 425.2L637.9 423.6zM643.6 427.2L640.7 425.2L644.1 423.6zM649.8 427.2L646.9 425.1L650.4 423.7zM656.1 427.6L653.3 425.5L656.8 424.1zM662.4 427.7L659.5 425.6L663.1 424.2zM667.7 425.3L664.9 423.1L668.4 421.8zM673.9 425.2L671.1 423L674.7 421.8zM624.9 433.5L621.9 431.5L625.4 430zM631.1 433.5L628.1 431.5L631.6 430zM637.2 433.5L634.4 431.4L637.9 430zM643.4 433.5L640.6 431.4L644.1 430zM649.6 433.5L646.8 431.3L650.4 430zM655.9 433.7L653.1 431.5L656.7 430.3zM662.2 434.2L659.5 431.9L663.1 430.7zM667.6 431.6L664.9 429.3L668.5 428.1zM673.8 431.5L671.1 429.2L674.7 428.1zM624.7 439.9L621.8 437.8L625.4 436.4zM630.9 439.9L628.1 437.7L631.6 436.4zM637.1 439.8L634.3 437.7L637.9 436.4zM643.3 439.8L640.5 437.6L644.1 436.4zM649.5 439.8L646.7 437.6L650.3 436.4zM655.7 439.9L653 437.6L656.6 436.5zM662 440.4L659.4 438L663 437zM667.5 437.9L664.9 435.5L668.5 434.5zM673.7 437.8L671.1 435.4L674.8 434.4zM624.5 446.2L621.7 444L625.3 442.8zM630.7 446.2L628 443.9L631.6 442.8zM636.9 446.2L634.2 443.9L637.8 442.8zM643.1 446.2L640.4 443.8L644.1 442.8zM649.3 446.2L646.7 443.8L650.3 442.8zM655.5 446.1L652.9 443.7L656.6 442.8zM661.8 446.6L659.2 444.1L662.9 443.2zM667.4 444.2L664.9 441.7L668.6 440.8zM673.7 444.1L671.1 441.7L674.8 440.8zM630.5 452.5L627.9 450.1L631.6 449.1zM636.7 452.5L634.1 450.1L637.8 449.1zM642.9 452.5L640.3 450L644 449.1zM649.1 452.5L646.6 450L650.3 449.1zM655.3 452.5L652.8 449.9L656.5 449.1zM661.6 452.8L659.1 450.2L662.8 449.5zM667.3 450.5L664.9 447.9L668.6 447.1zM673.6 450.4L671.1 447.9L674.9 447.1zM630.3 458.9L627.8 456.3L631.5 455.5zM636.5 458.8L634 456.3L637.8 455.5zM642.7 458.8L640.3 456.2L644 455.5zM648.9 458.8L646.5 456.2L650.2 455.5zM655.1 458.8L652.7 456.2L656.5 455.5zM661.4 459L659 456.4L662.8 455.7zM667.3 456.8L664.9 454.1L668.7 453.5zM673.5 456.7L671.2 454.1L674.9 453.5z" fill="#0e0e0e"/>
<path d="M896.1 82.8l4 0.4M883.6 89.1l4 0.4M889.9 89.1l4 0.4M902.4 89l4 0.4M752.4 96l4 0.4M764.9 95.9l4 0.4M771.1 95.9l4 0.4M783.6 95.8l4 0.4M889.9 95.4l4 0.4M896.1 95.3l4 0.4M746.1 102.3l4 0.4M758.6 102.2l4 0.4M771.1 102.2l4 0.4M777.4 102.2l4 0.4M789.9 102.1l4 0.4M802.4 102l4 0.4M808.6 102l4 0.4M821.1 102l4 0.4M883.6 101.7l4 0.4M896.1 101.6l4 0.4M902.4 101.6l4 0.4M746.1 108.6l4 0.4M752.4 108.5l4 0.4M764.9 108.5l4 0.4M777.4 108.4l4 0.4M783.6 108.4l4 0.4M796.1 108.3l4 0.4M808.6 108.3l4 0.4M814.9 108.3l4 0.4M889.9 107.9l4 0.4M902.4 107.9l4 0.4M677.4 115.2l4 0.4M689.9 115.1l4 0.4M696.1 115.1l4 0.4M752.4 114.8l4 0.4M758.6 114.8l4 0.4M771.1 114.7l4 0.4M783.6 114.7l4 0.4M789.9 114.7l4 0.4M802.4 114.6l4 0.4M815.8 115.5l2.1 -1.6M822.1 115.6l2 -1.7M896.1 114.2l4 0.4M678.1 121.8l2.6 -0.2M683.6 121.7l4 -0.2M690.6 121.6l2.6 -0.1M696.8 121.5l2.6 0.2M758.6 121.1l4 0.4M764.9 121l4 0.4M777.4 121l4 0.4M789.9 120.9l4 0.4M796.1 120.9l4 0.4M808.6 120.9l4 0.4M815.8 121.8l2.1 -1.6M820.6 122.9l5 -3.8M889.9 120.5l4 0.4M902.4 120.4l4 0.4M659.5 128.6l2.3 -1.3M665.1 128.9l3.6 -1.8M671.2 128.6l3.8 -1.3M676.3 128.3l6.3 -0.8M682.5 128.1l6.3 -0.4M688.7 127.9l6.3 -0.1M695 127.5l6.3 0.7M702.4 127.4l3.9 0.8M708.7 127.4l3.9 0.9M715.6 127.5l2.6 0.6M721.9 127.4l2.6 0.6M728.1 127.4l2.6 0.5M764.9 127.3l4 0.4M771.1 127.3l4 0.4M783.6 127.2l4 0.4M796.1 127.2l4 0.4M803.2 128l2.3 -1.3M808.9 128.4l3.5 -2.1M814.3 129.1l5.2 -3.6M820.6 129.2l5.1 -3.8M653.3 135l2.3 -1.4M657.9 135.8l5.5 -3.1M664.1 135.8l5.6 -3M670.2 135.5l5.8 -2.4M676.3 134.8l6.2 -1.2M682.5 134.4l6.3 -0.4M688.7 134.1l6.3 0.1M695 133.7l6.3 0.9M701.3 133.4l6.2 1.3M707.6 133.4l6.2 1.4M713.8 133.4l6.2 1.3M720.1 133.3l6.2 1.3M726.3 133.3l6.2 1.3M733.7 133.6l3.9 0.8M739.9 133.5l3.9 0.8M746.9 133.6l2.6 0.5M753.1 133.6l2.6 0.5M759.4 133.6l2.6 0.5M790.7 134.3l2.4 -1.2M796.4 134.6l3.6 -1.9M801.6 135.1l5.6 -2.9M807.9 135.1l5.5 -3.1M814.2 135.3l5.3 -3.4M820.6 135.4l5.1 -3.7M646.5 141.7l3.3 -2.2M651.8 142.3l5.3 -3.5M657.9 142.2l5.4 -3.2M664.1 142.1l5.5 -3.1M670.3 141.9l5.7 -2.7M677.5 141l3.9 -1M684.3 140.6l2.6 -0.2M689.9 140.3l4 0.2M696.2 140.1l4 0.7M701.3 139.7l6.2 1.4M707.6 139.7l6.2 1.3M713.8 139.6l6.2 1.3M720.1 139.6l6.2 1.3M726.3 139.6l6.2 1.3M732.5 139.6l6.2 1.2M738.8 139.6l6.2 1.2M745 139.6l6.2 1.2M751.3 139.5l6.2 1.2M757.5 139.5l6.2 1.2M764.9 139.8l4 0.7M771.1 140l4 0.1M778.1 140.2l2.6 -0.3M783.7 140.6l3.9 -1.1M789 141.3l5.8 -2.6M795.3 141.4l5.6 -2.9M801.6 141.4l5.6 -2.9M807.9 141.4l5.6 -3M815.2 140.9l3.5 -2M822.1 140.6l2.2 -1.5M634.5 147.6l2.3 -1.3M640.2 148l3.4 -2.1M645.5 148.6l5.3 -3.4M651.8 148.6l5.2 -3.5M658 148.6l5.3 -3.5M665.2 147.8l3.5 -2M672 147.4l2.3 -1.2M709.4 146.3l2.6 0.6M715.6 146.3l2.6 0.6M721.2 146.2l3.9 0.8M727.4 146.1l3.9 0.8M732.5 145.9l6.2 1.2M738.8 145.9l6.2 1.2M745 145.8l6.2 1.2M751.3 145.8l6.2 1.2M757.5 145.8l6.2 1.2M763.8 145.9l6.3 0.9M770 146.4l6.3 -0M776.3 146.7l6.3 -0.8M782.6 146.9l6.2 -1.3M788.9 147.4l5.9 -2.2M795.3 147.6l5.7 -2.8M802.6 147.1l3.6 -1.9M809.5 146.8l2.3 -1.2M615.7 153.9l2.4 -1.1M621.9 153.8l2.4 -1.1M627.6 154.1l3.6 -1.7M632.9 154.7l5.6 -3M639.2 154.8l5.4 -3.2M645.5 154.8l5.4 -3.3M651.7 154.9l5.3 -3.4M659.6 153.9l2.2 -1.5M734.4 152.5l2.6 0.5M740.6 152.5l2.6 0.5M746.9 152.5l2.6 0.5M752.4 152.3l3.9 0.8M758.7 152.3l4 0.8M763.8 152.3l6.3 0.8M770 152.7l6.3 -0.3M776.3 153l6.3 -0.8M782.5 153l6.3 -1M790 153.1l3.9 -1.1M796.9 153.1l2.4 -1.1M603.2 160.2l2.4 -1.1M608.8 160.5l3.7 -1.7M614 160.9l5.8 -2.6M620.3 160.9l5.8 -2.6M626.5 160.9l5.8 -2.6M632.8 160.9l5.7 -2.8M639.2 161.1l5.5 -3.1M646.4 160.5l3.4 -2.1M653.3 160.1l2.3 -1.4M765.6 158.8l2.6 0.2M771.8 159l2.6 -0.2M778.1 159l2.6 -0.4M784.3 159l2.6 -0.4M590.7 166.6l2.4 -1.1M596.3 166.8l3.6 -1.7M601.5 167.3l5.7 -2.7M607.8 167.2l5.8 -2.6M614 167.2l5.8 -2.6M620.3 167.1l5.8 -2.6M626.5 167.1l5.8 -2.6M633.8 166.7l3.6 -1.7M640.7 166.4l2.3 -1.3M578.2 172.9l2.4 -1.2M583.8 173.2l3.6 -1.8M589 173.6l5.7 -2.7M595.3 173.6l5.7 -2.7M601.5 173.6l5.7 -2.7M607.8 173.5l5.7 -2.6M614 173.5l5.8 -2.6M621.3 173l3.7 -1.6M628.2 172.6l2.4 -1.1M565.7 179.2l2.5 -1M571.3 179.5l3.6 -1.7M576.6 180l5.7 -2.8M582.8 180l5.7 -2.8M589.1 179.9l5.7 -2.8M595.3 179.9l5.7 -2.7M602.6 179.4l3.6 -1.7M608.8 179.3l3.6 -1.7M615.7 179l2.4 -1.1M484 185.8l3.3 -1M490.2 185.6l3.4 -0.6M496.4 185.4l3.4 -0.3M502.7 185.3l3.4 -0.1M508.9 185.2l3.4 -0.1M515.2 185.2l3.4 -0M521.4 185.2l3.4 -0M527.7 185.1l3.4 -0M533.9 185.1l3.4 -0M540.2 185.1l3.4 -0.1M546.4 185.2l3.4 -0.3M552.4 185.4l4 -0.8M558.7 185.5l3.9 -1M563.9 186l6 -2M570.3 186.2l5.8 -2.6M576.6 186.3l5.7 -2.8M582.8 186.3l5.7 -2.8M590.1 185.7l3.6 -1.8M597 185.4l2.4 -1.1M471.9 192.8l2.5 -2.3M476.7 193.3l5.4 -3.4M482.7 192.7l5.9 -2.2M488.8 192.2l6.2 -1.3M495 191.8l6.3 -0.6M501.2 191.6l6.3 -0.2M507.5 191.5l6.3 -0.1M513.7 191.5l6.3 -0.1M520 191.5l6.3 -0.1M526.2 191.4l6.3 -0.1M532.5 191.4l6.3 -0.1M538.7 191.4l6.3 -0.2M545 191.6l6.3 -0.5M551.3 191.9l6.2 -1.2M557.6 192l6.1 -1.5M563.9 192.1l6.1 -1.8M570.2 192.4l5.9 -2.3M577.6 192l3.6 -1.7M584.5 191.7l2.4 -1.2M466.1 199.5l1.7 -3M471.3 200.5l3.8 -5.1M477 200l4.8 -4.1M482.8 199.3l5.7 -2.8M488.8 198.6l6.2 -1.5M495 198.1l6.3 -0.6M501.2 197.9l6.3 -0.2M507.5 197.8l6.3 -0.1M513.7 197.8l6.3 -0.1M520 197.7l6.3 -0.1M526.2 197.7l6.3 -0.1M532.5 197.7l6.3 -0.1M538.7 197.7l6.3 -0.2M545 197.9l6.3 -0.5M551.3 198.2l6.2 -1.2M557.6 198.3l6.1 -1.5M565 198l3.9 -1M571.9 197.9l2.5 -0.8M466.2 205.8l1.4 -3.2M471.7 207l3 -5.6M477.5 206.7l3.8 -5.1M484.3 205.2l2.8 -2M553.1 204.1l2.6 -0.5M559.4 204.1l2.6 -0.6M466.5 212.2l0.8 -3.3M472.3 213.5l1.7 -6.1M478.4 213.5l2.1 -6M466.8 218.5l0.2 -3.4M472.9 219.9l0.4 -6.3M479.1 219.9l0.5 -6.3M466.9 224.8l0 -3.4M473.1 226.2l0 -6.3M479.4 226.2l0 -6.3M466.9 231.1l0 -3.4M473.1 232.5l0 -6.3M479.4 232.5l0 -6.3M466.9 237.4l0 -3.4M473.1 238.8l0 -6.3M479.4 238.7l0 -6.3M466.9 243.6l0 -3.4M473.1 245.1l0 -6.3M479.4 245l0 -6.3M466.9 249.9l0 -3.4M473.1 251.3l0 -6.3M479.4 251.3l0 -6.3M479.4 257.6l0 -6.3" stroke="#141414" stroke-width="1" fill="none"/>
<path d="M971.8 1.9l2.8 -1.8M965.5 8.2l2.8 -1.7M971.8 8.2l2.8 -1.7M978 8.1l2.8 -1.8M983.3 8.7l4.7 -2.9M989.6 8.7l4.6 -2.9M995.8 8.6l4.6 -2.9M1002.1 8.6l4.6 -2.9M1008.3 8.6l4.6 -3M965.5 14.4l2.8 -1.7M970.8 15l4.7 -2.9M977.1 15l4.7 -2.9M983.3 15l4.7 -2.9M989.6 14.9l4.7 -2.9M995.8 14.9l4.6 -2.9M1002.1 14.9l4.6 -2.9M1009.3 14.3l2.8 -1.8M959.2 20.7l2.8 -1.7M964.5 21.3l4.7 -2.8M970.8 21.3l4.7 -2.9M977.1 21.3l4.7 -2.9M983.3 21.2l4.7 -2.9M989.6 21.2l4.7 -2.9M996.8 20.6l2.8 -1.8M1003 20.6l2.8 -1.8M958.3 27.6l4.7 -2.8M964.5 27.5l4.7 -2.8M970.8 27.5l4.7 -2.8M977.1 27.5l4.7 -2.9M983.3 27.5l4.7 -2.9M990.5 26.9l2.8 -1.8M996.8 26.9l2.8 -1.8M945.7 33.8l4.8 -2.7M952 33.8l4.8 -2.7M958.3 33.8l4.8 -2.8M964.5 33.8l4.7 -2.8M970.8 33.8l4.7 -2.8M978 33.2l2.8 -1.7M984.2 33.2l2.8 -1.7M933.2 40.2l4.8 -2.6M939.5 40.1l4.8 -2.6M945.7 40.1l4.8 -2.7M952 40.1l4.8 -2.7M958.3 40.1l4.8 -2.7M965.5 39.5l2.8 -1.7M920.7 46.5l4.8 -2.6M927 46.5l4.8 -2.6M933.2 46.4l4.8 -2.6M939.5 46.4l4.8 -2.6M945.7 46.4l4.8 -2.7M953 45.8l2.9 -1.6M908.2 52.8l4.9 -2.6M914.5 52.8l4.8 -2.6M920.7 52.8l4.8 -2.6M927 52.7l4.8 -2.6M933.2 52.7l4.8 -2.6M939.5 52.7l4.8 -2.6M895.8 59.3l4.7 -2.8M902 59.2l4.8 -2.7M908.2 59.1l4.8 -2.6M914.5 59.1l4.8 -2.6M920.7 59.1l4.8 -2.6M927 59l4.8 -2.6M883.3 65.7l4.6 -3M889.6 65.6l4.7 -2.9M895.8 65.6l4.7 -2.9M902 65.5l4.8 -2.8M908.2 65.4l4.8 -2.6M914.5 65.4l4.9 -2.6M877.2 72.1l4.4 -3.3M883.4 72l4.5 -3.1M889.6 71.9l4.6 -3M895.8 71.9l4.7 -2.9M902 71.8l4.7 -2.8M864.7 78.5l4.3 -3.4M871 78.5l4.3 -3.4M877.2 78.5l4.4 -3.4M883.4 78.4l4.5 -3.2M889.6 78.3l4.6 -3M858.5 84.9l4.2 -3.5M864.8 84.8l4.3 -3.5M871 84.8l4.3 -3.4M877.2 84.8l4.3 -3.4M883.5 84.7l4.4 -3.3M852.3 91.3l4.1 -3.6M858.6 91.2l4.2 -3.6M864.8 91.2l4.2 -3.5M871 91.1l4.3 -3.4M846.1 97.6l4.1 -3.7M852.3 97.6l4.1 -3.7M858.6 97.5l4.1 -3.6M864.8 97.5l4.2 -3.6M839.9 104l4 -3.8M846.1 103.9l4.1 -3.7M852.4 103.9l4.1 -3.7M828.2 109.5l2.4 -2.3M833.7 110.3l4 -3.8M839.9 110.3l4 -3.8M846.2 110.2l4 -3.8M827.4 116.5l4.1 -3.7M833.7 116.6l4 -3.8M839.9 116.5l4 -3.8M827.3 122.7l4.2 -3.5M833.6 122.8l4.1 -3.7M827.2 128.9l4.4 -3.3" stroke="#111" stroke-width="1.5" fill="none"/>
</svg></div>
<!-- temporal controller -->
<div class="t" style="left:186px;top:533px;font-size:9.2px;color:#2e4f80">Temporal Controller</div>
<svg class="a" style="left:1184px;top:533px" width="16" height="9"><rect x=".5" y=".5" width="6" height="7" fill="none" stroke="#555" stroke-width=".8"/><path d="M2 6l3-3" stroke="#555"/><rect x="8.5" y=".5" width="6" height="7" fill="none" stroke="#555" stroke-width=".8"/><path d="M9.5 1.5l4 5M13.5 1.5l-4 5" stroke="#444" stroke-width=".8"/></svg>
<svg class="a" style="left:1187px;top:546px" width="11" height="11"><circle cx="5.5" cy="5.5" r="4" fill="#f0c830" stroke="#d8a010" stroke-width="1.5" stroke-dasharray="1.5 1"/><circle cx="5.5" cy="5.5" r="1.6" fill="#fff8d0"/></svg>
<div class="t" style="left:184px;top:549px;font-size:9.2px;color:#222">Range</div>
<div class="inp" style="left:213px;top:544px;width:94px;height:16px"><div class="t" style="left:4px;top:3px;font-size:9.2px;color:#333">01/01/2000 04:00</div><div class="spin" style="left:83px;width:10px"><svg class="a" style="left:2px;top:2px" width="6" height="11"><path d="M1 3l2-2 2 2M1 8l2 2 2-2" fill="none" stroke="#888" stroke-width=".8"/></svg></div></div>
<div class="t" style="left:310px;top:549px;font-size:9.2px;color:#222">to</div>
<div class="inp" style="left:325px;top:544px;width:94px;height:16px"><div class="t" style="left:4px;top:3px;font-size:9.2px;color:#333">04/01/2000 04:00</div><div class="spin" style="left:84px;width:10px"><svg class="a" style="left:2px;top:2px" width="6" height="11"><path d="M1 3l2-2 2 2M1 8l2 2 2-2" fill="none" stroke="#888" stroke-width=".8"/></svg></div></div>
<svg class="a" style="left:424px;top:546px" width="12" height="12" viewBox="0 0 15 15"><path d="M2 7a5.5 5.5 0 019.5-3.5l1.5-1.5v5h-5l1.8-1.8a3.5 3.5 0 00-5.8 1.8z M13 8a5.5 5.5 0 01-9.5 3.5l-1.5 1.5v-5h5l-1.8 1.8a3.5 3.5 0 005.8-1.8z" fill="#3f86c8"/></svg>
<div class="t" style="left:467px;top:549px;font-size:9.2px;color:#222">Step</div>
<div class="inp" style="left:489px;top:544px;width:82px;height:16px"><div class="t" style="left:4px;top:3px;font-size:9.2px;color:#333">2,000</div><svg class="a" style="left:56px;top:4px" width="8" height="7"><path d="M2 0h6v7h-6l-2-3.5z" fill="#8a8a8c"/><path d="M3.5 2l3 3M6.5 2l-3 3" stroke="#fff" stroke-width=".8"/></svg><div class="spin" style="left:72px;width:9px"><svg class="a" style="left:1px;top:2px" width="6" height="11"><path d="M1 3l2-2 2 2M1 8l2 2 2-2" fill="none" stroke="#777" stroke-width=".9"/></svg></div></div>
<div class="inp" style="left:574px;top:544px;width:70px;height:16px;background:linear-gradient(#fdfdfd,#f1f1f3)"><div class="t" style="left:2px;top:3px;font-size:9.2px;color:#333">hours</div><svg class="a" style="left:61px;top:6px" width="6" height="4"><path d="M0 0h6l-3 3.5z" fill="#666"/></svg></div>
<div class="btn" style="left:184px"></div><div class="btn" style="left:206px"></div><div class="btn" style="left:228px"></div><div class="btn" style="left:250px"></div><div class="btn" style="left:272px;background:#dadadc;border-color:#c4c4c6"></div><div class="btn" style="left:294px"></div><div class="btn" style="left:315px"></div>
<svg class="a" style="left:184px;top:567px" width="150" height="13"><g fill="#111">
<path d="M4 6.5l4-3v6zM8 6.5l4-3v6z"/>
<path d="M26 3h1.5v7h-1.5zM27.5 6.5l5-3.5v7z"/>
<path d="M48 6.5l5-3.5v7z"/>
<path d="M70 3h2v7h-2zM74 3h2v7h-2z"/>
<path d="M92 3l5 3.5-5 3.5z"/>
<path d="M114 3l5 3.5-5 3.5zM119 3h1.5v7h-1.5z"/>
<path d="M136 3.5l4 3-4 3zM140 3.5l4 3-4 3z"/>
</g></svg>
<div class="a" style="left:337px;top:569px;width:9px;height:9px;background:#fbfbfb;border:1px solid #c4c4c6"></div>
<div class="t" style="left:349px;top:569px;font-size:9.2px;color:#333">Loop</div>
<div class="a" style="left:377px;top:573px;width:115px;height:1px;background:#6e9cc8"></div>
<div class="a" style="left:497px;top:573px;width:703px;height:2px;background:#c0c0c2"></div>
<div class="a" style="left:491px;top:569px;width:8px;height:8px;background:#fafafa;border:1px solid #bdbdbf;border-radius:2px"></div>
<div class="t" style="left:183px;top:588px;font-size:9.2px;color:#222">01/01/2000 14:00 to 01/01/2000 16:00</div>
<svg class="a" style="left:689px;top:527px" width="11" height="2"><path d="M0.5 1h1M2.5 1h1M4.5 1h1M6.5 1h1M8.5 1h1" stroke="#999" stroke-width="1.2"/></svg>
<!-- status bar -->
<div class="a" style="left:0;top:605px;width:1200px;height:21px;background:#efeff1"></div>
<div class="a" style="left:0;top:625px;width:1200px;height:1px;background:#b8b8ba"></div>
<div class="inp" style="left:2px;top:607px;width:164px;height:17px;border-color:#b8b8ba;border-radius:1px"><svg class="a" style="left:5px;top:4px" width="9" height="9"><circle cx="3.5" cy="3.5" r="2.7" fill="none" stroke="#777" stroke-width="1"/><path d="M5.5 5.5l3 3" stroke="#777" stroke-width="1.1"/></svg><div class="t" style="left:18px;top:4px;font-size:9.2px;color:#999">Type to locate (Ctrl+K)</div></div>
<div class="t" style="left:676px;top:613px;font-size:7.2px;color:#2a3a5a">Coordinate</div>
<div class="inp" style="left:714px;top:609px;width:46px;height:14px;border-color:#e2e2e4"><div class="t" style="left:3px;top:3px;font-size:7.5px;color:#3a4a6a">6058.15287</div></div>
<svg class="a" style="left:763px;top:611px" width="10" height="10"><path d="M2 1l4 3-2 1 4 4-2 0-4-4-1 2z" fill="#222"/><circle cx="7" cy="3" r="2" fill="none" stroke="#222"/></svg>
<div class="t" style="left:781px;top:613px;font-size:7.2px;color:#2a3a5a">Scale</div>
<div class="inp" style="left:800px;top:607px;width:60px;height:17px;border-color:#c8c8ca"><div class="t" style="left:2px;top:4px;font-size:7.5px;color:#3a4a6a">1:6274</div><div class="a" style="left:44px;top:0;width:15px;height:15px;background:#f4f4f6"></div><svg class="a" style="left:50px;top:7px" width="6" height="4"><path d="M0 0h5l-2.5 3z" fill="#777"/></svg></div>
<svg class="a" style="left:868px;top:611px" width="10" height="11"><path d="M2.5 5v-2a2.5 2.5 0 015 0v2" fill="none" stroke="#555" stroke-width="1.3"/><rect x="1" y="5" width="8" height="6" rx="1" fill="#555"/></svg>
<div class="t" style="left:882px;top:613px;font-size:7.2px;color:#2a3a5a">Magnifier</div>
<div class="inp" style="left:915px;top:608px;width:59px;height:16px;border-color:#d6d6d8"><div class="t" style="left:3px;top:4px;font-size:7.5px;color:#3a4a6a">100%</div><div class="spin" style="left:50px;width:8px"><svg class="a" style="left:1px;top:2px" width="6" height="11"><path d="M1 3l2-2 2 2M1 8l2 2 2-2" fill="none" stroke="#777" stroke-width=".9"/></svg></div></div>
<div class="t" style="left:981px;top:613px;font-size:7.2px;color:#2a3a5a">Rotation</div>
<div class="inp" style="left:1014px;top:608px;width:58px;height:16px;border-color:#d6d6d8"><div class="t" style="left:3px;top:4px;font-size:7.5px;color:#3a4a6a">0.0 °</div><div class="spin" style="left:48px;width:9px"><svg class="a" style="left:1px;top:2px" width="6" height="11"><path d="M1 3l2-2 2 2M1 8l2 2 2-2" fill="none" stroke="#777" stroke-width=".9"/></svg></div></div>
<div class="a" style="left:1075px;top:612px;width:9px;height:9px;background:#fff;border:1px solid #bbb"></div>
<svg class="a" style="left:1076px;top:613px" width="8" height="8"><path d="M1 4l2 2.5 4-5.5" fill="none" stroke="#111" stroke-width="1.2"/></svg>
<div class="t" style="left:1087px;top:613px;font-size:7.2px;color:#2a3a5a">Render</div>
<svg class="a" style="left:1120px;top:611px" width="11" height="11"><circle cx="5.5" cy="5.5" r="4.5" fill="#ccc" stroke="#555" stroke-width=".9"/><path d="M1 5.5h9M5.5 1v9M2 3h7M2 8h7" stroke="#666" stroke-width=".6"/></svg>
<div class="t" style="left:1132px;top:613px;font-size:7.2px;color:#2a3a5a">EPSG:32620</div>
<svg class="a" style="left:1185px;top:610px" width="13" height="13"><rect x=".5" y="1" width="11" height="8" rx="3" fill="#444"/><path d="M8 8l3 3" stroke="#444" stroke-width="1.5"/><path d="M3 5h1.5M5.5 5h1.5M8 5h1.5" stroke="#fff" stroke-width="1"/></svg>
</body></html>
